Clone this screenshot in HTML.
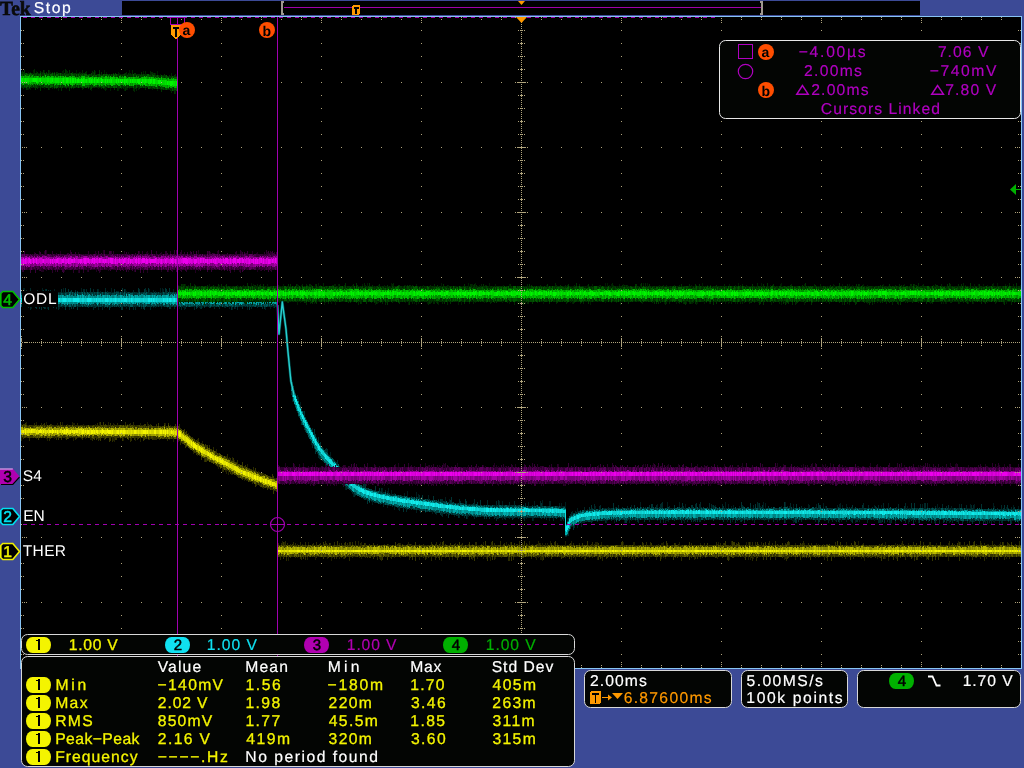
<!DOCTYPE html><html><head><meta charset="utf-8"><style>
html,body{margin:0;padding:0;background:#3c4a96;width:1024px;height:768px;overflow:hidden}
svg{position:absolute;left:0;top:0;display:block;will-change:transform}
text{font-family:"Liberation Sans",sans-serif;text-rendering:geometricPrecision}
.s{font-family:"Liberation Serif",serif;font-weight:bold}
</style></head><body>
<svg width="1024" height="768" viewBox="0 0 1024 768" shape-rendering="crispEdges">
<text class="s" x="0" y="15" font-size="20" fill="#0a0a0a" stroke="#0a0a0a" stroke-width="0.6" textLength="30.5" lengthAdjust="spacingAndGlyphs">Tek</text>
<text x="33.66" y="13" font-size="15.7" fill="#ffffff" letter-spacing="1.590" stroke="#ffffff" stroke-width="0.2">Stop</text>
<rect x="122" y="1" width="798" height="14" fill="#000000"/>
<path d="M281 1h3v2h-1v10h1v2h-3z" fill="#a09890"/>
<path d="M760 1h3v14h-3v-2h1v-10h-1z" fill="#a09890"/>
<rect x="284" y="7" width="477" height="1" fill="#a000a8"/>
<path d="M518 1h7l-3.5 4z" fill="#ff9900" shape-rendering="geometricPrecision"/>
<rect x="352" y="5" width="8" height="10" rx="2" fill="#ff9900"/>
<path d="M353.5 6.5h5v2h-1.5v5.5h-2v-5.5h-1.5z" fill="#000"/>
<rect x="20.5" y="16.5" width="1001" height="652" fill="#000" stroke="#88c4f4" stroke-width="1"/>
<g stroke-width="1">
<path stroke="#003434" d="M25 292v15M35 292v16M36 292v17M39 292v17M41 292v18M43 290v18M44 292v17M46 289v18M48 290v20M50 290v17M52 292v15M53 292v16M55 292v15M57 292v15M61 289v18M65 288v22M66 292v15M68 289v18M71 290v19M73 292v17M77 291v19M80 292v15M89 292v15M90 288v19M91 292v15M92 292v15M95 292v16M96 292v15M99 292v15M101 292v15M108 292v15M109 292v18M114 289v18M115 292v15M121 292v18M122 288v22M124 289v18M128 292v15M129 292v18M132 292v15M134 292v15M138 288v19M143 292v17M144 289v21M148 288v19M151 292v15M154 292v15M156 292v15M164 292v15M165 288v19M166 289v18M169 288v21M170 292v17M172 292v15M175 292v15M182 292v15M189 292v15M191 292v15M192 290v17M196 288v21M197 292v16M198 292v15M201 292v17M204 292v16M205 292v15M208 289v18M209 290v18M210 292v16M211 292v15M213 292v15M215 292v15M217 292v15M226 289v18M228 292v15M231 288v22M233 292v15M236 292v15M242 292v17M245 292v15M249 290v20M252 289v18M258 290v17M259 292v15M262 292v17M264 291v18M267 291v16M269 291v16M271 292v15M274 292v16M275 288v19"/><path stroke="#002828" d="M26 290v17M27 292v15M28 292v16M29 292v15M30 288v22M37 290v17M45 289v20M49 292v15M51 292v15M56 292v17M58 292v18M60 292v15M70 291v16M72 292v15M75 290v17M78 292v15M82 292v15M83 289v18M84 289v18M85 292v15M86 289v18M87 292v15M88 292v16M93 289v21M94 292v16M97 289v18M102 292v18M104 292v16M105 288v19M106 292v15M107 291v17M110 292v16M116 291v16M133 290v20M135 292v18M136 292v15M139 289v18M141 292v17M142 292v15M145 288v19M147 292v15M150 292v18M158 292v15M171 292v15M174 292v17M180 292v15M181 292v18M185 292v17M187 290v17M193 289v18M194 292v18M200 290v19M206 290v17M212 291v16M214 292v17M219 292v17M222 288v19M223 292v15M225 291v17M230 291v16M234 292v17M237 288v22M239 291v16M240 292v15M241 292v15M248 292v15M251 292v17M253 292v15M255 292v15M257 291v17M261 292v15M268 292v15"/><path stroke="#001d1d" d="M21 290v17M22 292v15M23 288v19M24 288v19M31 292v17M32 292v15M33 292v15M34 292v15M38 292v15M40 292v15M42 288v19M47 292v17M54 289v18M59 292v17M62 292v16M63 288v19M64 292v15M67 292v15M69 292v18M74 292v15M76 292v15M79 292v15M81 288v19M98 289v21M100 291v16M103 292v15M111 288v19M112 292v15M113 292v15M117 291v16M118 291v16M119 292v16M120 292v15M123 292v15M125 289v18M126 291v18M127 292v15M130 292v15M131 292v15M137 292v15M140 292v15M146 290v17M149 289v18M152 292v15M153 290v18M155 291v17M157 292v15M159 292v15M160 288v19M161 292v17M162 288v19M163 289v18M167 291v17M168 292v15M173 289v18M176 292v15M177 292v15M178 292v15M179 292v17M183 292v16M184 292v18M186 292v15M188 292v15M190 292v15M195 291v16M199 291v17M202 290v18M203 291v16M207 292v15M216 292v15M218 290v17M220 292v15M221 292v15M224 292v16M227 292v15M229 292v17M232 290v20M235 292v17M238 289v18M243 288v19M244 292v15M246 289v18M247 289v21M250 292v15M254 292v15M256 290v17M260 292v15M263 292v15M265 292v18M266 288v19M270 292v17M272 292v15M273 288v20M276 290v17"/><path stroke="#005858" d="M21 293v14M22 292v14M24 293v13M25 292v15M28 293v14M29 293v13M30 292v14M34 292v15M35 292v14M39 293v13M41 293v13M43 292v15M45 293v13M47 292v15M48 292v14M51 292v15M53 293v13M54 293v13M61 293v13M65 293v14M69 292v15M70 292v15M72 292v14M74 293v14M75 292v15M77 292v14M82 292v15M84 292v14M87 292v15M88 293v13M97 292v14M102 292v14M105 292v15M107 293v14M120 292v15M124 292v14M126 293v13M130 293v14M131 293v14M132 293v14M139 292v15M143 293v14M145 293v14M146 292v14M152 293v13M155 293v13M163 292v14M167 293v14M168 292v15M172 293v13M179 292v14M180 292v15M182 292v14M184 292v14M186 292v15M189 293v14M191 293v13M192 292v14M194 293v13M196 293v14M197 292v14M199 293v13M210 292v15M211 293v13M214 292v14M217 293v13M218 293v14M220 292v14M222 293v14M225 293v13M226 292v14M227 293v14M229 293v13M230 292v14M231 293v13M232 293v14M235 292v15M253 292v14M255 293v14M261 293v14M264 293v14M266 292v15M267 292v14M269 292v14M273 293v13"/><path stroke="#004444" d="M23 292v15M26 293v13M27 292v15M31 292v14M36 292v14M42 293v14M44 292v14M50 292v14M55 292v14M56 293v14M58 293v14M62 293v13M66 293v13M81 292v14M85 293v14M91 293v14M92 293v13M94 292v14M98 292v15M100 293v14M106 292v15M108 293v13M112 293v14M113 293v13M114 292v15M116 292v15M117 292v14M118 292v15M123 293v13M128 292v14M137 293v13M138 293v13M141 293v14M144 292v15M151 293v14M153 293v14M154 292v14M156 293v13M158 292v15M160 293v13M164 293v14M166 293v14M170 292v14M173 292v14M174 293v14M175 292v15M176 293v13M181 293v13M185 293v13M187 292v14M188 293v14M190 293v14M193 293v13M200 292v14M202 293v13M203 293v13M204 293v14M206 292v14M209 292v14M213 293v13M216 292v15M233 292v14M236 293v13M237 293v14M239 292v14M242 292v14M243 293v13M244 292v14M246 293v13M247 292v15M249 292v14M250 292v15M252 292v14M254 293v14M256 293v13M258 293v14M260 293v14M263 293v13M265 293v14"/><path stroke="#003131" d="M32 293v14M33 292v14M37 292v14M38 292v14M40 293v14M46 292v15M49 292v14M52 293v13M57 293v14M59 293v14M60 293v14M63 293v13M64 293v14M67 292v14M68 292v14M71 293v13M73 292v14M76 293v13M78 292v14M79 292v15M80 292v14M83 293v13M86 293v14M89 293v13M90 293v14M93 293v13M95 293v13M96 293v13M99 292v15M101 292v15M103 292v14M104 293v14M109 292v14M110 292v15M111 293v14M115 293v14M119 293v13M121 292v14M122 292v15M125 292v15M127 292v14M129 293v13M133 293v13M134 293v14M135 293v13M136 293v13M140 293v13M142 293v14M147 292v15M148 292v15M149 293v14M150 293v14M157 293v13M159 293v13M161 293v14M162 292v14M165 293v13M169 293v13M171 292v15M177 293v14M178 293v13M183 293v13M195 292v14M198 293v14M201 293v13M205 292v15M207 293v13M208 292v14M212 292v15M215 292v15M219 292v14M221 292v14M223 292v14M224 293v14M228 293v13M234 292v15M238 292v15M240 292v14M241 293v14M245 293v14M248 292v14M251 292v14M257 293v13M259 293v13M262 293v13M268 293v13M270 292v15M271 293v14M272 292v14M274 293v14M275 292v15M276 292v14"/><path stroke="#00acac" d="M23 295v9M24 295v10M26 295v9M28 295v9M29 295v9M31 295v9M32 295v10M40 294v10M43 295v10M44 294v10M46 295v9M49 295v8M50 295v9M55 294v10M56 294v11M62 295v9M67 295v10M77 294v10M78 295v8M80 295v9M82 294v10M83 295v9M85 296v8M88 295v10M97 295v10M103 295v9M107 295v9M109 295v10M115 295v9M120 295v8M121 295v8M123 296v8M126 294v9M129 294v10M131 295v8M132 295v9M133 296v8M135 295v9M137 295v10M144 295v8M146 295v9M148 295v9M149 295v9M152 295v9M154 295v9M156 296v7M157 295v9M162 295v8M166 295v9M167 295v9M172 295v9M173 296v9M174 294v10M177 296v8M178 296v8M181 294v9M182 295v9M183 295v10M189 296v8M193 295v9M199 294v10M201 295v8M205 295v9M211 295v9M212 294v10M213 295v9M216 294v10M217 295v9M222 295v9M225 296v8M227 295v8M232 295v9M233 294v10M235 295v10M237 295v8M238 295v8M240 295v9M241 294v11M244 295v8M247 295v9M249 295v9M251 294v10M256 295v10M260 294v9M263 295v9M269 294v9M270 294v9M273 295v8M275 295v9"/><path stroke="#009797" d="M21 295v8M25 295v9M27 295v9M33 295v9M34 295v9M35 295v10M36 295v9M38 295v10M39 294v10M45 295v9M51 295v9M52 295v10M57 295v9M58 295v9M60 295v8M63 295v9M64 296v9M65 296v8M69 294v10M73 296v8M89 294v10M91 296v8M93 296v8M98 295v9M100 294v10M102 295v9M104 295v9M105 295v10M110 296v8M111 295v8M114 295v10M116 294v10M127 296v8M136 295v8M138 296v7M139 295v9M140 295v8M143 295v9M145 296v8M147 295v9M159 295v8M160 295v9M163 295v10M164 295v10M165 295v8M168 294v9M170 295v10M176 294v11M179 295v9M180 295v8M184 295v10M186 295v9M187 294v10M191 294v10M194 295v10M196 295v9M197 295v9M202 294v11M203 295v9M204 295v8M209 295v8M210 295v9M214 295v8M215 296v8M219 295v10M221 295v8M226 295v9M230 295v9M231 295v10M239 295v10M242 295v9M245 294v10M246 295v9M250 294v9M252 295v9M253 295v9M254 295v9M257 295v8M258 295v10M261 295v10M262 295v9M264 295v9M267 294v9M268 295v8M271 295v10M272 295v9M274 296v8"/><path stroke="#008282" d="M22 295v9M30 296v8M37 296v7M41 295v10M42 295v10M47 296v9M48 295v10M53 295v8M54 295v10M59 295v9M61 295v9M66 295v9M68 295v9M70 296v8M71 295v9M72 295v10M74 296v8M75 294v10M76 296v8M79 295v8M81 295v9M84 295v9M86 295v10M87 296v8M90 295v10M92 294v10M94 296v7M95 295v8M96 296v8M99 295v8M101 296v8M106 295v10M108 295v10M112 295v10M113 295v9M117 296v9M118 295v9M119 295v9M122 295v8M124 295v9M125 296v8M128 294v10M130 295v9M134 295v9M141 294v9M142 294v10M150 295v8M151 295v10M153 295v9M155 295v10M158 295v9M161 296v8M169 296v8M171 294v10M175 295v9M185 295v9M188 294v10M190 296v8M192 295v9M195 295v9M198 295v10M200 295v8M206 295v8M207 294v9M208 295v9M218 295v9M220 295v9M223 295v9M224 296v8M228 294v10M229 296v8M234 294v10M236 296v8M243 295v9M248 295v9M255 295v9M259 295v8M265 295v9M266 295v9M276 294v11"/><path stroke="#10ecec" d="M23 298v4M24 298v4M27 298v4M29 298v4M30 298v4M37 298v4M43 298v4M53 298v4M55 298v4M56 298v4M57 298v4M59 298v4M63 298v4M64 298v4M65 298v4M73 298v4M74 298v4M75 298v4M76 298v4M77 298v4M78 298v4M87 298v4M88 298v4M89 298v4M90 298v4M96 298v4M105 298v4M106 298v4M107 298v4M115 298v4M124 298v4M125 298v4M126 298v4M131 298v4M148 298v4M149 298v4M151 298v4M153 298v4M163 298v4M167 298v4M169 298v4M170 298v4M174 298v4M177 298v4M178 298v4M180 298v4M186 298v4M187 298v4M190 298v4M194 298v4M199 298v4M201 298v4M202 298v4M205 298v4M211 298v4M215 298v4M217 298v4M219 298v4M224 298v4M233 298v4M235 298v4M242 298v4M244 298v4M248 298v4M249 298v4M251 298v4M254 298v4M255 298v4M256 298v4M257 298v4M259 298v4M262 298v4M264 298v4M265 298v4M266 298v4M271 298v4M272 298v4M273 298v4"/><path stroke="#0fdddd" d="M21 298v4M22 298v4M34 298v4M38 298v4M41 298v4M42 298v4M46 298v4M47 298v4M49 298v4M50 298v4M54 298v4M58 298v4M62 298v4M66 298v4M68 298v4M69 298v4M70 298v4M79 298v4M82 298v4M83 298v4M91 298v4M94 298v4M98 298v4M99 298v4M100 298v4M102 298v4M108 298v4M110 298v4M111 298v4M113 298v4M114 298v4M116 298v4M118 298v4M119 298v4M121 298v4M122 298v4M123 298v4M129 298v4M132 298v4M135 298v4M136 298v4M137 298v4M138 298v4M139 298v4M143 298v4M150 298v4M154 298v4M156 298v4M164 298v4M165 298v4M166 298v4M171 298v4M173 298v4M182 298v4M184 298v4M185 298v4M189 298v4M192 298v4M195 298v4M196 298v4M197 298v4M198 298v4M200 298v4M203 298v4M207 298v4M209 298v4M210 298v4M212 298v4M213 298v4M216 298v4M222 298v4M225 298v4M230 298v4M232 298v4M236 298v4M237 298v4M239 298v4M240 298v4M243 298v4M245 298v4M246 298v4M250 298v4M252 298v4M260 298v4M267 298v4M269 298v4M275 298v4M276 298v4"/><path stroke="#0ecfcf" d="M25 298v4M26 298v4M28 298v4M31 298v4M32 298v4M33 298v4M35 298v4M36 298v4M39 298v4M40 298v4M44 298v4M45 298v4M48 298v4M51 298v4M52 298v4M60 298v4M61 298v4M67 298v4M71 298v4M72 298v4M80 298v4M81 298v4M84 298v4M85 298v4M86 298v4M92 298v4M93 298v4M95 298v4M97 298v4M101 298v4M103 298v4M104 298v4M109 298v4M112 298v4M117 298v4M120 298v4M127 298v4M128 298v4M130 298v4M133 298v4M134 298v4M140 298v4M141 298v4M142 298v4M144 298v4M145 298v4M146 298v4M147 298v4M152 298v4M155 298v4M157 298v4M158 298v4M159 298v4M160 298v4M161 298v4M162 298v4M168 298v4M172 298v4M175 298v4M176 298v4M179 298v4M181 298v4M183 298v4M188 298v4M191 298v4M193 298v4M204 298v4M206 298v4M208 298v4M214 298v4M218 298v4M220 298v4M221 298v4M223 298v4M226 298v4M227 298v4M228 298v4M229 298v4M231 298v4M234 298v4M238 298v4M241 298v4M247 298v4M253 298v4M258 298v4M261 298v4M263 298v4M268 298v4M270 298v4M274 298v4"/>
<path stroke="#003434" d="M293 386v16M296 396v15M299 404v14M301 407v18M304 411v19M305 417v15M314 429v20M315 434v20M320 442v18M322 447v14M325 449v15M332 458v13M338 465v13M340 467v13M341 468v14M342 469v16M347 475v13M351 479v13M357 483v13M361 485v13M362 486v12M363 482v17M365 484v16M367 488v16M369 489v14M375 486v17M376 491v12M377 491v12M378 491v13M379 488v16M392 494v12M395 494v13M396 495v12M397 495v13M402 496v12M403 496v16M408 497v12M410 497v12M412 497v12M414 497v13M415 498v12M417 497v13M420 498v15M421 497v14M422 495v16M424 499v12M426 499v13M427 499v13M429 499v13M433 496v16M435 500v14M440 499v16M443 501v13M448 502v16M450 500v14M451 497v18M458 503v15M462 503v13M465 499v17M466 501v18M469 504v12M472 504v12M473 503v14M477 502v15M480 500v17M484 505v14M486 505v14M489 505v14M494 505v14M497 505v14M500 505v13M501 505v13M504 505v14M508 505v13M511 505v13M512 505v15M518 505v14M521 504v14M538 506v12M541 503v16M543 506v12M544 506v13M548 506v12M552 506v12M556 506v12M569 516v15M573 513v17M579 511v13M580 510v13M586 510v12M589 507v15M590 509v13M591 505v18M601 509v12M612 508v12M613 503v17M616 507v15M617 508v12M622 507v13M623 508v12M625 508v15M626 508v15M632 508v12M634 505v15M641 508v12M644 508v14M647 508v12M648 507v13M651 504v16M652 504v16M653 508v12M673 508v12M674 505v16M677 508v12M678 508v12M680 508v12M682 503v17M691 505v17M692 505v15M694 508v13M696 503v17M697 508v14M707 508v12M713 505v16M720 508v12M721 508v12M723 506v16M724 508v12M726 508v12M730 508v15M735 507v16M737 508v13M741 502v20M744 508v15M745 508v12M746 508v12M748 508v12M750 503v17M755 504v16M759 503v17M762 505v15M766 508v12M768 506v16M773 508v14M784 502v21M786 508v12M791 508v12M795 508v15M796 504v19M798 508v14M799 508v12M803 508v12M814 508v12M817 508v12M818 503v21M819 505v17M820 505v15M821 508v12M826 506v14M838 507v15M843 508v12M844 508v12M845 508v12M847 507v13M852 505v18M860 508v12M861 508v12M862 505v15M864 508v12M865 508v12M873 508v12M875 506v14M876 507v13M882 508v14M884 508v15M892 508v12M894 508v12M896 507v13M901 508v14M904 506v14M911 503v18M912 508v12M913 508v16M914 503v17M916 508v12M919 508v15M929 508v12M943 508v15M944 508v14M945 508v12M947 508v12M948 505v16M950 508v14M957 508v14M960 508v13M972 508v16M975 509v12M976 509v12M979 509v15M981 504v17M983 509v16M986 509v12M990 509v12M992 509v12M995 509v12M1003 508v13M1004 505v16M1007 505v16M1009 509v12M1010 509v15M1014 507v14M1016 509v12"/><path stroke="#002828" d="M291 377v17M294 390v15M295 393v15M297 395v18M307 421v14M309 425v14M310 427v14M312 428v20M316 437v15M317 440v14M318 437v21M319 443v16M326 448v18M327 449v17M329 455v13M331 457v16M334 460v14M336 462v14M337 460v17M343 470v17M344 472v13M346 474v16M348 476v13M354 476v21M358 479v17M359 484v13M364 483v16M368 488v13M373 490v12M374 490v13M381 488v16M383 492v15M384 492v13M385 490v15M393 494v12M399 495v16M400 495v13M406 496v16M411 496v13M413 497v13M419 495v16M430 500v12M438 499v14M441 499v17M442 499v18M444 501v13M447 502v12M452 502v13M455 503v12M457 503v13M459 499v19M460 501v14M463 503v13M464 504v14M474 499v20M475 504v13M479 505v12M483 505v12M485 505v12M487 500v17M488 505v12M490 505v12M492 505v12M493 505v12M496 501v20M498 500v19M503 505v13M505 505v15M506 505v13M507 505v13M509 502v17M510 505v13M513 505v14M514 501v17M519 505v13M520 505v16M522 506v12M523 506v13M524 506v15M525 503v15M526 506v13M529 506v12M530 506v12M531 506v12M532 506v15M535 506v12M536 506v12M537 506v12M540 501v17M546 506v14M547 506v12M551 506v12M553 506v15M554 506v12M557 506v12M563 506v15M564 506v13M568 519v17M570 514v15M571 512v15M574 513v15M575 511v14M576 512v13M578 511v13M582 511v12M583 510v13M584 507v16M585 510v12M588 510v12M592 508v14M593 509v12M594 504v17M596 509v12M597 509v13M599 506v15M600 505v16M602 508v13M603 508v13M605 508v15M608 507v13M618 505v16M627 506v15M628 508v12M633 508v12M637 508v14M638 508v15M639 508v12M642 508v12M645 507v13M649 505v17M650 508v12M654 508v12M656 505v15M658 508v12M659 508v12M660 504v19M661 503v17M662 502v18M663 508v15M669 506v14M670 508v12M681 507v16M683 506v15M687 508v14M689 508v12M693 508v14M695 504v18M698 508v12M699 504v18M700 502v20M701 507v13M702 508v12M703 508v12M704 508v13M705 508v12M706 508v12M708 508v12M709 503v17M711 504v16M714 506v14M716 508v12M717 508v12M718 508v12M722 504v16M729 508v12M734 508v12M736 508v12M738 508v12M740 508v14M742 505v16M743 506v14M747 508v13M749 508v12M753 505v15M754 508v15M756 508v12M757 502v18M767 508v12M769 508v12M771 508v12M774 508v12M780 508v12M782 508v12M783 508v12M787 506v14M790 503v17M794 508v14M800 508v12M801 506v16M810 508v12M812 508v12M813 508v12M815 508v14M822 508v12M824 508v13M828 508v15M831 508v12M832 508v14M836 508v14M848 508v12M851 508v14M854 508v12M856 508v14M857 508v14M863 503v17M866 508v12M867 508v15M868 505v15M870 508v12M871 508v12M872 508v12M878 505v18M879 508v15M880 508v15M883 503v17M887 508v14M891 508v15M898 504v16M902 508v12M905 503v20M906 508v12M909 508v14M920 504v16M921 508v13M924 503v17M925 503v17M927 503v17M931 508v15M933 508v12M935 506v18M936 508v12M938 508v12M939 507v17M940 508v12M942 504v16M946 506v17M952 508v15M953 508v13M954 508v13M955 508v13M958 508v16M961 504v17M962 508v16M965 508v13M966 505v16M971 505v17M973 505v17M977 509v12M978 509v12M982 509v12M984 509v13M987 509v15M989 509v14M991 508v16M996 509v12M999 509v15M1000 509v12M1001 505v18M1002 509v16M1008 508v14M1011 507v17M1012 509v12M1017 509v12M1019 509v12M1020 509v12"/><path stroke="#001d1d" d="M292 382v20M298 397v20M300 402v19M302 411v14M303 411v16M306 419v14M308 423v15M311 429v16M313 432v14M321 446v14M323 448v14M324 450v13M328 454v13M330 452v20M333 459v13M335 461v17M339 466v13M345 473v17M349 477v13M350 478v13M352 478v16M353 481v16M355 482v14M356 482v13M360 485v12M366 488v12M370 489v12M371 489v13M372 490v15M380 491v14M382 488v16M386 493v12M387 491v17M388 488v18M389 493v13M390 494v12M391 490v16M394 493v17M398 495v15M401 495v13M404 493v15M405 496v12M407 491v19M409 497v13M416 492v21M418 494v16M423 499v12M425 499v14M428 495v17M431 500v12M432 500v14M434 500v13M436 500v15M437 501v12M439 501v12M445 497v17M446 502v14M449 499v15M453 503v12M454 503v14M456 503v12M461 503v13M467 504v15M468 504v13M470 504v12M471 504v13M476 504v14M478 505v12M481 505v12M482 505v12M491 505v12M495 505v12M499 501v17M502 501v19M515 505v13M516 505v13M517 505v13M527 506v12M528 502v16M533 506v15M534 501v17M539 506v12M542 500v18M545 506v12M549 501v20M550 501v17M555 506v12M558 506v12M559 503v15M560 506v15M561 503v18M562 506v14M565 502v35M566 524v13M567 518v18M572 511v16M577 508v20M581 511v16M587 509v13M595 506v15M598 509v12M604 508v13M606 508v15M607 508v13M609 508v12M610 508v12M611 508v12M614 508v15M615 507v13M619 508v12M620 508v12M621 508v12M624 508v15M629 508v15M630 508v12M631 505v16M635 508v13M636 508v12M640 502v18M643 508v12M646 508v12M655 508v12M657 504v17M664 508v12M665 508v15M666 508v13M667 502v19M668 508v14M671 508v12M672 508v12M675 508v12M676 508v12M679 502v18M684 508v15M685 504v16M686 508v12M688 508v12M690 508v12M710 508v12M712 505v15M715 505v15M719 508v12M725 502v18M727 508v14M728 504v16M731 506v14M732 508v14M733 505v15M739 506v14M751 508v12M752 508v13M758 503v17M760 506v14M761 507v13M763 502v18M764 508v13M765 503v17M770 508v12M772 508v12M775 508v12M776 508v12M777 508v14M778 508v12M779 508v13M781 506v14M785 502v21M788 508v12M789 506v14M792 508v13M793 504v19M797 508v12M802 508v12M804 507v13M805 508v12M806 508v12M807 508v12M808 504v16M809 505v15M811 508v12M816 504v16M823 503v17M825 506v15M827 508v12M829 508v13M830 508v12M833 508v12M834 508v12M835 508v13M837 505v15M839 504v19M840 503v17M841 508v14M842 505v15M846 504v18M849 508v12M850 508v13M853 508v12M855 508v15M858 508v12M859 508v14M869 508v12M874 505v16M877 508v12M881 505v18M885 508v12M886 508v12M888 503v17M889 508v15M890 508v16M893 508v12M895 508v16M897 508v12M899 508v12M900 508v12M903 508v13M907 506v14M908 508v16M910 508v12M915 508v14M917 508v12M918 508v15M922 504v16M923 508v12M926 508v12M928 508v14M930 508v12M932 507v13M934 508v15M937 504v16M941 508v12M949 508v15M951 506v15M956 508v14M959 504v17M963 508v14M964 508v13M967 508v15M968 508v13M969 508v15M970 504v18M974 504v18M980 509v12M985 509v15M988 509v12M993 503v19M994 506v17M997 509v12M998 509v12M1005 509v12M1006 507v14M1013 505v16M1015 509v12M1018 506v19"/><path stroke="#005858" d="M293 386v15M295 394v13M298 401v15M302 411v14M305 418v12M306 420v13M308 424v13M309 425v14M314 435v13M316 438v14M324 450v13M325 452v12M326 452v13M327 453v12M332 458v13M336 464v12M338 464v14M340 467v14M345 473v13M348 477v12M353 481v11M356 483v12M357 485v11M358 484v12M360 485v12M361 485v13M363 488v10M369 489v13M374 491v10M376 492v10M377 492v11M378 491v13M385 492v13M387 493v12M388 494v11M395 494v12M396 496v11M397 496v11M398 495v12M404 496v12M406 496v12M407 497v12M408 498v11M409 497v11M414 497v12M425 499v13M428 500v11M429 501v11M433 501v10M434 500v12M439 502v11M446 501v12M452 503v10M457 504v10M460 503v12M462 505v11M465 504v12M469 505v10M471 505v10M472 505v11M473 505v11M476 504v13M477 505v11M482 506v10M483 506v10M484 505v12M486 505v12M488 505v12M490 506v11M491 506v11M492 505v11M499 505v13M500 505v11M501 506v11M504 506v11M505 505v12M506 505v12M508 506v10M510 507v10M515 505v12M522 506v11M527 506v11M535 506v11M537 505v12M540 507v11M544 506v12M545 506v11M550 507v11M552 507v11M555 506v12M562 508v11M564 507v11M569 516v13M573 514v12M580 511v12M581 512v10M582 510v11M583 510v11M595 510v11M596 509v11M597 509v12M599 510v10M602 508v11M605 509v10M606 509v11M607 510v10M613 508v11M616 508v13M619 509v12M620 509v11M621 509v10M623 508v11M624 508v12M626 509v11M630 507v13M635 508v12M637 507v13M640 507v13M644 509v10M647 507v13M650 508v11M657 508v12M660 508v11M662 508v11M663 509v11M665 508v11M672 509v11M676 508v12M677 507v12M680 508v12M685 509v11M686 508v11M687 508v11M689 507v12M690 508v12M691 509v10M694 508v11M697 507v13M701 508v12M702 509v11M704 508v10M705 508v11M706 508v12M708 509v11M711 508v11M714 509v10M715 507v12M717 508v11M719 507v13M722 508v12M728 508v12M735 507v11M736 509v11M740 508v11M744 507v13M745 509v10M746 508v11M749 509v11M753 509v9M756 508v10M757 508v11M760 508v11M768 509v10M769 508v11M773 507v12M779 507v13M784 507v12M785 507v12M786 507v13M788 508v11M789 508v11M795 508v12M796 508v11M797 508v11M799 507v13M805 508v12M809 509v10M811 508v11M812 507v11M813 507v13M820 507v13M826 509v11M827 508v12M838 508v11M839 508v12M842 508v12M843 508v12M844 509v11M847 509v10M848 509v11M854 509v10M870 509v10M873 509v10M877 508v12M881 509v10M884 508v11M885 509v10M887 508v11M888 509v11M889 508v12M890 507v12M895 508v13M901 508v11M908 509v10M910 509v10M913 509v10M914 508v12M918 509v11M919 508v12M920 508v12M921 508v12M922 508v13M924 509v11M925 509v11M926 509v12M927 508v12M929 508v13M932 508v12M934 509v12M935 508v12M939 510v9M941 508v11M942 508v11M943 510v9M945 508v12M951 510v10M954 508v13M956 509v11M960 508v12M961 508v13M962 509v12M963 510v11M964 508v11M967 509v12M975 510v11M976 509v11M977 508v12M978 509v12M979 508v11M980 509v12M981 509v11M982 509v12M988 508v12M993 508v12M994 510v10M995 509v11M1008 509v12M1015 509v13M1016 510v10M1017 509v13M1019 510v11"/><path stroke="#004444" d="M292 382v15M294 391v13M296 397v14M300 406v14M313 434v11M315 436v13M318 441v14M319 443v13M320 445v13M322 448v13M330 457v12M331 459v11M333 459v13M334 461v13M341 468v13M342 470v13M344 472v13M346 474v13M349 478v12M354 483v11M355 483v12M359 485v12M365 487v12M366 488v11M368 488v13M370 489v11M371 489v12M372 490v11M373 491v11M375 491v11M381 492v12M382 493v10M386 494v11M390 495v11M394 495v11M399 496v10M400 495v13M401 496v12M402 496v12M412 497v12M413 498v11M416 497v13M419 498v11M421 499v12M422 499v11M427 499v12M432 500v11M436 500v13M437 501v12M438 500v13M441 502v11M444 502v12M445 502v11M450 503v11M451 503v11M453 502v13M454 503v12M455 503v12M458 503v12M461 503v12M463 504v11M464 504v10M468 505v10M474 505v11M475 505v11M478 505v12M480 505v12M481 505v11M496 506v10M502 505v12M507 506v10M512 506v11M514 506v12M516 506v11M517 506v11M518 506v10M519 505v12M520 506v10M523 505v12M524 507v11M534 506v12M542 506v12M546 507v11M548 507v10M549 506v12M553 507v10M556 506v13M558 507v10M559 506v11M563 507v10M565 508v28M566 524v12M567 521v14M568 518v14M570 516v13M571 515v11M574 513v12M575 514v11M578 512v12M584 511v10M587 510v11M588 511v11M589 511v11M592 509v12M593 509v12M594 510v11M598 510v10M601 509v12M604 509v11M608 509v11M614 509v10M617 508v12M625 509v11M628 508v11M632 509v11M638 508v11M639 508v11M643 507v11M645 508v12M651 507v13M652 509v9M653 507v12M655 507v12M656 508v10M666 508v11M668 507v13M669 509v11M674 508v11M675 508v11M679 507v12M681 508v11M682 509v10M688 507v13M693 507v12M695 508v12M703 507v11M709 509v10M712 509v10M713 508v12M720 509v11M721 509v10M724 509v10M726 509v11M727 509v10M733 508v12M738 508v12M739 508v12M742 507v12M743 507v12M747 507v13M748 507v13M751 509v10M752 509v11M755 507v13M763 508v12M765 509v11M767 508v11M770 508v11M774 507v11M775 508v12M776 508v12M780 507v13M782 509v11M787 507v12M791 507v12M801 509v11M802 508v11M807 508v11M814 508v12M817 508v12M819 509v11M824 509v11M831 509v11M833 509v10M834 508v12M835 508v11M840 508v12M853 509v10M855 507v12M856 508v11M857 508v11M858 509v11M859 508v11M864 508v11M865 508v11M868 508v12M869 508v11M871 508v12M874 509v10M875 509v10M876 508v11M879 509v11M882 509v10M883 508v11M886 508v11M893 508v12M896 509v10M900 508v13M902 509v11M903 509v10M904 508v13M905 509v10M907 509v10M912 508v11M916 509v10M931 508v12M933 508v12M946 509v11M947 508v13M955 508v12M969 509v11M970 509v12M974 510v10M984 509v12M985 509v11M987 509v11M989 509v10M990 509v12M991 509v11M992 510v10M1002 510v11M1010 510v11M1012 510v10M1018 509v12M1020 509v11"/><path stroke="#003131" d="M291 377v18M297 399v14M299 405v13M301 410v12M303 414v12M304 414v14M307 422v13M310 428v13M311 429v13M312 431v12M317 440v13M321 447v12M323 449v13M328 455v12M329 456v13M335 462v11M337 464v13M339 466v12M343 470v13M347 475v14M350 479v11M351 479v12M352 481v12M362 487v10M364 487v13M367 488v13M379 492v10M380 492v12M383 494v10M384 494v10M389 493v12M391 495v10M392 494v13M393 495v11M403 497v11M405 496v13M410 497v12M411 498v12M415 499v11M417 498v11M418 499v11M420 499v12M423 500v11M424 499v12M426 500v11M430 500v12M431 500v12M435 501v10M440 502v11M442 502v11M443 502v12M447 503v11M448 502v12M449 503v12M456 504v12M459 504v10M466 504v12M467 505v11M470 505v10M479 506v10M485 506v10M487 505v11M489 506v11M493 505v12M494 506v12M495 506v12M497 506v11M498 506v10M503 506v11M509 505v12M511 506v10M513 505v12M521 506v12M525 505v12M526 506v11M528 507v11M529 507v11M530 506v11M531 506v11M532 505v13M533 506v12M536 505v13M538 507v11M539 506v11M541 505v13M543 506v11M547 507v11M551 507v10M554 507v11M557 506v12M560 507v11M561 508v10M572 515v11M576 512v13M577 513v10M579 512v12M585 512v10M586 510v12M590 510v12M591 510v11M600 509v12M603 509v11M609 508v12M610 509v10M611 508v13M612 508v11M615 509v11M618 509v10M622 508v11M627 508v12M629 509v10M631 509v10M633 508v12M634 508v11M636 508v12M641 507v12M642 509v10M646 508v12M648 509v10M649 507v12M654 509v11M658 508v11M659 507v12M661 508v12M664 509v9M667 507v12M670 508v10M671 508v11M673 508v12M678 507v12M683 507v12M684 508v10M692 509v10M696 509v10M698 508v11M699 509v11M700 508v10M707 507v13M710 508v12M716 507v11M718 508v11M723 509v10M725 509v11M729 509v10M730 508v11M731 508v10M732 508v12M734 508v11M737 508v11M741 509v9M750 509v11M754 508v10M758 508v12M759 507v12M761 507v13M762 509v10M764 509v11M766 509v11M771 507v12M772 508v11M777 508v12M778 508v10M781 508v11M783 507v12M790 509v9M792 509v9M793 507v12M794 508v12M798 508v11M800 509v11M803 508v11M804 508v10M806 508v12M808 508v11M810 508v12M815 507v13M816 507v13M818 508v11M821 509v10M822 508v11M823 507v13M825 509v10M828 508v10M829 508v12M830 508v11M832 509v11M836 509v9M837 509v11M841 509v10M845 508v11M846 508v10M849 507v12M850 508v11M851 507v13M852 507v12M860 509v11M861 509v10M862 509v10M863 508v11M866 508v12M867 509v10M872 507v12M878 508v12M880 509v11M891 508v13M892 508v12M894 509v10M897 509v11M898 508v12M899 509v11M906 508v12M909 509v11M911 509v11M915 508v12M917 508v11M923 508v13M928 508v12M930 509v10M936 508v13M937 509v11M938 508v12M940 510v10M944 508v12M948 510v9M949 509v11M950 508v13M952 509v11M953 509v11M957 509v11M958 509v12M959 508v12M965 509v12M966 509v12M968 509v11M971 508v12M972 508v12M973 510v10M983 509v10M986 510v10M996 509v11M997 508v13M998 509v12M999 509v12M1000 509v12M1001 510v11M1003 508v13M1004 509v11M1005 509v12M1006 510v10M1007 509v11M1009 509v12M1011 509v11M1013 508v12M1014 510v11"/><path stroke="#00acac" d="M291 379v12M297 401v10M303 415v10M305 420v8M312 432v11M317 442v9M329 457v10M331 459v9M332 461v9M334 462v10M335 463v9M339 468v10M341 470v9M342 471v9M344 474v8M349 479v9M352 482v9M353 483v9M358 485v9M363 488v8M366 490v8M367 490v8M370 491v7M371 491v8M374 492v9M375 492v9M378 494v7M379 494v8M383 494v9M391 496v8M393 496v9M395 496v8M396 496v8M400 497v8M403 498v9M404 498v8M407 498v9M409 498v10M410 500v6M412 499v7M416 499v8M418 499v9M419 501v7M425 501v8M429 502v8M443 504v8M444 504v7M449 504v9M453 505v8M454 505v8M455 504v8M457 505v8M462 505v8M463 505v8M469 507v6M476 506v8M477 507v8M480 507v8M484 507v7M486 507v7M487 507v8M492 508v8M495 508v8M499 508v8M503 508v7M504 508v8M505 508v7M507 507v9M510 507v9M511 507v9M512 508v7M513 508v8M517 508v8M519 508v8M520 508v7M521 507v9M524 507v9M525 507v9M528 508v7M531 508v8M532 507v9M536 508v7M539 507v9M542 508v8M543 508v7M545 508v8M548 508v8M549 508v8M552 507v8M554 508v8M555 508v8M556 508v8M560 509v8M565 509v26M566 525v10M569 518v11M576 514v9M577 514v8M578 513v9M586 511v9M587 511v9M588 512v8M589 511v9M592 511v9M594 510v9M596 511v8M598 511v8M599 510v9M616 509v8M618 509v8M630 510v8M632 510v8M634 510v7M635 509v8M641 510v8M642 509v9M644 510v8M646 509v9M655 510v8M656 510v8M658 510v8M664 510v8M667 509v8M668 510v8M669 510v7M670 510v8M674 509v8M675 510v8M683 510v8M684 510v7M688 509v8M693 509v9M694 509v9M701 510v7M705 509v9M706 509v8M707 510v7M709 510v7M710 510v7M713 510v8M716 510v7M717 510v7M721 510v7M724 510v8M727 509v9M728 510v7M729 509v8M730 509v9M733 510v8M734 510v7M735 510v7M740 510v7M742 509v9M744 510v8M746 509v8M749 509v9M750 509v9M752 510v8M757 510v8M762 509v9M763 510v7M770 509v9M771 509v9M776 510v8M780 510v8M781 509v9M782 509v8M784 509v9M785 509v9M788 509v9M799 509v8M802 510v7M803 510v8M804 509v9M807 510v8M809 509v8M810 509v8M812 510v7M817 510v8M822 509v9M824 509v9M828 510v8M829 511v6M830 510v8M833 509v9M837 510v8M840 510v8M842 510v8M843 509v9M844 510v7M845 510v8M846 509v8M849 510v9M854 510v8M858 510v8M864 510v8M865 510v8M868 509v9M873 509v8M874 509v9M877 509v9M882 509v9M883 509v9M886 511v8M890 511v7M898 509v10M900 510v8M902 509v10M904 510v8M906 510v9M913 510v7M916 510v8M918 510v8M921 510v7M922 510v8M925 510v8M930 511v7M938 510v8M940 511v8M943 510v8M944 511v7M949 510v8M953 511v7M956 511v7M965 510v9M969 511v8M970 511v8M973 510v8M976 510v9M977 510v8M980 510v9M986 511v8M987 511v8M995 511v7M997 511v7M999 510v9M1000 511v8M1002 511v8M1004 511v7M1005 511v8M1010 512v6M1014 512v8M1015 510v10M1019 511v9M1020 510v9"/><path stroke="#009797" d="M294 392v12M295 395v10M300 408v11M301 411v10M307 422v11M310 428v11M313 435v9M320 446v10M324 452v9M328 456v9M336 465v9M337 466v9M340 469v9M346 477v8M350 480v9M357 486v8M359 486v9M361 487v9M362 488v9M365 489v8M369 491v9M372 491v9M373 492v8M376 492v8M377 493v7M380 494v9M384 494v8M387 495v8M389 495v9M390 496v8M394 496v8M398 497v8M399 498v8M401 497v9M402 498v7M405 497v10M408 498v9M415 500v7M420 500v9M422 501v8M423 500v9M424 500v9M426 501v8M427 502v7M430 501v8M431 502v8M432 501v9M436 502v8M438 503v7M441 503v8M442 503v8M446 505v7M447 503v9M450 504v9M456 505v9M459 506v8M461 505v9M464 506v8M465 505v9M466 505v8M467 506v7M468 506v8M471 507v7M472 506v9M475 507v8M479 506v9M489 508v8M491 507v8M494 507v8M496 507v9M497 507v8M498 508v7M506 507v9M508 508v7M518 507v9M523 507v9M533 508v8M534 508v7M537 508v8M544 508v8M547 508v8M550 508v8M559 509v7M563 508v9M567 522v12M573 515v10M579 513v8M582 512v9M585 512v8M590 511v8M593 512v7M595 511v9M601 511v8M602 511v8M604 510v8M608 511v7M613 511v7M614 510v7M619 510v8M620 510v7M621 509v9M622 510v8M625 510v8M627 510v8M629 510v7M631 509v8M633 509v8M637 509v9M639 509v9M640 510v7M643 509v9M647 510v7M648 510v7M649 510v7M651 509v8M652 509v9M659 509v8M661 509v8M663 509v8M666 510v7M673 510v8M677 510v7M678 509v8M679 509v8M680 510v8M681 510v7M687 509v9M690 509v9M695 510v8M700 510v7M702 510v7M703 510v8M704 510v7M708 509v8M711 509v9M712 509v9M714 509v9M732 509v9M736 510v8M738 509v8M743 510v7M745 510v7M747 510v7M748 509v9M751 510v7M755 510v8M761 510v8M765 510v7M766 509v9M767 509v9M769 509v9M772 509v9M777 510v8M779 510v8M789 510v7M791 510v8M792 510v8M793 509v9M794 510v7M795 510v7M796 509v8M797 509v9M798 510v7M801 510v7M806 510v8M808 510v8M814 510v8M815 510v8M819 510v7M831 510v8M835 511v7M836 510v8M841 509v9M850 509v8M851 510v8M857 509v8M862 510v8M869 511v7M871 509v8M875 510v8M876 510v8M879 509v10M880 509v9M884 510v8M887 509v9M892 509v9M893 509v10M894 510v7M895 510v8M896 510v7M897 510v8M901 510v8M905 510v9M912 510v8M914 510v8M915 511v7M917 511v7M920 510v8M928 510v8M931 511v8M933 510v8M936 510v8M937 511v7M942 510v8M946 511v7M948 510v8M950 511v8M952 510v8M954 511v7M955 510v8M957 511v7M959 511v7M961 511v8M963 511v8M964 510v9M966 510v9M968 511v8M971 511v7M972 510v9M974 511v7M979 510v8M981 511v8M982 510v8M985 511v8M990 511v7M991 511v8M993 511v8M994 511v8M996 511v8M1003 510v9M1011 510v8M1013 511v7M1017 511v8M1018 511v8"/><path stroke="#008282" d="M292 384v13M293 388v13M296 399v10M298 404v9M299 405v11M302 412v11M304 417v10M306 420v11M308 425v9M309 427v9M311 430v10M314 436v10M315 438v11M316 439v11M318 443v10M319 445v10M321 448v10M322 449v10M323 450v10M325 453v9M326 454v9M327 455v9M330 458v9M333 462v8M338 466v11M343 473v8M345 475v9M347 477v9M348 478v9M351 481v9M354 483v9M355 484v8M356 485v8M360 487v8M364 488v10M368 490v9M381 494v8M382 494v8M385 494v8M386 495v8M388 496v8M392 496v9M397 497v8M406 498v8M411 498v8M413 499v9M414 499v9M417 500v8M421 501v8M428 501v9M433 502v8M434 503v7M435 502v9M437 503v7M439 504v8M440 502v9M445 504v7M448 505v7M451 504v8M452 505v8M458 505v8M460 505v8M470 506v8M473 506v8M474 506v8M478 506v9M481 506v8M482 507v8M483 507v8M485 507v9M488 508v8M490 507v8M493 508v8M500 507v9M501 508v7M502 507v9M509 508v8M514 507v9M515 507v8M516 507v8M522 507v8M526 508v7M527 508v7M529 508v8M530 508v8M535 508v7M538 507v9M540 508v8M541 508v8M546 508v7M551 507v9M553 508v8M557 508v8M558 508v9M561 508v9M562 508v8M564 509v8M568 521v10M570 517v9M571 516v9M572 516v8M574 514v10M575 515v9M580 513v8M581 513v8M583 512v9M584 513v8M591 511v9M597 511v8M600 511v7M603 511v7M605 510v9M606 511v7M607 510v9M609 510v9M610 511v6M611 510v9M612 510v7M615 511v7M617 510v7M623 510v7M624 509v8M626 509v9M628 510v7M636 510v8M638 510v8M645 510v8M650 509v9M653 509v8M654 510v7M657 510v8M660 510v7M662 510v8M665 509v8M671 510v7M672 510v7M676 510v8M682 509v8M685 510v7M686 510v8M689 510v8M691 510v8M692 510v7M696 510v8M697 510v8M698 510v7M699 509v8M715 510v7M718 510v7M719 510v8M720 509v9M722 510v7M723 510v7M725 510v7M726 510v7M731 510v8M737 510v8M739 509v9M741 510v8M753 509v8M754 510v7M756 510v7M758 510v7M759 510v8M760 509v9M764 509v9M768 510v7M773 509v8M774 510v8M775 510v8M778 510v8M783 510v7M786 510v8M787 509v8M790 510v8M800 510v8M805 510v8M811 509v9M813 510v8M816 510v8M818 510v7M820 510v8M821 509v9M823 510v8M825 510v8M826 510v8M827 510v8M832 510v8M834 509v9M838 509v9M839 510v8M847 510v8M848 510v8M852 510v8M853 510v8M855 509v9M856 510v7M859 510v8M860 510v9M861 510v8M863 511v7M866 510v7M867 509v9M870 510v8M872 510v7M878 510v8M881 510v8M885 509v8M888 510v7M889 510v8M891 510v9M899 511v7M903 510v8M907 510v8M908 510v7M909 510v8M910 510v7M911 511v7M919 510v9M923 511v8M924 510v9M926 511v8M927 511v7M929 510v8M932 510v7M934 510v9M935 510v9M939 510v9M941 510v8M945 510v8M947 511v8M951 510v8M958 511v8M960 511v8M962 510v8M967 510v9M975 510v9M978 511v7M983 511v8M984 511v8M988 511v8M989 511v8M992 510v8M998 511v7M1001 511v7M1006 511v8M1007 512v7M1008 511v8M1009 511v8M1012 511v7M1016 511v8"/><path stroke="#10ecec" d="M293 390v7M295 396v6M296 399v6M300 409v6M302 414v5M305 420v6M309 428v5M311 432v5M313 435v6M315 439v6M318 444v6M319 446v5M325 454v5M329 459v4M334 464v4M335 464v5M336 466v4M340 470v5M342 473v4M344 475v5M346 477v5M348 479v5M349 480v4M351 482v4M361 488v4M362 489v4M363 489v5M367 491v4M368 491v4M370 492v4M371 493v3M372 493v3M374 493v4M375 493v4M379 494v4M383 495v4M387 496v4M388 496v4M393 497v4M398 498v4M400 499v3M401 499v3M402 499v4M404 499v4M406 500v3M411 500v4M413 500v4M414 501v3M416 501v4M417 501v4M424 502v3M425 502v4M427 502v4M428 502v4M431 503v3M433 503v4M438 504v4M440 504v4M446 505v3M447 505v4M450 505v4M460 507v3M462 507v3M467 507v3M469 507v4M470 507v4M472 507v4M474 507v4M486 508v4M487 508v4M488 508v4M490 508v4M491 508v4M493 508v4M495 509v3M501 508v4M504 509v3M507 508v4M513 509v3M514 509v3M518 509v3M519 509v3M520 509v3M523 509v3M524 508v4M526 508v4M528 509v3M529 509v3M535 509v3M539 509v3M541 509v3M550 509v3M552 509v4M566 526v6M567 524v6M568 522v6M569 519v6M574 516v4M577 515v4M578 515v4M581 514v3M590 513v3M593 512v4M594 512v4M597 512v4M598 512v4M607 512v3M609 511v4M611 511v4M620 511v4M621 511v4M622 511v3M624 511v3M626 511v3M629 511v3M630 511v3M631 510v4M633 511v3M635 511v3M645 511v3M647 510v4M649 511v3M652 511v3M659 510v4M661 511v3M664 511v3M668 511v3M669 510v4M671 510v4M673 510v4M674 511v3M682 510v4M685 511v3M686 510v4M688 510v4M693 511v3M696 510v4M698 510v4M699 510v4M706 510v4M707 510v4M708 511v3M710 511v3M713 511v3M714 510v4M716 511v3M718 511v3M719 510v4M721 510v4M725 511v3M728 510v4M729 510v4M730 511v3M733 511v3M735 511v3M736 511v3M737 511v3M742 511v3M748 511v3M750 511v3M754 511v3M755 511v3M761 511v3M766 511v3M768 511v3M772 511v3M775 511v3M777 511v3M784 511v3M785 511v3M786 511v3M790 511v3M792 511v3M793 510v4M797 511v3M798 510v4M803 511v3M812 511v3M813 511v3M818 510v4M829 511v3M832 511v3M833 511v3M834 511v3M848 511v4M854 511v4M856 511v3M859 511v3M863 511v3M864 511v3M867 511v3M869 511v3M874 511v4M880 511v3M881 511v3M882 511v4M884 511v4M885 511v3M888 511v3M890 511v3M891 511v4M894 511v3M895 511v3M896 511v4M898 511v3M909 511v4M911 511v3M913 511v4M918 511v4M923 511v4M927 511v4M929 511v4M934 511v4M936 512v3M944 511v4M945 511v4M950 511v4M952 511v4M954 511v4M956 512v3M958 512v3M963 511v4M967 512v3M972 512v3M973 512v3M978 512v3M980 512v3M984 511v4M991 512v3M994 512v3M995 512v3M996 512v3M998 512v3M1001 512v3M1003 512v4M1008 512v4M1010 512v4M1013 512v3M1014 512v4M1016 512v3M1020 512v4"/><path stroke="#0fdddd" d="M291 380v9M297 402v6M298 404v7M303 416v6M306 422v6M307 424v5M310 430v5M312 433v6M316 441v5M321 449v5M324 453v4M326 455v5M327 456v5M328 457v5M330 459v5M331 460v5M332 462v4M337 466v5M338 468v4M341 471v5M343 474v4M347 478v5M358 487v4M359 487v5M360 488v4M364 490v4M366 490v5M377 494v4M380 495v3M382 495v4M385 496v3M386 496v4M389 497v3M390 497v4M394 498v3M395 497v4M399 498v4M403 499v4M407 499v4M409 500v3M410 500v3M412 500v4M415 501v3M418 501v3M419 501v4M421 501v4M426 502v4M430 503v3M432 503v4M434 503v4M436 503v4M437 503v4M442 504v4M445 505v3M448 505v3M449 505v4M452 505v4M453 506v3M455 506v4M456 506v4M457 506v3M459 506v4M463 506v4M468 507v4M471 507v4M473 507v4M477 507v4M478 508v3M484 508v4M494 508v4M496 508v4M497 508v4M499 509v3M502 509v3M505 509v3M506 508v4M508 508v4M509 509v3M510 508v4M511 509v3M512 509v3M515 508v4M522 509v3M525 508v4M527 508v4M531 509v3M540 509v3M543 509v4M546 509v4M549 509v4M553 509v4M556 509v4M558 509v4M560 509v4M561 509v4M563 510v3M564 510v3M565 510v21M571 517v5M573 517v4M579 514v4M582 514v3M583 514v3M585 513v4M586 513v3M587 513v4M588 513v3M589 512v4M591 513v3M599 512v3M602 511v4M603 511v4M604 511v4M606 511v4M608 511v4M610 511v4M617 511v4M618 511v3M627 511v3M638 511v3M639 511v3M642 511v3M653 511v3M655 510v4M656 511v3M665 511v3M672 510v4M675 510v4M676 510v4M677 511v3M679 511v3M680 510v4M683 510v4M687 510v4M690 510v4M694 511v3M695 511v3M697 511v3M701 511v3M703 511v3M705 511v3M712 510v4M715 511v3M722 511v3M726 511v3M727 511v3M732 511v3M740 511v3M741 511v3M743 511v3M744 511v3M746 510v4M747 510v4M749 511v3M753 510v4M758 511v3M759 511v3M760 511v3M764 511v3M767 511v3M769 510v4M770 511v3M771 511v3M776 511v3M778 511v3M779 510v4M780 511v3M781 511v3M782 511v3M783 511v3M788 511v3M791 511v3M795 511v3M796 511v3M800 511v3M802 511v3M805 510v4M807 511v3M809 510v4M810 511v3M811 511v3M816 511v3M817 511v3M819 510v5M822 511v3M824 511v4M825 511v3M828 511v3M831 511v3M836 511v3M837 511v3M840 511v3M842 511v3M845 511v3M847 511v3M849 511v3M852 511v3M855 511v4M857 511v3M860 511v4M866 511v3M868 511v3M870 511v3M873 511v3M877 511v3M879 511v3M883 511v4M886 511v3M887 511v3M889 511v3M892 511v3M897 511v3M900 511v4M901 511v3M902 511v4M907 511v4M910 511v4M912 511v4M914 511v4M916 511v4M917 511v4M919 511v4M920 511v4M931 511v4M932 511v4M939 511v4M941 511v4M942 511v4M943 511v4M946 511v4M947 512v3M955 511v4M959 511v4M960 512v3M961 511v4M964 512v3M969 511v4M971 512v3M974 512v3M975 512v3M976 512v3M979 512v3M981 512v3M987 512v3M989 512v3M992 512v3M993 512v3M997 512v3M999 512v4M1002 512v3M1004 512v4M1006 512v3M1007 512v4M1009 512v3M1012 512v3M1015 512v4M1017 512v3M1019 512v3"/><path stroke="#0ecfcf" d="M292 385v8M294 393v7M299 407v5M301 412v5M304 418v5M308 426v5M314 437v6M317 443v5M320 448v4M322 450v5M323 451v5M333 463v4M339 469v4M345 476v4M350 481v5M352 483v4M353 483v5M354 484v4M355 485v4M356 486v4M357 486v4M365 490v4M369 491v5M373 493v4M376 494v3M378 494v4M381 495v4M384 495v4M391 497v4M392 497v4M396 497v5M397 498v4M405 499v4M408 499v4M420 501v4M422 502v3M423 502v4M429 502v4M435 503v4M439 504v4M441 504v4M443 505v3M444 505v3M451 505v4M454 505v4M458 506v4M461 507v3M464 507v3M465 507v3M466 507v3M475 507v4M476 508v3M479 508v3M480 508v3M481 508v4M482 508v4M483 508v4M485 508v4M489 508v4M492 508v4M498 508v4M500 508v4M503 508v4M516 509v3M517 509v3M521 509v3M530 509v3M532 509v3M533 509v3M534 509v3M536 509v3M537 509v3M538 509v3M542 509v4M544 509v3M545 509v3M547 509v4M548 509v4M551 509v4M554 509v4M555 509v3M557 509v4M559 509v4M562 509v4M570 518v5M572 517v4M575 516v4M576 515v4M580 514v4M584 513v4M592 512v4M595 512v4M596 512v3M600 512v3M601 512v3M605 511v4M612 511v3M613 511v4M614 511v4M615 511v4M616 511v3M619 511v4M623 511v3M625 511v4M628 511v4M632 510v4M634 510v4M636 511v3M637 511v3M640 511v3M641 511v3M643 511v3M644 511v3M646 511v3M648 511v3M650 511v3M651 510v4M654 510v4M657 511v3M658 511v3M660 510v4M662 510v4M663 511v3M666 510v4M667 511v3M670 511v3M678 511v3M681 510v4M684 511v3M689 511v3M691 510v4M692 511v3M700 511v3M702 511v3M704 511v3M709 511v3M711 511v3M717 511v3M720 510v4M723 511v3M724 510v4M731 510v4M734 511v3M738 511v3M739 511v3M745 511v3M751 511v3M752 511v3M756 510v4M757 511v3M762 511v3M763 511v3M765 511v3M773 511v3M774 510v4M787 511v3M789 511v3M794 511v3M799 511v3M801 510v4M804 510v4M806 511v3M808 510v4M814 511v3M815 511v3M820 511v3M821 511v3M823 511v3M826 511v3M827 511v3M830 511v3M835 511v4M838 511v3M839 511v3M841 511v3M843 511v4M844 511v4M846 511v4M850 511v3M851 511v3M853 511v4M858 511v3M861 511v3M862 511v4M865 511v4M871 511v3M872 511v3M875 511v3M876 511v3M878 511v4M893 511v3M899 511v3M903 511v3M904 511v4M905 511v3M906 511v4M908 511v4M915 511v4M921 511v3M922 511v4M924 511v3M925 511v4M926 512v3M928 511v4M930 511v4M933 511v4M935 511v4M937 511v4M938 511v4M940 512v3M948 511v4M949 511v4M951 511v4M953 512v3M957 512v3M962 511v4M965 511v4M966 511v4M968 511v4M970 511v4M977 512v3M982 511v4M983 511v4M985 512v3M986 512v3M988 512v3M990 512v3M1000 512v3M1005 512v4M1011 512v3M1018 512v4"/>
<path stroke="#003400" d="M22 71v17M23 72v17M24 70v18M25 73v15M26 73v17M29 73v16M31 73v15M35 73v17M37 72v17M40 71v20M43 70v18M46 72v16M48 70v20M51 73v15M54 72v17M56 72v17M59 73v15M60 73v15M61 73v18M65 69v19M69 70v21M70 73v15M72 72v16M74 73v15M81 73v15M83 73v16M84 73v15M85 72v16M88 74v15M90 74v16M94 70v18M99 70v18M101 72v17M103 74v15M107 74v14M111 74v14M113 73v15M114 74v16M116 74v14M123 74v15M125 73v18M135 73v15M139 74v15M141 72v16M146 74v14M154 73v16M156 75v14M161 75v17M164 74v16M165 75v15M167 76v14M169 76v14M172 76v15M173 76v15M174 75v19"/><path stroke="#002800" d="M21 72v16M27 73v17M32 73v15M34 69v19M38 73v15M45 73v15M47 73v15M52 72v17M53 73v15M57 72v16M64 73v15M66 70v19M67 71v17M68 73v15M71 73v16M73 73v16M75 73v15M78 73v15M79 72v16M82 70v20M86 71v17M92 71v17M93 72v16M97 74v14M105 74v17M108 74v14M112 74v14M117 74v17M120 74v14M122 74v14M126 72v18M128 73v15M130 73v15M131 74v14M132 70v18M133 74v17M134 74v18M136 74v17M137 74v14M142 74v14M144 74v14M145 71v19M150 71v18M151 72v17M152 72v18M153 73v16M162 75v15M163 75v15M168 76v14M170 76v14M171 73v20M175 74v20M176 76v15"/><path stroke="#001d00" d="M28 72v18M30 72v18M33 70v18M36 71v17M39 73v15M41 72v16M42 72v16M44 70v19M49 70v20M50 72v16M55 73v15M58 73v18M62 71v17M63 70v18M76 70v18M77 73v15M80 72v16M87 74v14M89 74v14M91 74v17M95 71v17M96 74v14M98 74v15M100 74v14M102 74v14M104 70v20M106 72v18M109 74v14M110 74v17M115 73v15M118 72v19M119 73v16M121 74v14M124 73v18M127 74v16M129 70v19M138 74v16M140 74v14M143 71v17M147 74v14M148 74v14M149 74v15M155 73v16M157 71v20M158 75v14M159 75v14M160 74v16M166 75v15"/><path stroke="#005c00" d="M22 74v12M24 74v13M26 73v15M27 74v13M29 74v14M30 73v14M31 74v12M33 74v13M40 73v13M44 73v14M48 74v12M50 74v14M51 74v13M52 73v14M54 73v15M56 74v14M57 74v14M60 73v14M65 75v12M71 73v15M72 74v13M76 74v13M78 74v14M81 75v12M82 74v14M84 74v13M85 74v14M86 74v14M87 75v12M88 75v13M93 75v12M95 75v12M96 75v12M99 74v13M103 74v14M106 74v13M108 75v13M113 74v14M114 75v13M116 74v14M120 75v13M133 74v14M136 75v13M147 74v13M148 74v15M153 75v13M157 75v14M161 75v14M166 75v15M168 77v12M172 76v15M174 77v13M175 77v13M176 77v14"/><path stroke="#004700" d="M21 74v13M25 73v14M28 74v13M35 74v13M36 73v15M38 74v12M39 74v12M45 74v13M46 73v15M47 74v14M55 75v13M58 73v14M62 74v14M64 73v14M66 74v14M67 74v13M68 74v13M73 74v14M74 74v14M80 74v13M83 75v12M89 74v13M91 73v16M94 73v14M98 74v13M100 75v12M101 75v12M102 75v13M104 74v14M105 74v13M107 74v13M109 74v14M111 74v14M115 73v15M124 74v13M127 75v13M140 75v13M141 74v14M142 75v12M143 74v14M145 75v13M149 75v14M150 75v13M151 76v11M152 74v14M154 75v14M156 76v13M162 76v13M163 76v14M165 76v14M167 76v13M171 77v12"/><path stroke="#003300" d="M23 73v13M32 74v12M34 73v15M37 73v15M41 74v13M42 73v15M43 74v14M49 73v15M53 74v13M59 75v13M61 74v14M63 74v13M69 74v13M70 75v13M75 73v15M77 74v14M79 73v15M90 74v14M92 75v13M97 74v13M110 75v13M112 75v13M117 74v13M118 74v14M119 75v13M121 75v14M122 75v12M123 75v13M125 74v14M126 75v13M128 73v14M129 74v14M130 74v14M131 75v13M132 74v13M134 73v14M135 75v14M137 74v14M138 74v13M139 74v15M144 74v14M146 74v13M155 75v14M158 75v14M159 76v13M160 76v13M164 75v15M169 75v15M170 76v15M173 77v14"/><path stroke="#00c000" d="M21 76v8M23 76v9M28 76v9M37 76v9M42 76v9M45 75v10M46 77v8M47 76v8M48 76v9M50 77v7M51 76v8M52 76v8M55 76v9M58 76v9M60 76v9M63 76v9M64 77v8M65 76v10M66 77v7M67 77v8M68 77v9M70 76v9M71 77v8M72 76v10M82 76v10M83 76v10M84 76v10M90 77v8M91 77v7M94 77v9M95 77v8M96 77v8M105 76v10M106 76v8M110 76v9M111 77v9M112 77v9M113 76v9M114 77v8M116 77v7M117 77v8M124 76v9M125 76v10M127 78v7M129 77v9M133 77v9M140 78v8M142 77v9M144 76v9M145 77v9M149 77v9M151 77v9M156 78v9M159 78v8M161 77v9M168 78v10M172 79v8M173 78v9M175 79v9"/><path stroke="#00a800" d="M25 75v9M26 76v8M27 76v8M29 75v9M30 77v8M31 76v8M32 75v10M34 76v8M36 76v8M38 76v8M40 76v8M41 77v8M43 76v8M49 76v9M53 76v8M56 77v7M57 77v8M62 76v8M69 76v8M73 76v9M74 76v9M75 77v7M77 77v8M81 76v8M86 77v8M87 77v8M88 76v9M92 76v9M98 77v8M99 77v9M101 76v10M104 77v8M107 77v8M108 76v9M118 78v8M119 76v10M128 77v8M131 77v9M134 77v8M139 78v7M141 77v8M143 77v8M146 76v10M152 77v9M153 77v9M154 78v8M157 78v7M163 78v9M164 78v9M165 78v10M166 79v9M169 79v8M170 79v9M171 78v10M174 79v9M176 79v9"/><path stroke="#009100" d="M22 76v9M24 76v8M33 77v7M35 76v9M39 77v8M44 77v7M54 77v9M59 76v9M61 76v9M76 77v8M78 77v8M79 76v9M80 77v8M85 77v8M89 77v8M93 77v9M97 77v8M100 77v8M102 76v10M103 77v8M109 77v8M115 77v8M120 76v9M121 77v8M122 76v9M123 77v9M126 77v8M130 77v9M132 77v9M135 77v8M136 76v9M137 77v8M138 76v9M147 77v9M148 77v9M150 77v9M155 77v10M158 77v9M160 78v9M162 78v9M167 78v10"/><path stroke="#00f400" d="M21 78v4M22 78v4M25 78v5M33 78v4M34 78v4M35 78v4M36 78v5M40 78v4M52 78v4M63 78v5M66 78v5M67 78v5M70 78v5M72 78v5M73 78v5M75 78v5M77 79v4M78 78v5M81 78v5M82 79v4M83 78v5M86 79v4M89 78v5M91 79v4M94 78v5M97 79v4M101 78v5M102 79v4M105 79v4M107 79v4M111 79v4M116 79v4M118 79v4M120 79v4M122 79v4M124 79v5M126 79v4M130 79v4M132 79v4M137 79v4M138 79v5M139 79v5M142 79v4M145 79v4M150 79v5M151 79v4M153 79v5M154 79v5M158 80v4M159 80v4M160 80v4M167 81v4M170 81v5M171 81v5M172 81v4M176 81v5"/><path stroke="#00e500" d="M24 78v5M26 78v5M27 78v5M28 78v5M32 78v4M37 78v5M39 78v4M47 78v5M48 78v4M50 78v5M51 78v5M55 78v5M56 78v5M57 78v5M58 78v5M62 78v5M68 78v5M79 79v4M80 79v4M84 78v5M85 79v4M90 78v5M92 78v5M96 79v4M98 78v5M109 79v4M110 78v5M121 79v4M125 79v4M127 79v5M133 79v4M134 79v4M135 79v4M143 79v4M144 79v5M146 79v4M148 79v5M149 79v5M165 80v5M168 81v4M169 81v4M173 81v5M174 81v5"/><path stroke="#00d600" d="M23 78v5M29 78v4M30 78v5M31 78v4M38 78v5M41 78v5M42 78v4M43 78v4M44 78v5M45 78v4M46 78v4M49 78v5M53 78v5M54 78v5M59 78v5M60 78v5M61 78v5M64 78v5M65 78v5M69 78v5M71 79v4M74 78v5M76 79v4M87 79v4M88 78v5M93 79v4M95 79v4M99 79v4M100 78v5M103 79v4M104 79v4M106 79v4M108 79v4M112 78v5M113 79v4M114 79v4M115 79v4M117 79v4M119 79v4M123 79v4M128 79v4M129 79v5M131 79v4M136 79v5M140 79v4M141 79v4M147 79v4M152 79v5M155 79v5M156 80v4M157 80v4M161 80v5M162 80v5M163 80v5M164 80v5M166 80v5M175 81v5"/>
<path stroke="#003400" d="M177 286v16M180 286v17M181 284v18M184 284v18M186 286v16M187 286v16M190 283v19M192 286v16M199 286v16M204 286v19M207 285v17M211 286v16M212 286v17M213 285v17M218 284v19M221 284v18M226 284v18M228 286v16M229 286v16M233 286v16M235 286v16M245 286v18M247 283v19M255 285v18M259 285v17M261 286v16M262 286v17M263 284v18M270 286v16M273 286v16M275 286v16M276 286v16M278 285v17M282 286v16M288 284v19M290 284v18M295 286v16M296 284v18M304 286v17M308 286v16M309 284v18M311 285v18M312 286v18M316 284v20M319 286v16M327 286v16M336 286v16M340 286v16M341 286v16M345 283v19M347 286v16M348 286v17M349 286v16M351 286v16M353 284v18M356 283v20M357 285v17M360 286v18M366 286v18M369 283v19M370 286v16M372 285v17M374 286v17M376 286v18M379 284v18M387 285v20M389 286v16M397 286v16M398 285v18M399 285v19M400 286v16M401 286v16M407 285v17M409 285v20M411 286v16M415 286v16M417 286v16M420 286v16M422 286v16M426 286v16M429 286v18M437 285v19M439 286v16M440 286v16M443 284v18M444 286v18M446 286v16M449 286v16M450 286v18M451 286v16M454 286v16M460 286v16M463 286v16M464 284v20M465 286v16M467 286v16M474 284v18M476 285v17M480 286v16M482 286v16M483 284v18M487 286v16M494 286v17M496 286v17M497 286v16M498 286v16M499 286v16M500 286v16M501 286v16M506 286v16M511 286v16M515 286v16M518 286v16M520 286v16M521 286v17M522 286v17M523 286v19M529 284v18M531 285v17M532 286v18M534 286v16M539 286v16M541 286v16M544 286v16M547 284v18M549 286v18M550 286v16M553 286v16M554 286v16M557 286v17M558 286v16M559 286v16M560 285v17M561 286v16M562 286v16M568 284v18M575 286v16M576 283v19M578 286v16M582 286v16M588 284v20M591 286v16M603 286v16M614 286v16M615 286v16M622 285v17M624 285v17M626 285v17M628 286v18M631 286v16M635 284v18M636 284v18M641 283v20M646 286v16M649 284v18M650 286v16M653 286v16M654 286v18M656 286v18M658 286v18M660 286v17M662 286v16M670 286v16M672 286v16M675 286v16M681 284v19M684 286v18M685 286v19M688 286v16M690 286v18M695 284v20M698 286v16M699 284v18M700 286v16M713 286v19M715 286v16M716 285v19M718 286v16M720 286v16M723 286v16M726 286v16M736 286v16M739 286v16M751 286v17M752 284v18M759 286v19M760 286v18M762 286v16M763 284v21M767 283v19M773 284v19M774 286v16M776 286v16M783 286v18M785 286v19M787 286v17M788 286v18M789 286v16M790 285v17M792 286v19M794 286v16M797 286v17M798 286v16M802 285v17M805 283v20M806 286v16M809 286v16M811 286v19M815 285v17M816 286v16M823 286v16M824 286v16M830 285v17M836 286v16M837 286v16M838 286v16M839 283v20M840 286v16M841 286v16M843 286v16M844 286v19M845 286v16M846 286v16M848 286v16M851 286v16M853 286v16M855 286v19M856 284v20M857 286v16M858 284v18M862 285v17M864 286v17M868 286v17M869 286v19M870 286v17M871 286v16M875 286v16M880 285v18M882 285v18M885 286v16M888 286v16M889 284v19M893 286v16M896 286v16M897 286v18M900 286v19M901 285v17M903 285v17M907 286v17M909 286v16M912 286v17M913 284v18M916 285v17M917 286v16M920 286v17M921 286v17M924 286v16M926 286v18M936 285v17M937 285v17M938 286v16M940 286v16M942 286v16M944 286v16M947 284v18M948 286v16M949 283v19M952 286v16M960 286v16M961 284v18M967 286v18M970 283v19M975 286v16M979 284v18M980 286v16M981 286v18M985 286v18M989 286v16M990 286v16M994 286v16M998 286v16M999 286v16M1000 286v16M1002 286v16M1004 286v19M1016 283v19M1018 286v17M1019 286v16"/><path stroke="#002800" d="M179 286v16M182 284v18M183 284v19M191 286v16M193 286v17M194 284v20M195 285v17M197 286v16M198 286v16M201 286v16M202 286v16M203 286v16M206 286v16M208 286v17M214 286v16M215 286v19M217 286v16M222 286v18M223 286v17M224 286v16M227 286v18M230 286v17M232 286v16M234 286v18M236 286v16M238 286v16M240 286v16M242 286v16M243 285v17M244 286v17M246 286v18M248 286v17M249 286v16M250 286v16M252 286v19M254 285v17M256 286v16M257 284v18M258 286v16M260 284v18M268 286v17M271 286v18M272 286v16M274 286v16M277 284v19M279 286v17M280 286v16M284 286v16M286 286v16M287 286v17M289 286v16M292 286v16M293 286v16M298 285v17M302 284v18M305 286v17M306 284v21M310 284v20M315 284v19M322 286v16M323 283v19M326 286v16M328 286v18M330 286v16M332 285v17M337 286v16M339 284v18M342 286v16M344 285v17M350 286v17M354 286v16M358 286v19M361 286v18M364 283v19M365 285v17M371 286v17M380 286v17M382 286v18M383 286v16M385 286v19M392 284v19M393 283v19M394 286v16M395 286v16M396 286v16M403 286v16M410 285v17M412 285v19M413 286v16M425 286v16M428 286v19M430 285v19M431 286v17M433 286v18M434 284v20M435 286v16M436 286v17M442 286v18M445 286v16M447 285v20M453 286v16M455 286v16M456 286v16M459 286v16M466 286v16M469 286v18M470 284v18M471 284v18M473 285v19M477 286v16M481 284v18M485 285v17M488 286v16M490 286v18M491 286v17M492 286v16M507 286v17M510 284v18M513 286v16M514 286v19M519 286v18M525 286v18M526 286v16M527 284v20M528 286v18M530 286v16M535 286v16M536 286v16M537 286v17M538 286v16M540 285v17M542 286v16M551 286v16M555 283v19M556 285v19M564 286v16M565 285v17M566 286v18M567 285v18M569 286v16M573 286v18M574 285v18M577 286v16M579 284v18M580 286v18M581 286v17M583 286v18M585 286v16M589 286v16M593 286v16M596 286v16M597 286v16M600 285v17M601 286v16M602 286v16M610 286v16M612 283v19M617 286v16M620 286v19M621 286v16M627 285v17M630 286v16M638 286v16M644 286v16M645 283v19M648 286v16M652 286v17M657 286v16M661 286v16M663 285v17M665 286v19M666 285v19M667 286v16M669 286v18M671 286v16M673 286v16M674 285v17M677 286v16M678 286v17M679 285v19M682 286v16M683 286v18M686 286v18M689 284v20M693 286v17M705 286v16M708 286v16M710 285v19M714 286v16M717 286v16M719 286v16M722 286v17M724 284v18M731 286v18M732 286v16M733 286v16M737 286v18M740 285v19M741 286v16M742 284v20M744 286v17M746 285v17M748 286v16M749 286v18M750 286v17M753 286v16M754 286v17M756 286v16M757 283v19M766 286v16M768 286v16M772 285v17M777 286v16M779 286v18M791 284v18M795 286v19M796 286v18M800 286v16M801 286v16M803 286v16M807 286v16M808 286v16M813 286v16M814 284v18M818 286v16M820 284v18M821 286v16M825 286v16M827 286v16M829 286v18M832 286v16M835 286v16M847 284v20M850 286v16M859 284v18M861 286v16M866 286v17M872 286v19M876 286v16M877 286v17M878 286v16M879 286v16M881 286v16M884 286v16M886 286v18M890 286v16M892 286v19M894 286v16M895 285v17M898 286v19M899 284v18M905 286v17M906 286v16M910 284v18M911 284v18M914 284v18M918 283v20M922 285v17M923 284v18M927 286v16M931 286v17M932 286v18M933 285v17M934 286v16M935 284v18M939 286v16M941 284v20M950 284v19M951 286v17M954 286v16M955 286v16M956 286v16M957 286v16M958 284v20M962 286v16M963 283v20M966 286v17M972 286v18M976 286v16M986 286v16M988 286v16M991 286v16M992 284v18M995 286v18M1008 286v16M1009 283v19M1011 286v19M1012 286v16M1013 284v18M1014 286v17"/><path stroke="#001d00" d="M178 285v20M185 284v18M188 285v18M189 286v16M196 286v16M200 286v17M205 286v16M209 284v18M210 286v16M216 286v17M219 285v17M220 286v16M225 285v17M231 286v18M237 285v17M239 286v16M241 286v16M251 283v19M253 284v18M264 286v18M265 286v16M266 286v18M267 284v18M269 286v16M281 286v16M283 284v18M285 286v16M291 286v16M294 286v16M297 284v21M299 286v16M300 286v17M301 285v17M303 286v16M307 285v17M313 286v16M314 286v18M317 286v16M318 283v19M320 285v19M321 286v18M324 286v19M325 286v17M329 286v16M331 286v18M333 285v17M334 284v18M335 284v21M338 284v18M343 286v16M346 286v16M352 285v17M355 286v16M359 286v16M362 284v18M363 286v16M367 283v19M368 286v16M373 286v16M375 286v19M377 286v18M378 285v18M381 286v16M384 285v17M386 286v17M388 286v16M390 286v16M391 283v19M402 286v16M404 285v17M405 285v18M406 286v16M408 286v19M414 286v18M416 284v21M418 286v18M419 286v16M421 286v16M423 285v17M424 286v16M427 286v18M432 286v16M438 286v19M441 283v19M448 285v17M452 286v16M457 286v16M458 286v19M461 286v19M462 286v16M468 283v19M472 284v18M475 283v20M478 286v16M479 285v17M484 286v17M486 285v18M489 283v19M493 286v16M495 284v18M502 286v17M503 285v17M504 286v16M505 286v16M508 286v16M509 284v20M512 286v16M516 286v16M517 286v18M524 286v17M533 286v16M543 286v18M545 286v16M546 285v17M548 286v16M552 286v16M563 286v16M570 286v17M571 286v16M572 286v18M584 286v16M586 286v16M587 285v17M590 286v19M592 284v18M594 286v16M595 286v16M598 286v16M599 285v17M604 286v16M605 283v20M606 286v16M607 283v19M608 286v16M609 285v17M611 284v19M613 285v17M616 286v17M618 286v16M619 284v18M623 284v18M625 285v17M629 286v16M632 286v16M633 286v16M634 286v16M637 286v16M639 286v16M640 284v18M642 286v18M643 283v19M647 283v19M651 286v16M655 286v16M659 285v17M664 286v18M668 286v16M676 286v18M680 286v16M687 286v16M691 285v19M692 286v18M694 286v16M696 285v20M697 286v18M701 286v16M702 283v19M703 286v16M704 286v18M706 286v17M707 285v17M709 286v18M711 286v16M712 286v16M721 286v16M725 286v18M727 286v16M728 286v18M729 284v19M730 286v16M734 286v16M735 285v19M738 283v19M743 286v16M745 286v16M747 286v16M755 286v16M758 286v17M761 283v19M764 286v16M765 286v16M769 286v16M770 285v17M771 286v19M775 286v16M778 286v16M780 284v18M781 283v22M782 286v16M784 286v17M786 286v18M793 286v16M799 286v16M804 284v21M810 286v16M812 286v17M817 286v16M819 286v16M822 286v18M826 286v17M828 286v16M831 286v16M833 284v18M834 285v17M842 284v21M849 284v21M852 285v17M854 286v17M860 286v16M863 284v18M865 286v16M867 285v19M873 286v16M874 286v18M883 284v18M887 286v16M891 286v16M902 286v16M904 284v18M908 286v16M915 285v17M919 286v16M925 286v16M928 286v16M929 286v17M930 286v18M943 286v18M945 286v18M946 286v18M953 286v16M959 286v18M964 286v16M965 285v17M968 286v18M969 286v16M971 286v16M973 286v18M974 284v18M977 286v16M978 284v18M982 286v16M983 284v18M984 286v17M987 285v18M993 283v19M996 286v17M997 283v19M1001 286v16M1003 286v18M1005 284v18M1006 286v18M1007 285v17M1010 286v16M1015 286v16M1017 286v16M1020 285v17"/><path stroke="#005c00" d="M181 287v14M187 287v14M194 287v14M195 286v16M197 287v15M203 287v15M204 287v15M207 287v15M210 287v15M211 287v15M213 287v15M214 287v15M217 287v15M218 288v13M224 287v15M229 287v14M230 288v14M234 287v15M236 286v16M241 287v14M248 286v14M250 287v14M252 286v15M258 287v13M263 287v13M268 287v13M269 287v14M272 288v13M273 286v16M274 288v12M275 288v14M277 288v12M284 286v15M285 286v15M286 287v14M289 287v14M292 286v15M294 287v14M295 286v15M299 286v15M302 286v15M303 287v14M304 287v14M306 286v16M309 287v13M310 287v14M312 286v16M313 288v14M315 288v14M321 286v16M324 287v15M328 288v14M329 286v15M333 286v15M335 287v14M339 287v15M342 286v15M346 288v14M349 288v13M350 287v15M354 286v16M356 286v16M358 287v14M363 288v14M364 288v14M365 287v15M369 287v14M370 287v15M371 287v15M378 287v14M380 287v15M381 288v14M385 288v14M391 288v14M395 287v14M396 287v15M397 286v14M398 286v16M413 286v15M414 287v14M415 286v16M416 286v16M419 287v15M423 288v13M427 286v15M428 287v13M436 287v14M437 288v13M438 287v14M439 288v12M442 287v14M446 288v14M450 287v14M453 286v15M455 288v13M457 287v14M459 286v16M460 287v14M464 287v15M469 287v15M470 287v14M472 288v12M477 288v13M482 287v14M487 288v14M492 288v12M493 287v15M495 287v14M497 287v14M498 287v14M501 287v14M503 287v14M504 286v14M505 287v15M506 287v15M508 286v14M509 288v13M510 288v14M513 286v16M514 286v16M515 286v15M516 288v13M520 287v14M533 287v15M535 287v14M536 286v16M539 287v15M541 287v14M543 287v14M549 286v16M551 288v14M552 286v15M558 287v14M566 288v13M567 287v15M568 286v16M579 286v15M580 287v15M581 287v15M582 287v14M584 288v13M587 288v13M589 287v14M594 286v14M595 286v15M596 286v15M599 287v14M601 287v14M602 286v16M603 287v15M608 286v16M611 288v14M618 288v14M620 288v13M624 287v15M631 287v14M635 286v15M639 287v14M640 288v14M642 287v14M643 286v16M644 287v14M645 287v14M651 288v14M652 287v14M656 287v15M657 287v15M659 287v14M665 287v15M666 287v14M672 287v15M673 286v15M674 287v15M675 286v15M678 287v14M679 287v15M680 287v15M681 287v15M683 287v14M696 286v16M704 287v14M706 287v15M707 286v15M708 288v13M710 286v16M711 288v12M713 288v13M717 287v14M724 287v14M728 286v15M730 286v15M733 288v14M734 286v16M738 286v16M742 286v15M745 287v15M749 287v14M750 287v13M752 287v14M761 287v15M762 288v13M766 287v14M770 287v15M771 286v15M772 286v15M774 288v13M786 287v15M787 288v14M790 287v14M792 286v16M794 287v15M796 288v14M799 286v15M807 288v14M809 287v14M811 287v15M816 287v14M825 287v14M828 288v14M830 288v13M831 287v15M834 288v13M836 287v15M841 287v15M845 286v16M849 288v14M850 287v15M854 288v14M857 287v15M858 287v15M861 286v14M863 287v15M874 287v15M882 287v14M885 288v13M894 287v14M899 287v14M900 286v15M901 288v14M903 287v14M904 287v14M905 287v13M913 286v15M915 288v14M916 287v15M920 288v13M921 288v13M922 288v14M924 288v12M927 286v16M928 286v16M932 286v16M933 288v14M940 286v15M941 287v14M942 288v13M943 287v13M944 287v14M949 288v13M956 288v12M961 288v12M962 286v15M966 287v14M967 287v13M969 288v13M974 288v13M976 287v14M977 288v14M978 288v13M981 288v13M986 286v16M991 286v16M992 287v14M994 288v14M995 288v13M998 287v13M1005 286v14M1008 287v14M1009 286v15M1012 288v14M1013 288v12"/><path stroke="#004700" d="M178 286v16M182 287v14M183 286v16M185 288v13M186 286v15M189 288v14M192 286v16M198 287v15M201 286v15M202 286v16M205 286v16M216 287v14M219 287v14M220 288v14M223 286v16M226 286v16M227 287v15M228 286v16M232 287v14M233 288v13M235 287v14M237 287v15M239 287v14M240 286v14M245 287v14M254 287v13M259 287v14M260 286v14M264 287v15M267 287v13M270 287v15M278 287v14M279 287v13M280 287v14M282 288v13M290 287v14M291 287v14M297 287v14M300 287v14M305 287v14M307 286v15M308 287v15M314 288v13M316 286v15M319 286v15M320 286v16M322 287v14M323 287v14M326 286v16M330 286v16M331 286v15M332 286v15M334 287v15M336 287v15M338 288v12M340 286v16M341 286v15M345 286v16M351 288v13M355 288v14M357 288v14M361 287v13M362 286v14M368 286v16M372 287v15M374 288v14M377 286v15M383 287v13M384 288v13M387 288v13M388 287v15M392 286v15M393 287v14M394 288v13M402 288v14M404 286v16M407 286v15M408 286v15M411 287v14M417 287v15M421 288v13M422 288v13M434 287v14M445 287v15M448 288v13M452 288v14M454 288v13M456 287v14M461 287v14M465 287v14M466 288v12M473 287v14M478 287v15M479 287v14M480 288v14M481 287v14M483 288v14M486 286v16M489 288v14M499 288v13M500 287v14M511 288v13M512 288v13M517 286v15M518 287v15M519 286v15M521 286v15M524 287v14M526 287v15M527 288v13M528 288v14M530 288v14M531 286v16M532 286v16M537 287v15M544 286v16M545 287v15M546 287v15M548 287v14M550 287v13M554 287v13M556 287v15M557 287v15M559 287v15M560 287v15M561 286v14M562 287v15M563 287v14M564 288v14M565 287v15M570 287v14M572 288v13M574 287v15M575 287v15M576 286v15M583 287v15M585 288v13M588 287v15M592 287v15M607 287v13M612 287v14M615 287v14M616 288v14M623 287v14M627 287v14M630 286v16M632 287v15M636 288v12M638 288v13M646 288v13M647 287v14M648 286v16M650 287v14M654 288v12M655 288v13M661 287v13M662 286v16M664 287v15M668 287v13M670 288v13M671 288v13M676 288v13M684 287v14M686 286v15M687 286v15M689 288v14M692 288v14M693 287v14M694 288v12M695 287v14M699 287v15M700 286v16M709 287v15M712 287v13M715 288v12M719 288v14M720 288v13M722 288v13M726 288v13M727 288v13M731 286v15M735 287v15M737 287v15M739 286v15M743 286v15M754 287v15M756 287v13M757 288v13M758 286v15M759 287v14M764 286v16M765 288v12M767 288v14M775 287v15M778 288v14M779 286v15M780 286v15M781 287v15M782 287v14M784 286v15M785 287v14M788 286v16M789 288v13M791 286v16M795 287v14M797 288v14M798 286v16M800 287v14M802 287v13M803 286v16M804 287v14M806 286v16M808 286v14M810 286v15M812 286v16M818 287v15M822 288v14M823 286v15M826 288v12M827 287v14M829 287v14M832 286v14M835 287v15M838 286v15M839 286v16M840 287v15M844 288v14M847 287v14M851 287v14M853 287v15M859 287v15M860 287v14M862 288v13M864 287v14M866 287v15M867 287v15M868 287v14M869 288v13M871 288v13M872 288v14M877 288v13M878 286v15M884 287v15M887 287v14M888 288v14M890 286v16M891 287v15M892 286v15M893 287v15M896 286v16M902 287v15M906 286v15M907 286v15M909 287v13M914 287v15M917 286v15M918 287v14M919 287v14M929 287v15M930 288v13M935 287v13M945 288v14M948 286v15M952 287v14M953 287v13M954 287v14M955 288v13M957 287v14M960 287v15M964 288v12M965 286v16M970 287v15M972 288v14M973 287v14M975 287v14M979 287v14M983 287v15M984 287v15M987 287v14M988 287v14M989 287v14M996 287v15M999 288v14M1001 288v14M1003 286v16M1006 286v14M1007 288v13M1010 286v15M1014 287v15M1015 288v14M1016 287v13M1018 288v14M1019 288v13"/><path stroke="#003300" d="M177 286v15M179 287v14M180 287v14M184 288v13M188 286v14M190 288v13M191 287v14M193 288v14M196 287v14M199 287v14M200 287v15M206 287v15M208 288v14M209 288v13M212 288v13M215 286v14M221 287v15M222 288v13M225 288v14M231 287v14M238 288v13M242 288v14M243 288v13M244 287v14M246 287v15M247 286v15M249 287v13M251 286v15M253 287v14M255 286v16M256 286v16M257 288v14M261 288v13M262 288v14M265 286v14M266 288v14M271 286v16M276 287v15M281 287v14M283 287v15M287 286v16M288 287v14M293 287v15M296 287v13M298 287v14M301 288v14M311 288v13M317 287v13M318 287v14M325 286v15M327 287v15M337 287v14M343 287v14M344 287v14M347 286v15M348 288v14M352 287v13M353 286v16M359 287v15M360 288v14M366 287v15M367 287v13M373 287v14M375 287v15M376 286v14M379 286v16M382 286v16M386 288v14M389 286v16M390 287v14M399 286v15M400 287v14M401 287v13M403 287v14M405 288v14M406 286v15M409 288v13M410 287v14M412 286v15M418 288v13M420 287v14M424 286v16M425 287v14M426 287v13M429 288v13M430 288v13M431 288v14M432 286v15M433 287v13M435 287v14M440 287v15M441 287v15M443 286v16M444 287v15M447 287v15M449 286v15M451 287v14M458 288v14M462 287v15M463 288v14M467 287v14M468 288v14M471 286v14M474 288v14M475 287v15M476 288v13M484 286v15M485 286v15M488 288v13M490 287v14M491 286v15M494 287v15M496 286v15M502 286v15M507 286v15M522 288v13M523 287v14M525 287v14M529 286v15M534 288v13M538 286v15M540 286v15M542 287v14M547 286v15M553 287v14M555 286v14M569 287v14M571 287v15M573 287v15M577 287v14M578 288v13M586 288v14M590 287v15M591 286v15M593 287v14M597 286v16M598 286v15M600 288v13M604 287v14M605 287v14M606 287v14M609 287v14M610 287v13M613 286v15M614 287v14M617 287v15M619 286v15M621 286v15M622 287v14M625 287v15M626 287v13M628 288v14M629 287v15M633 287v14M634 287v14M637 286v15M641 287v15M649 286v15M653 286v15M658 286v16M660 287v14M663 287v14M667 287v14M669 288v14M677 288v13M682 287v14M685 287v14M688 287v14M690 287v14M691 288v14M697 286v16M698 287v13M701 286v16M702 287v15M703 286v16M705 286v15M714 287v14M716 288v14M718 286v16M721 286v15M723 288v14M725 286v16M729 286v15M732 288v14M736 287v15M740 287v13M741 287v14M744 286v15M746 287v14M747 286v15M748 287v15M751 287v15M753 286v16M755 287v15M760 286v16M763 288v13M768 287v13M769 288v14M773 287v14M776 287v14M777 287v15M783 288v13M793 288v13M801 288v14M805 287v14M813 287v14M814 288v14M815 288v13M817 287v14M819 287v14M820 287v14M821 287v14M824 287v14M833 287v15M837 286v14M842 287v15M843 287v15M846 286v14M848 288v13M852 287v14M855 286v16M856 288v14M865 288v14M870 286v14M873 288v14M875 287v14M876 286v15M879 286v15M880 288v12M881 287v14M883 287v14M886 287v15M889 287v14M895 287v15M897 286v14M898 287v13M908 287v15M910 287v15M911 287v14M912 287v15M923 286v15M925 286v15M926 288v12M931 287v15M934 287v13M936 288v13M937 286v16M938 288v13M939 288v13M946 287v15M947 286v16M950 286v15M951 287v14M958 288v14M959 286v15M963 287v15M968 287v14M971 288v13M980 288v13M982 287v14M985 287v14M990 287v15M993 286v15M997 286v15M1000 288v14M1002 288v14M1004 286v15M1011 288v12M1017 288v14M1020 287v15"/><path stroke="#00c000" d="M178 290v8M182 290v9M183 290v8M185 289v9M187 289v9M189 289v9M193 290v8M194 289v9M196 289v10M197 290v8M198 290v9M199 289v9M204 290v8M208 290v8M209 289v9M210 290v8M211 290v9M213 289v9M226 290v9M228 290v9M231 289v9M232 289v9M237 290v8M239 290v8M240 290v9M244 289v9M252 290v8M253 290v9M258 290v8M262 289v10M268 289v10M270 290v9M278 289v9M279 290v8M285 289v10M288 289v10M292 289v10M296 289v9M300 290v9M301 290v8M302 290v9M303 289v10M306 290v8M307 290v9M314 289v10M315 290v8M316 289v10M318 289v10M319 289v9M321 289v9M322 290v8M324 290v8M327 289v9M328 290v9M330 290v9M331 289v9M332 290v9M340 289v9M351 289v9M352 289v10M353 290v8M355 289v9M356 289v10M357 289v10M358 289v9M365 289v10M366 290v9M367 290v8M371 289v9M372 290v9M374 290v9M375 290v9M377 290v8M378 290v8M379 289v9M380 290v9M382 290v8M383 290v9M387 290v8M388 289v10M390 290v9M392 290v9M393 289v9M396 289v9M397 289v9M401 290v9M404 289v10M406 290v8M407 290v9M411 290v9M412 289v9M417 289v10M421 289v9M422 289v10M423 290v9M429 290v8M430 290v9M441 290v8M445 290v8M451 289v9M452 290v8M455 289v9M458 290v8M460 289v9M461 289v9M463 290v8M466 290v8M467 290v9M469 290v9M470 289v9M473 289v9M474 289v9M476 290v9M486 290v8M491 290v9M492 289v9M503 290v8M512 290v8M514 290v8M518 290v8M519 289v9M522 290v8M524 289v10M527 289v9M532 289v9M534 290v8M535 289v9M541 290v9M543 290v8M544 290v9M551 290v8M553 290v8M554 290v9M557 289v9M561 289v10M566 290v8M570 289v9M573 290v8M577 289v10M579 290v9M581 290v9M582 289v9M585 290v8M589 289v9M590 289v10M591 290v9M598 289v9M605 290v9M608 290v9M612 290v8M618 290v8M624 290v9M628 289v9M630 290v9M631 290v8M633 289v9M634 289v9M637 290v8M640 289v9M641 289v10M643 289v9M645 289v10M646 290v9M654 290v8M657 290v8M662 290v9M667 289v10M668 289v9M670 290v8M674 289v9M675 290v9M676 290v9M677 290v9M679 290v8M680 290v8M684 290v9M686 289v9M688 289v9M693 290v8M698 290v8M699 290v8M701 290v8M702 290v9M712 289v10M719 290v8M721 289v9M723 290v8M727 289v9M728 290v8M729 290v8M730 289v9M732 290v8M734 290v9M737 290v8M740 290v8M742 290v8M744 289v10M745 290v8M747 289v9M748 289v9M750 289v9M751 290v8M754 290v8M755 289v9M758 290v8M760 290v8M761 289v10M764 290v8M768 289v9M771 289v10M772 289v9M775 290v8M776 290v8M777 290v9M785 290v8M788 289v9M789 290v9M791 289v9M792 289v9M796 290v9M804 290v8M807 289v9M808 290v8M814 289v10M816 289v10M821 290v8M823 290v8M828 289v10M832 290v9M834 290v8M838 290v9M841 289v10M846 290v8M850 290v9M851 290v8M853 290v8M857 290v9M861 290v9M863 290v9M870 290v9M878 290v8M879 289v9M881 289v9M885 290v9M886 289v10M895 289v10M898 290v9M901 290v9M905 289v9M906 290v8M915 290v8M935 290v9M938 289v9M948 290v8M952 290v8M956 290v9M959 290v9M961 290v8M965 289v10M967 289v9M971 289v10M972 289v9M974 290v9M975 290v8M976 289v10M981 290v8M982 290v9M983 290v8M984 290v9M985 289v10M986 289v9M988 290v9M989 289v9M993 289v9M997 289v10M999 290v8M1001 289v10M1002 290v8M1004 290v8M1008 289v9M1010 290v8M1012 290v8M1013 289v9M1018 290v9"/><path stroke="#00a800" d="M177 289v10M179 289v9M180 290v8M184 290v9M190 289v9M191 289v10M200 290v9M202 290v8M203 289v9M205 290v9M207 289v9M214 290v8M215 289v10M216 289v9M217 290v8M218 289v9M221 289v9M224 290v8M225 290v9M227 289v9M229 290v9M233 290v8M235 290v8M238 290v8M241 290v8M246 289v10M248 289v9M249 290v8M251 290v8M254 290v8M255 289v10M260 290v9M261 289v9M263 290v9M264 290v9M265 290v9M267 289v10M273 290v8M274 289v10M275 290v9M280 289v10M281 290v8M283 290v9M290 290v8M291 290v9M293 289v9M298 290v8M299 289v9M311 290v8M312 289v9M313 290v8M317 289v9M320 289v9M323 290v9M329 290v9M333 290v9M336 290v8M337 289v10M342 290v8M345 290v9M346 290v8M349 289v10M350 289v10M354 289v10M359 290v9M360 289v9M361 290v9M362 290v8M364 290v8M368 289v9M376 289v10M385 290v8M389 290v9M398 290v8M399 289v9M400 290v9M403 289v9M405 290v8M408 290v9M413 290v9M418 290v9M419 290v8M425 289v10M426 290v8M427 290v9M432 290v9M434 290v9M443 289v10M447 290v9M448 290v8M450 289v9M454 290v8M457 289v10M459 289v10M462 290v8M464 289v9M471 290v8M478 290v8M480 290v9M481 290v8M482 290v9M483 290v8M488 290v9M493 290v8M498 289v9M502 290v8M504 290v9M505 290v8M506 290v9M510 289v9M513 289v9M516 290v8M521 290v9M529 289v9M530 289v10M531 289v9M533 290v9M537 290v8M538 289v10M539 289v9M540 289v10M542 290v8M548 289v10M549 290v8M555 289v9M556 290v9M558 290v9M559 290v9M562 290v9M563 290v8M565 290v8M567 290v9M568 290v9M569 290v8M575 289v9M576 290v8M580 289v10M583 290v9M587 290v9M593 290v8M594 290v9M595 290v8M596 290v8M599 289v9M602 290v9M603 290v9M606 290v8M609 290v9M610 290v8M614 290v9M615 290v8M616 290v9M619 289v9M622 290v8M623 289v10M626 289v9M629 290v8M635 290v9M636 289v9M638 289v10M639 290v8M648 289v9M649 290v8M652 290v9M656 290v8M658 289v9M659 289v9M663 289v9M664 290v8M666 290v9M673 290v8M682 289v10M685 290v9M687 290v9M689 289v10M691 289v10M694 290v9M697 290v8M700 290v8M708 290v9M709 290v8M711 290v9M713 289v9M716 290v8M717 290v8M722 290v8M724 290v9M726 290v8M731 289v10M733 290v8M739 290v8M741 290v9M756 290v8M759 289v10M766 289v9M767 290v8M770 290v9M773 290v8M780 290v8M781 290v9M783 289v9M784 289v9M787 289v9M790 289v9M793 290v8M798 289v10M800 289v9M805 289v10M806 290v8M810 289v9M811 290v8M815 290v8M824 289v10M825 290v8M827 289v9M829 290v8M831 290v8M842 289v9M848 289v9M852 290v9M854 289v9M859 289v10M867 290v8M868 289v10M871 289v9M873 289v9M883 289v10M888 289v9M889 289v10M890 289v9M892 290v8M893 290v8M894 290v9M900 289v10M902 290v8M904 290v8M907 290v8M908 290v9M910 289v9M912 290v8M914 290v8M917 289v10M918 290v8M921 290v8M922 290v9M923 290v9M924 290v8M926 290v8M927 290v8M928 290v9M929 290v8M932 290v8M934 290v8M936 289v10M940 290v9M941 289v10M942 289v10M944 290v8M945 290v8M946 290v9M947 290v8M950 289v9M951 290v8M957 290v8M964 290v8M968 289v9M969 290v8M973 289v10M977 290v9M979 290v9M980 290v8M987 290v9M991 290v8M992 289v10M994 289v9M996 290v8M1006 290v8M1007 289v9M1014 290v9M1015 289v9M1019 290v8M1020 289v9"/><path stroke="#009100" d="M181 290v8M186 289v10M188 290v9M192 290v8M195 289v9M201 289v9M206 289v9M212 289v9M219 290v8M220 290v9M222 289v9M223 289v9M230 289v9M234 289v9M236 290v9M242 290v8M243 289v9M245 290v8M247 289v9M250 290v8M256 290v8M257 290v8M259 290v9M266 290v8M269 289v9M271 290v8M272 290v8M276 290v8M277 289v9M282 290v9M284 290v9M286 289v9M287 290v8M289 289v9M294 289v9M295 290v8M297 290v8M304 290v8M305 290v8M308 289v9M309 290v9M310 289v9M325 289v9M326 290v8M334 289v9M335 289v9M338 290v8M339 289v10M341 289v9M343 290v9M344 289v9M347 289v10M348 289v10M363 289v9M369 289v9M370 290v8M373 290v8M381 290v8M384 290v8M386 290v8M391 290v8M394 289v9M395 290v8M402 290v9M409 289v9M410 290v8M414 289v9M415 290v9M416 290v9M420 290v8M424 290v9M428 290v9M431 289v9M433 289v10M435 289v10M436 289v9M437 290v8M438 289v10M439 289v10M440 290v8M442 290v8M444 290v9M446 290v9M449 290v9M453 290v8M456 290v8M465 290v8M468 290v8M472 290v9M475 289v9M477 290v9M479 290v9M484 289v9M485 290v8M487 289v9M489 290v8M490 289v9M494 290v9M495 290v8M496 290v8M497 289v9M499 290v8M500 289v10M501 289v9M507 290v8M508 289v9M509 289v9M511 289v9M515 290v8M517 289v9M520 290v8M523 290v9M525 290v8M526 290v9M528 290v8M536 290v9M545 290v8M546 290v8M547 289v9M550 290v9M552 289v10M560 289v9M564 290v8M571 289v10M572 290v8M574 290v9M578 289v9M584 290v8M586 289v9M588 290v9M592 290v8M597 289v9M600 289v9M601 290v9M604 289v10M607 289v9M611 289v9M613 290v8M617 289v9M620 290v9M621 289v9M625 289v9M627 290v9M632 289v10M642 289v9M644 289v9M647 289v9M650 290v9M651 290v8M653 289v9M655 290v8M660 289v9M661 289v9M665 290v8M669 290v9M671 290v8M672 289v9M678 290v8M681 290v8M683 289v9M690 289v10M692 290v9M695 290v9M696 290v9M703 289v10M704 290v8M705 289v9M706 290v8M707 290v8M710 290v9M714 290v8M715 289v9M718 290v9M720 290v8M725 290v8M735 290v9M736 290v8M738 290v8M743 289v9M746 289v9M749 290v8M752 289v9M753 290v8M757 290v8M762 290v9M763 289v10M765 289v10M769 290v8M774 290v8M778 289v10M779 289v10M782 289v9M786 290v8M794 289v9M795 289v10M797 290v8M799 290v9M801 290v9M802 289v10M803 290v9M809 290v9M812 289v9M813 289v10M817 290v8M818 289v10M819 290v9M820 290v8M822 290v9M826 290v9M830 290v9M833 289v10M835 290v9M836 290v9M837 289v10M839 290v8M840 290v8M843 289v10M844 290v8M845 290v8M847 289v10M849 289v9M855 290v8M856 289v10M858 289v10M860 290v8M862 290v9M864 290v8M865 290v9M866 290v9M869 290v8M872 290v9M874 290v9M875 289v10M876 289v9M877 289v9M880 289v9M882 289v9M884 290v8M887 290v9M891 289v9M896 290v9M897 290v8M899 290v8M903 290v8M909 290v9M911 290v9M913 290v8M916 290v8M919 290v8M920 290v8M925 289v9M930 289v9M931 290v8M933 289v9M937 290v8M939 289v9M943 290v9M949 289v9M953 290v8M954 289v9M955 290v8M958 290v8M960 290v8M962 290v8M963 290v8M966 289v9M970 290v9M978 290v9M990 290v8M995 290v9M998 290v9M1000 290v8M1003 290v8M1005 290v9M1009 290v8M1011 290v9M1016 289v9M1017 290v9"/><path stroke="#00f400" d="M183 292v4M185 291v4M187 292v4M189 292v3M193 292v4M195 291v5M201 291v5M210 291v5M215 291v4M222 292v4M223 291v4M225 292v3M228 292v4M232 292v3M233 292v3M235 292v4M237 291v5M238 291v4M242 291v5M244 291v4M245 291v5M247 292v3M249 291v5M251 292v4M252 291v4M254 292v4M257 291v4M261 292v3M262 292v4M265 292v3M269 292v3M270 291v4M271 292v4M272 292v4M274 291v4M276 291v5M278 291v5M283 291v5M285 292v4M289 291v4M291 291v4M297 291v5M300 291v4M302 291v5M303 292v3M304 291v4M314 292v3M315 292v4M319 291v5M323 292v4M333 292v4M334 292v4M337 292v4M338 292v3M341 291v4M343 292v4M346 291v4M351 291v5M353 292v4M358 291v4M360 292v4M366 292v3M369 292v3M370 292v3M372 292v4M375 292v3M383 292v4M384 292v3M387 291v4M388 291v4M393 291v4M397 292v4M399 292v3M403 292v3M414 291v5M417 292v3M420 291v5M421 292v4M423 292v4M424 292v3M425 292v4M426 291v5M428 291v4M438 292v3M440 292v3M444 292v4M446 291v4M447 291v4M457 291v5M458 291v4M460 292v4M462 292v3M463 292v3M464 292v4M465 291v5M468 292v3M470 292v4M472 292v3M473 291v4M474 292v4M475 291v4M479 291v5M483 291v4M484 292v3M488 292v4M496 292v4M497 291v5M506 291v4M507 291v4M511 291v5M516 292v3M517 291v4M519 292v3M520 291v5M526 291v5M531 292v4M535 291v4M538 292v3M539 291v4M541 292v3M546 291v5M548 291v4M550 291v4M553 292v4M554 292v4M555 292v4M567 292v4M570 291v5M571 292v3M576 292v3M578 292v3M580 291v4M584 291v4M589 292v3M590 291v4M592 291v5M593 292v4M594 292v3M600 292v3M601 292v3M602 292v4M606 291v4M608 292v3M609 291v5M610 292v4M617 292v4M618 291v5M621 291v5M624 291v4M626 291v5M628 291v4M629 291v4M633 291v4M634 292v4M640 291v4M644 291v5M645 292v3M648 291v4M650 292v3M652 292v4M655 291v4M656 291v4M657 292v4M658 292v3M660 291v5M662 291v5M664 292v3M670 291v4M672 292v4M677 291v4M679 291v4M680 291v5M682 292v4M683 291v4M687 292v3M688 292v3M692 292v3M702 292v4M703 291v5M704 292v3M707 291v4M709 291v5M712 292v3M717 291v5M718 291v4M719 292v3M723 291v4M724 291v5M725 292v3M727 292v4M731 292v4M732 291v5M734 291v5M735 292v4M737 292v4M743 292v4M745 292v4M746 291v5M747 292v3M748 292v4M749 291v4M750 292v3M752 292v4M757 292v4M759 292v3M760 292v4M761 292v4M762 291v4M763 292v4M765 292v4M767 292v3M771 291v5M772 291v4M776 292v4M779 291v4M780 291v5M782 291v5M783 292v3M785 292v4M786 291v4M790 292v4M796 292v4M801 292v3M803 292v4M807 292v3M812 292v4M817 291v5M818 292v4M825 291v4M833 292v4M835 291v4M851 291v5M852 291v5M861 292v4M864 291v5M865 292v3M866 292v4M874 291v4M878 291v4M880 291v5M882 291v4M883 291v4M884 291v4M885 291v5M897 292v4M901 292v3M902 292v3M903 291v4M905 292v4M910 291v4M912 291v4M913 291v4M915 291v4M918 291v4M927 292v4M931 292v3M932 292v3M935 291v4M938 291v5M940 291v5M941 292v4M942 291v5M946 291v4M949 291v4M952 292v4M953 291v4M956 292v3M958 291v5M973 292v3M974 291v4M979 292v3M981 292v3M984 291v5M987 292v3M988 291v5M992 292v4M994 292v4M998 292v3M1005 292v3M1009 291v4M1013 292v3M1014 292v3"/><path stroke="#00e500" d="M178 291v4M179 292v3M180 291v5M181 292v3M182 291v4M184 291v5M186 292v3M188 292v3M194 292v4M198 292v3M200 291v5M204 292v4M205 291v5M207 291v5M212 291v4M213 292v4M214 291v5M216 291v4M218 292v4M219 291v5M220 292v4M226 291v5M229 292v3M230 292v4M234 291v4M236 292v4M239 291v5M240 292v4M243 292v4M250 291v4M253 292v4M255 292v3M258 291v4M259 291v5M263 292v3M266 291v5M277 291v4M279 292v4M288 292v4M292 292v4M293 291v4M294 292v3M295 291v4M296 291v5M301 292v4M305 292v4M306 292v4M308 292v3M310 292v4M311 292v4M316 291v4M318 291v5M320 291v5M321 292v3M322 291v5M324 291v5M340 291v5M344 292v3M348 292v3M349 292v3M350 291v4M352 292v3M356 292v3M357 291v4M359 292v3M361 291v4M362 291v5M364 292v4M365 291v5M367 292v3M371 291v5M373 291v4M374 291v4M376 291v5M377 292v3M380 292v3M381 292v4M382 292v4M385 291v4M386 292v3M389 292v3M390 291v5M392 291v5M395 291v4M398 292v3M400 291v4M406 292v3M409 292v3M410 291v4M413 291v5M416 291v5M418 291v4M419 291v5M422 292v4M427 291v5M429 291v4M430 292v4M431 292v3M432 292v4M434 291v5M436 292v3M439 292v3M441 291v5M442 291v5M445 292v4M453 292v3M454 292v4M455 292v3M456 292v3M459 292v3M467 292v4M469 292v3M471 292v4M476 291v5M480 291v5M481 291v5M482 292v3M486 292v3M487 291v4M489 292v3M491 291v4M494 292v4M495 292v4M498 291v4M499 291v5M501 291v5M502 292v4M504 292v3M508 292v4M509 292v3M510 292v3M512 292v4M513 291v5M514 291v5M515 291v5M518 292v3M523 292v4M524 291v4M525 292v3M528 291v5M530 291v5M532 292v3M536 291v5M540 291v4M542 292v3M544 291v4M551 291v4M556 292v3M558 291v5M561 292v4M564 292v3M568 291v5M575 292v3M577 292v4M583 292v4M585 291v5M586 292v4M588 292v3M591 291v5M595 292v4M597 292v4M604 291v4M607 291v4M614 292v3M615 291v4M616 292v4M619 291v5M622 291v4M627 292v4M630 292v3M632 291v4M635 291v4M636 292v3M637 292v4M638 292v4M639 291v5M642 291v4M643 291v4M646 291v5M654 292v3M661 291v5M663 291v4M666 292v4M668 291v4M673 291v4M674 291v5M675 292v4M678 292v4M681 291v5M689 291v5M690 291v4M691 291v4M693 291v4M697 292v4M698 292v4M699 292v4M700 291v5M701 291v5M711 291v5M713 292v3M714 292v3M716 291v4M720 292v4M721 291v5M726 291v5M733 292v3M736 291v5M742 292v3M755 291v5M756 292v4M758 291v5M766 292v4M770 292v4M775 291v4M788 292v3M791 291v5M793 291v5M794 291v4M795 292v4M798 291v4M799 292v4M800 292v4M802 292v3M804 292v4M805 292v3M808 291v5M809 291v4M811 292v4M813 292v4M815 291v4M816 291v5M823 292v4M824 292v3M826 291v5M827 292v4M831 291v4M834 292v4M839 292v3M840 292v4M841 292v4M844 291v4M845 292v4M849 291v5M853 291v4M857 292v4M858 291v4M859 291v4M860 292v4M863 292v3M867 291v4M871 292v3M875 291v4M876 292v3M879 291v5M886 291v5M887 292v3M890 292v3M891 292v3M894 292v3M895 291v5M900 292v3M904 291v4M908 291v4M911 291v4M914 291v4M919 291v5M921 292v3M924 291v4M926 292v4M928 292v3M934 291v5M936 292v3M937 291v4M939 292v4M943 291v4M945 292v4M947 291v5M954 291v5M957 291v5M961 291v5M962 291v5M963 291v5M965 292v3M967 291v5M969 291v4M971 292v3M972 292v4M978 291v5M980 291v4M982 291v4M985 291v4M986 292v4M989 291v4M990 291v4M991 291v5M996 291v4M997 292v4M999 291v4M1001 291v5M1003 291v5M1004 292v3M1007 292v4M1012 291v5M1015 292v3M1016 292v3M1018 292v3M1020 291v5"/><path stroke="#00d600" d="M177 292v4M190 292v4M191 292v3M192 291v5M196 292v3M197 291v4M199 291v4M202 292v4M203 292v3M206 292v3M208 291v5M209 292v4M211 291v4M217 292v3M221 292v4M224 292v3M227 292v4M231 292v4M241 292v4M246 291v5M248 292v4M256 291v5M260 291v4M264 291v4M267 291v5M268 292v4M273 292v3M275 292v4M280 291v5M281 291v4M282 291v5M284 292v4M286 292v4M287 292v3M290 292v3M298 292v4M299 292v3M307 291v5M309 291v4M312 292v3M313 292v3M317 292v3M325 292v3M326 292v4M327 292v4M328 292v3M329 291v4M330 291v5M331 292v4M332 292v3M335 292v3M336 291v5M339 291v5M342 291v4M345 292v3M347 292v4M354 291v5M355 292v4M363 292v3M368 291v5M378 292v4M379 291v5M391 292v4M394 291v4M396 291v4M401 292v3M402 292v4M404 292v3M405 292v4M407 291v5M408 292v4M411 291v4M412 292v4M415 292v4M433 291v4M435 292v3M437 291v5M443 292v4M448 291v5M449 292v4M450 292v3M451 292v4M452 292v3M461 291v4M466 292v4M477 292v3M478 292v4M485 292v3M490 291v4M492 291v4M493 291v5M500 292v4M503 291v4M505 291v5M521 292v4M522 292v3M527 291v5M529 292v3M533 292v3M534 291v4M537 292v4M543 291v5M545 291v5M547 292v4M549 292v4M552 292v4M557 292v4M559 292v3M560 291v5M562 291v4M563 292v3M565 292v3M566 291v5M569 291v4M572 291v5M573 292v3M574 292v4M579 292v4M581 292v3M582 291v4M587 292v4M596 291v5M598 292v4M599 291v4M603 292v3M605 291v5M611 292v4M612 292v3M613 291v4M620 291v4M623 291v5M625 291v5M631 291v4M641 291v4M647 292v3M649 292v4M651 292v4M653 291v4M659 291v4M665 292v4M667 291v5M669 292v4M671 292v3M676 291v5M684 291v5M685 292v3M686 292v4M694 292v4M695 291v4M696 292v4M705 292v4M706 291v4M708 292v4M710 291v5M715 291v4M722 291v5M728 292v4M729 292v4M730 292v3M738 292v4M739 292v3M740 292v4M741 292v3M744 292v4M751 292v3M753 292v4M754 291v5M764 291v5M768 292v4M769 292v3M773 291v4M774 291v5M777 291v4M778 292v3M781 292v4M784 291v4M787 291v4M789 291v4M792 291v5M797 292v4M806 292v3M810 292v3M814 291v5M819 292v4M820 291v5M821 292v4M822 291v4M828 292v3M829 292v4M830 292v3M832 291v5M836 291v5M837 292v4M838 292v3M842 292v3M843 291v5M846 291v5M847 291v5M848 292v3M850 291v5M854 292v4M855 291v4M856 291v5M862 291v4M868 291v5M869 292v3M870 291v4M872 292v3M873 292v4M877 292v3M881 292v3M888 292v4M889 291v4M892 291v4M893 292v3M896 291v5M898 291v4M899 292v3M906 292v4M907 291v5M909 291v5M916 291v4M917 292v4M920 291v4M922 292v4M923 291v5M925 292v3M929 292v3M930 292v3M933 292v3M944 292v3M948 291v5M950 292v3M951 292v4M955 291v5M959 292v3M960 292v4M964 292v4M966 291v5M968 292v3M970 292v3M975 291v5M976 292v3M977 291v5M983 291v4M993 291v4M995 292v3M1000 291v5M1002 292v4M1006 292v3M1008 291v4M1010 292v3M1011 292v3M1017 292v3M1019 291v5"/>
<g shape-rendering="geometricPrecision" stroke-linejoin="round"><polyline fill="none" stroke="#005050" stroke-width="2.6" points="277.5,305.0 279.0,334.0 282.3,302.0 286.0,329.0 287.8,350.0 290.9,381.0 294.0,395.0"/><polyline fill="none" stroke="#28d0d0" stroke-width="1.4" points="277.5,305.0 279.0,334.0 282.3,302.0 286.0,329.0 287.8,350.0 290.9,381.0 294.0,395.0"/></g>
<path stroke="#380038" d="M21 254v16M24 251v19M25 254v16M26 254v16M30 254v19M35 253v20M37 254v16M40 252v19M45 250v20M49 254v16M54 254v16M57 254v18M59 254v16M61 254v16M62 254v18M63 254v19M69 254v16M71 252v18M74 254v16M75 252v18M76 254v16M90 254v16M98 251v20M101 253v17M109 251v19M110 251v20M115 254v16M120 254v17M125 254v16M126 252v20M127 254v16M129 254v16M131 254v16M132 254v17M135 253v19M138 251v19M140 254v19M144 254v16M145 254v16M150 254v16M151 250v20M152 254v16M154 254v16M157 254v16M159 254v16M167 253v19M171 254v17M173 254v16M174 250v20M176 250v22M179 254v16M182 254v16M187 252v18M191 252v18M196 251v19M197 254v16M199 254v16M200 254v17M207 251v21M209 251v19M211 254v18M212 253v17M215 254v16M219 254v16M222 254v16M227 253v18M229 254v17M230 254v19M233 254v16M237 254v16M238 254v16M242 252v20M244 252v18M247 251v19M255 254v16M262 254v16M265 254v16M268 251v21M272 251v19M273 253v17M275 254v16M276 252v18"/><path stroke="#2b002b" d="M22 254v18M23 254v18M27 254v16M39 251v20M52 251v22M56 253v17M58 254v16M66 254v16M67 253v17M68 253v17M70 250v20M73 254v19M77 254v16M79 254v19M81 254v16M83 254v19M85 254v16M86 254v16M88 251v21M91 254v16M99 254v19M104 250v20M105 254v16M106 254v16M111 251v19M113 251v19M114 254v16M116 254v18M118 254v16M121 254v16M122 254v16M123 254v17M137 254v16M142 251v19M143 254v19M153 254v16M156 251v19M160 253v17M162 254v16M163 254v16M164 254v16M165 251v19M166 251v19M170 251v19M172 254v18M178 254v16M180 252v19M181 250v22M183 254v16M184 252v18M185 254v17M186 254v18M190 251v19M193 251v19M194 254v16M204 254v16M213 253v17M216 254v16M218 250v20M223 254v16M224 254v17M225 254v16M226 254v16M231 254v16M232 254v16M235 252v18M236 251v19M240 250v23M243 254v17M246 253v17M248 254v16M249 254v16M250 254v16M251 254v16M254 254v16M258 254v16M259 254v16M261 254v17M264 252v19M266 250v20M269 253v17M270 251v20M271 252v20M274 252v18"/><path stroke="#1f001f" d="M28 254v16M29 254v16M31 254v16M32 254v16M33 254v16M34 252v18M36 254v16M38 254v16M41 254v18M42 254v18M43 254v18M44 251v19M46 250v21M47 254v16M48 254v16M50 254v16M51 254v16M53 254v16M55 254v18M60 251v19M64 254v18M65 254v16M72 254v16M78 252v21M80 254v16M82 254v16M84 254v16M87 254v18M89 254v16M92 254v16M93 254v16M94 254v16M95 251v19M96 253v19M97 254v16M100 254v18M102 254v16M103 250v20M107 254v16M108 254v17M112 254v16M117 254v16M119 254v16M124 251v19M128 252v20M130 254v16M133 254v16M134 254v18M136 254v16M139 251v19M141 254v16M146 252v18M147 251v22M148 253v17M149 254v16M155 254v16M158 254v16M161 252v20M168 254v18M169 254v16M175 254v16M177 253v19M188 254v16M189 254v16M192 254v16M195 254v19M198 250v21M201 254v16M202 254v16M203 254v16M205 254v16M206 254v16M208 251v19M210 252v18M214 253v17M217 251v19M220 254v16M221 254v17M228 254v16M234 254v18M239 254v18M241 251v19M245 253v17M252 251v19M253 254v16M256 253v17M257 252v20M260 254v17M263 254v16M267 252v18"/><path stroke="#5c005c" d="M22 254v16M24 254v16M31 255v15M43 255v14M44 255v14M48 254v16M49 255v13M56 255v14M58 254v15M64 255v14M65 255v15M66 255v14M68 255v13M69 254v14M75 255v14M79 254v15M81 255v14M82 255v14M89 255v13M91 255v14M94 254v15M97 255v14M104 254v15M111 255v14M112 254v15M117 254v16M121 255v13M127 255v14M128 255v14M129 255v15M132 254v15M134 255v14M137 254v15M138 255v13M139 255v13M140 254v16M142 255v13M145 254v15M147 254v16M149 255v13M152 254v15M158 255v15M161 255v15M163 254v15M168 255v15M170 254v16M172 255v14M175 255v13M181 255v14M187 254v15M194 254v15M196 254v15M199 255v14M202 254v14M204 255v13M207 254v16M212 255v13M213 254v14M214 254v15M217 254v15M219 254v16M223 255v14M224 255v15M229 255v14M234 255v15M235 255v13M237 255v13M244 254v16M249 254v16M250 254v16M251 254v15M253 255v14M270 255v14M275 255v15"/><path stroke="#470047" d="M21 255v14M23 254v15M26 254v15M27 254v14M30 254v16M34 254v15M36 254v14M37 254v16M38 255v14M42 254v14M47 254v15M50 254v15M51 255v15M53 254v14M55 255v15M60 254v14M67 254v15M70 255v15M71 254v15M72 254v15M73 254v14M74 254v16M83 255v15M88 255v13M90 254v16M93 254v15M95 254v14M98 255v14M100 254v16M107 255v13M110 255v14M113 255v14M114 255v14M119 254v16M122 254v16M125 254v15M126 255v14M130 255v13M136 255v14M144 255v15M146 254v16M148 255v13M151 254v16M154 254v15M165 254v15M166 254v16M169 255v13M171 254v15M173 254v15M174 255v14M176 255v14M178 255v15M180 254v15M182 255v14M183 254v15M185 255v15M188 255v14M190 255v14M192 255v13M193 255v14M195 254v14M198 255v14M200 254v16M208 255v15M209 254v15M210 254v14M211 254v15M215 254v15M216 254v14M218 255v14M226 255v14M230 254v15M232 255v14M240 254v15M242 254v15M243 255v14M245 254v15M246 255v13M252 254v15M254 254v16M255 254v16M259 255v14M264 255v13M266 255v15M268 255v14M269 254v16M272 254v15M273 255v13M274 254v15M276 255v13"/><path stroke="#330033" d="M25 254v15M28 254v14M29 255v15M32 254v16M33 255v14M35 254v15M39 255v14M40 255v15M41 254v15M45 254v15M46 255v14M52 255v14M54 254v15M57 254v15M59 254v16M61 254v15M62 255v14M63 255v14M76 255v14M77 255v15M78 254v15M80 254v15M84 255v14M85 254v15M86 255v13M87 254v14M92 255v14M96 255v14M99 254v14M101 254v15M102 254v16M103 254v14M105 255v14M106 255v14M108 254v14M109 254v16M115 255v14M116 254v14M118 255v13M120 255v14M123 254v14M124 254v14M131 255v15M133 254v15M135 254v15M141 254v15M143 254v15M150 255v14M153 254v16M155 255v14M156 254v15M157 254v14M159 254v15M160 255v13M162 255v14M164 254v15M167 255v14M177 255v14M179 255v14M184 254v15M186 254v14M189 254v14M191 254v14M197 254v15M201 255v14M203 255v14M205 255v13M206 255v14M220 255v15M221 255v15M222 254v16M225 255v15M227 254v14M228 255v13M231 254v14M233 255v13M236 254v15M238 255v14M239 254v15M241 254v15M247 254v15M248 254v15M256 254v14M257 254v14M258 254v14M260 254v15M261 254v15M262 254v15M263 255v14M265 254v16M267 254v16M271 254v14"/><path stroke="#a000a0" d="M21 257v9M22 257v9M23 257v9M26 256v11M27 257v9M28 257v10M29 256v11M37 256v10M40 257v10M41 257v9M42 256v10M45 256v10M47 257v9M49 257v9M55 257v10M56 256v10M58 257v9M61 257v10M64 256v10M65 257v10M70 256v11M71 256v10M73 257v10M76 256v11M77 256v11M81 257v9M84 256v10M85 256v10M86 256v11M95 257v10M97 256v11M101 256v10M102 257v10M106 256v11M108 257v9M110 257v10M115 256v10M116 257v9M117 257v10M126 257v9M129 256v10M134 256v10M135 257v10M136 256v10M138 256v10M140 256v10M150 257v9M154 256v11M156 257v9M158 257v10M161 256v11M165 256v11M168 256v10M172 256v11M175 257v10M176 256v10M177 256v11M179 256v11M181 256v10M182 256v10M186 256v10M187 257v9M188 257v9M190 256v10M194 256v10M196 256v11M197 257v10M198 257v9M199 257v10M200 257v9M202 257v10M207 257v9M209 257v9M215 256v10M216 257v10M222 256v11M229 256v10M233 256v11M235 257v9M236 256v11M239 257v9M242 257v9M246 256v11M248 257v10M249 256v10M255 257v10M259 257v10M260 256v10M262 256v11M267 256v11M268 257v9M274 256v11M275 257v9"/><path stroke="#8c008c" d="M25 256v10M33 257v10M34 256v10M38 257v9M39 256v10M44 256v10M46 256v11M48 257v9M50 257v9M51 257v9M53 257v10M59 256v11M63 257v9M66 257v10M69 257v10M75 256v11M82 257v10M83 256v10M88 257v9M90 257v9M92 256v11M94 256v11M96 256v11M98 257v9M103 257v10M104 257v10M107 256v11M109 257v10M111 257v10M120 257v9M121 256v11M122 257v9M123 256v11M125 257v10M127 257v10M133 257v9M137 257v9M142 256v10M143 256v11M145 256v11M146 256v11M147 257v9M148 256v10M153 256v10M155 256v11M160 257v10M162 256v10M166 257v10M171 257v9M180 257v9M184 257v10M191 257v10M192 257v9M195 256v11M201 256v11M203 257v9M204 257v9M211 256v10M213 257v9M217 256v11M219 257v9M223 257v9M225 257v9M226 257v10M230 257v9M231 256v10M234 257v9M241 257v9M244 257v9M245 256v11M253 257v10M254 257v10M256 257v9M257 257v10M261 257v9M264 257v10M269 257v9M270 257v9M271 257v9M272 257v10M273 256v11M276 256v10"/><path stroke="#790079" d="M24 257v10M30 257v9M31 256v11M32 256v11M35 257v9M36 257v9M43 256v10M52 257v9M54 256v11M57 256v10M60 257v9M62 256v10M67 257v10M68 256v10M72 257v9M74 257v9M78 257v9M79 256v11M80 257v10M87 256v10M89 256v10M91 257v9M93 257v10M99 257v10M100 256v11M105 256v10M112 257v9M113 256v10M114 257v10M118 257v10M119 256v10M124 257v10M128 256v11M130 257v9M131 256v10M132 257v10M139 256v10M141 257v10M144 256v11M149 257v10M151 257v10M152 257v9M157 257v10M159 257v9M163 256v10M164 256v11M167 256v10M169 257v9M170 256v10M173 256v11M174 256v10M178 256v10M183 257v10M185 256v11M189 256v10M193 257v9M205 256v10M206 257v9M208 257v10M210 256v10M212 257v9M214 256v11M218 257v10M220 256v10M221 256v10M224 256v11M227 256v11M228 257v9M232 257v10M237 256v10M238 256v11M240 256v10M243 257v10M247 256v11M250 256v11M251 256v11M252 256v11M258 257v9M263 256v11M265 256v10M266 257v9"/><path stroke="#ec00ec" d="M23 258v6M25 258v6M29 258v5M30 259v5M33 258v6M36 258v6M43 259v4M50 259v5M52 259v5M56 259v4M57 258v5M62 259v4M63 258v5M68 258v6M71 259v4M72 259v4M74 258v5M80 259v5M81 259v4M84 258v6M85 258v6M88 258v5M92 258v5M94 258v6M99 258v5M103 259v4M105 259v4M110 258v5M111 258v6M112 258v6M115 258v6M119 258v5M123 259v5M124 258v5M128 258v6M130 259v5M135 259v4M136 258v6M138 258v6M142 258v5M143 258v5M144 258v5M146 258v6M147 259v5M150 259v5M151 259v4M152 259v4M153 259v4M154 259v4M155 258v5M161 259v5M165 259v4M171 259v4M172 258v6M175 259v5M177 258v5M183 258v6M184 258v5M185 258v6M186 258v6M187 259v5M194 259v5M195 259v5M196 259v4M200 258v5M203 258v5M205 259v4M207 259v5M211 259v4M213 259v4M215 259v5M223 258v5M225 258v6M226 258v5M227 258v6M230 258v6M233 258v6M234 258v5M235 258v6M237 259v4M238 259v4M239 258v6M242 258v5M243 259v4M249 259v5M253 258v6M255 259v5M257 259v5M261 258v5M263 258v6M268 259v5M269 259v5M272 259v4M275 258v5"/><path stroke="#dd00dd" d="M24 259v5M26 258v6M28 258v6M34 259v4M42 259v4M54 259v4M55 259v5M58 258v6M61 259v5M65 258v6M66 259v5M67 259v4M69 258v6M70 258v6M73 259v4M78 259v5M79 259v4M83 258v5M86 258v6M87 258v5M89 259v5M91 259v5M93 258v6M95 259v4M96 258v5M97 258v6M100 258v5M102 259v4M104 259v5M106 259v4M108 258v6M117 259v5M120 259v5M121 259v4M122 258v6M125 258v5M131 259v4M132 259v5M139 258v6M141 259v5M145 259v5M149 258v5M156 258v6M158 259v5M160 259v5M166 258v6M170 258v6M173 258v6M178 258v6M181 259v4M182 258v5M188 258v5M189 258v6M190 258v5M191 259v5M198 258v6M201 258v5M206 259v4M209 259v5M210 259v4M214 258v6M216 258v6M218 258v5M219 259v4M220 258v6M221 259v5M224 259v5M228 259v5M232 259v4M240 258v5M245 259v4M246 258v6M248 258v6M251 259v4M252 259v4M256 258v6M259 258v6M260 258v5M266 258v6M270 259v5M273 258v5"/><path stroke="#cf00cf" d="M21 259v5M22 259v5M27 259v4M31 259v5M32 258v5M35 258v5M37 259v5M38 259v5M39 258v5M40 258v6M41 258v6M44 259v5M45 259v5M46 258v5M47 259v4M48 258v6M49 259v4M51 259v4M53 258v6M59 258v6M60 258v6M64 259v4M75 259v4M76 258v5M77 259v4M82 259v5M90 259v4M98 259v4M101 258v5M107 259v4M109 258v5M113 258v6M114 259v5M116 259v5M118 259v4M126 258v6M127 259v5M129 258v5M133 258v6M134 258v5M137 259v4M140 258v5M148 259v4M157 259v5M159 258v5M162 259v5M163 259v4M164 258v6M167 258v5M168 259v4M169 259v5M174 259v4M176 259v5M179 259v5M180 258v6M192 259v5M193 258v5M197 258v5M199 259v5M202 258v5M204 258v6M208 259v5M212 258v5M217 258v6M222 259v4M229 259v5M231 259v5M236 259v5M241 258v5M244 258v6M247 258v6M250 258v6M254 259v5M258 259v5M262 259v5M264 259v5M265 259v5M267 258v6M271 258v5M274 259v5M276 258v6"/><path stroke="#380038" d="M279 466v18M283 467v17M284 467v18M289 467v18M293 463v21M302 467v17M304 467v17M305 467v17M311 467v17M313 467v19M323 467v17M326 466v18M327 467v19M329 466v18M331 467v17M332 467v17M333 466v19M340 467v17M348 466v19M351 464v20M354 463v21M355 467v17M360 467v17M364 464v20M370 467v17M372 467v18M376 467v17M382 467v18M383 467v17M389 467v17M392 467v17M393 467v17M394 465v19M400 467v17M401 467v17M402 467v18M403 467v18M404 464v20M406 467v17M407 467v17M416 467v17M418 467v17M419 467v17M420 464v21M423 467v17M426 466v18M435 467v17M436 467v19M442 465v20M447 465v21M449 467v17M453 467v17M455 465v19M460 467v17M461 467v17M464 467v17M467 467v17M471 465v19M473 467v17M475 466v18M476 464v20M479 467v17M481 467v17M482 465v19M492 467v19M499 467v17M501 465v20M507 467v17M508 466v18M509 467v17M513 467v18M516 467v17M522 467v18M525 465v19M529 465v19M534 464v22M535 466v20M536 467v17M539 467v17M542 466v18M546 467v17M552 467v17M559 467v17M561 467v17M566 467v17M568 463v22M571 466v18M572 467v17M580 467v17M581 466v18M584 467v17M585 467v19M588 467v17M589 467v17M593 467v17M597 466v18M600 464v20M601 467v17M602 467v17M603 465v19M604 467v17M605 467v17M608 467v17M613 465v19M615 465v19M616 466v18M618 467v17M622 465v19M625 467v17M627 465v19M632 467v17M633 467v17M635 465v19M636 467v18M637 466v18M638 465v19M646 467v17M647 464v20M649 467v17M650 465v19M654 464v20M658 463v23M662 463v21M664 465v19M670 465v21M675 467v18M676 467v17M679 465v19M682 465v21M683 464v22M688 467v17M692 467v19M694 467v18M695 466v18M696 466v20M701 466v20M702 467v17M706 466v18M708 467v19M709 467v17M711 466v18M714 464v20M718 467v18M726 467v17M727 467v17M728 467v17M730 465v20M731 467v17M732 465v19M734 467v18M735 467v17M743 467v17M745 467v17M746 463v21M747 467v17M756 466v18M760 463v21M763 467v19M765 467v17M766 467v18M768 467v17M769 467v19M772 467v17M774 467v17M775 463v23M780 466v18M782 467v17M784 465v19M785 465v19M789 467v18M791 464v20M793 467v17M794 466v18M795 467v17M796 467v17M798 467v17M799 467v17M808 467v19M814 467v18M816 464v20M819 467v17M820 467v17M821 467v17M832 467v18M835 467v19M836 467v19M838 465v19M839 464v20M840 467v17M841 467v18M844 467v17M846 467v18M847 467v18M849 467v17M850 467v17M852 467v17M855 464v22M856 467v17M860 467v17M871 467v17M872 467v17M878 467v18M879 467v19M884 467v17M885 467v17M886 467v17M888 465v19M890 467v17M892 467v17M894 467v17M899 464v20M900 467v17M906 467v17M911 466v18M914 467v17M930 467v17M931 467v19M934 467v19M935 466v18M943 467v18M948 467v17M951 466v18M954 467v17M960 467v17M961 467v17M970 467v17M971 467v17M972 467v17M975 467v17M976 467v17M979 467v17M982 467v17M984 467v17M988 467v17M990 467v17M1003 467v17M1017 467v17M1019 467v19"/><path stroke="#2b002b" d="M278 465v19M281 467v17M282 467v18M290 467v17M291 467v17M292 467v17M297 467v17M298 467v17M299 464v20M300 467v17M301 467v17M308 466v18M310 467v19M316 467v17M321 466v18M322 466v18M325 463v21M328 464v20M334 467v19M335 465v19M338 467v17M341 467v17M343 465v21M344 465v21M346 467v17M349 466v18M350 467v17M352 467v17M356 464v20M357 467v17M361 467v17M362 467v17M366 467v19M367 463v21M371 467v17M374 464v20M377 467v19M378 467v19M379 466v18M380 467v17M381 467v17M384 466v20M385 467v17M396 467v17M397 467v17M405 467v17M408 463v21M409 467v19M411 465v19M414 466v18M415 467v18M417 467v19M421 467v18M427 466v18M429 465v19M430 467v17M431 465v21M432 467v18M433 464v22M434 467v17M437 465v19M438 467v17M445 463v22M446 467v17M448 466v18M450 467v17M459 467v17M470 467v17M472 467v17M474 467v17M478 466v18M484 467v19M486 467v17M487 467v17M488 467v17M489 467v17M490 467v17M491 467v17M493 465v19M500 467v17M503 464v20M504 467v18M506 466v18M510 467v18M511 464v20M512 465v19M514 467v17M517 467v17M518 467v18M521 467v17M524 464v21M530 466v18M531 467v18M532 463v21M533 467v17M537 464v20M540 466v18M541 466v20M543 466v20M545 467v17M547 467v17M548 467v17M549 465v19M550 467v17M551 464v20M555 467v17M557 464v20M560 467v17M562 467v17M563 467v19M565 467v19M567 467v17M569 467v17M570 467v17M575 467v17M576 466v18M579 467v17M582 467v18M583 467v18M590 464v20M592 467v17M595 467v17M596 467v17M607 464v20M610 467v17M612 463v22M619 467v18M620 465v19M630 467v18M631 467v17M634 467v17M640 467v17M642 465v19M651 467v17M655 465v21M656 467v17M657 466v18M659 467v17M660 466v18M661 466v18M672 467v17M673 467v18M680 467v17M686 466v19M687 467v19M690 467v17M691 463v21M698 467v17M699 467v17M700 467v17M704 465v20M705 466v18M715 467v17M719 467v18M720 467v19M721 467v17M725 466v19M733 467v17M738 465v19M744 467v17M749 467v17M751 467v17M752 465v20M753 467v17M757 467v17M759 467v17M761 467v17M762 464v20M770 467v18M771 467v17M778 467v17M781 467v17M786 467v17M787 467v18M788 467v19M792 467v18M797 466v18M804 467v17M807 465v20M810 466v18M811 464v20M813 467v18M815 463v21M818 467v17M826 467v17M827 466v18M829 467v17M831 467v17M833 464v21M837 467v18M842 465v19M843 467v17M848 467v17M853 467v19M858 466v18M859 467v17M865 467v17M866 467v19M867 467v17M869 466v18M874 467v19M875 467v19M876 465v21M877 464v20M880 466v19M882 467v17M889 463v21M897 463v23M898 467v17M901 463v23M903 467v17M907 467v17M909 466v18M910 467v18M912 467v17M913 464v20M917 467v17M919 467v17M924 466v18M925 463v22M926 467v18M927 463v21M933 464v20M936 467v19M937 467v17M938 464v20M941 467v17M942 466v18M945 467v17M946 464v20M947 467v17M952 467v17M957 464v22M959 467v17M962 467v18M965 467v17M966 467v17M967 467v18M977 467v17M978 465v19M980 464v21M981 466v18M986 466v18M989 467v17M991 467v17M992 463v21M994 467v17M995 464v22M996 467v17M998 463v21M1000 467v17M1001 467v19M1005 467v17M1007 466v18M1008 467v17M1009 464v20M1010 464v22M1011 467v17M1012 467v17M1015 467v17M1016 467v19M1018 464v22"/><path stroke="#1f001f" d="M277 467v17M280 467v17M285 463v21M286 467v17M287 466v18M288 467v17M294 464v20M295 466v18M296 467v18M303 463v21M306 467v18M307 467v17M309 467v17M312 465v20M314 467v19M315 463v22M317 467v17M318 467v17M319 467v17M320 467v17M324 467v17M330 467v19M336 467v19M337 467v17M339 467v17M342 466v18M345 465v19M347 467v17M353 464v20M358 467v17M359 467v17M363 467v17M365 466v18M368 467v18M369 467v17M373 467v18M375 465v19M386 467v17M387 467v18M388 467v17M390 467v18M391 467v17M395 464v20M398 463v21M399 467v19M410 466v18M412 467v19M413 467v17M422 467v17M424 467v18M425 463v21M428 465v21M439 465v19M440 466v20M441 467v17M443 463v21M444 464v20M451 466v18M452 467v18M454 467v19M456 467v17M457 463v21M458 467v17M462 467v18M463 467v17M465 467v17M466 467v17M468 465v19M469 467v17M477 467v17M480 467v17M483 465v19M485 466v18M494 463v21M495 467v17M496 465v19M497 467v18M498 466v20M502 467v17M505 466v18M515 464v20M519 467v17M520 467v17M523 467v18M526 467v17M527 467v17M528 467v17M538 467v17M544 467v17M553 467v17M554 467v17M556 467v17M558 464v20M564 467v19M573 467v17M574 464v20M577 467v17M578 467v17M586 467v17M587 467v17M591 467v17M594 467v17M598 465v21M599 467v17M606 467v17M609 467v17M611 467v17M614 467v19M617 467v17M621 466v18M623 467v17M624 466v18M626 467v18M628 467v17M629 467v17M639 467v17M641 467v17M643 464v20M644 467v17M645 464v20M648 467v17M652 465v19M653 463v21M663 467v17M665 467v17M666 466v20M667 465v19M668 464v21M669 467v17M671 467v17M674 467v17M677 467v19M678 464v20M681 467v17M684 467v17M685 466v20M689 467v18M693 467v18M697 464v20M703 467v17M707 465v19M710 467v19M712 467v17M713 467v17M716 467v17M717 465v20M722 467v18M723 467v17M724 464v20M729 466v18M736 467v17M737 465v20M739 467v17M740 467v17M741 466v18M742 463v21M748 467v17M750 467v17M754 467v17M755 467v17M758 467v18M764 467v18M767 467v17M773 467v17M776 466v18M777 463v23M779 467v17M783 464v20M790 466v18M800 467v17M801 465v19M802 467v17M803 464v20M805 465v19M806 467v17M809 467v19M812 463v21M817 467v17M822 464v20M823 465v20M824 467v18M825 464v20M828 467v17M830 463v22M834 467v17M845 466v18M851 467v18M854 467v17M857 466v18M861 467v18M862 466v18M863 466v18M864 467v18M868 467v18M870 463v21M873 467v18M881 467v17M883 467v17M887 467v17M891 467v19M893 467v17M895 467v17M896 467v17M902 467v17M904 465v19M905 467v17M908 467v18M915 467v18M916 467v17M918 465v19M920 465v21M921 466v18M922 466v18M923 465v19M928 467v17M929 464v21M932 467v17M939 467v17M940 467v17M944 467v18M949 467v17M950 463v21M953 467v17M955 464v20M956 463v21M958 467v17M963 467v17M964 467v17M968 465v19M969 467v17M973 467v18M974 467v17M983 467v17M985 464v22M987 466v18M993 467v17M997 466v18M999 465v19M1002 467v19M1004 464v20M1006 467v17M1013 467v17M1014 467v17M1020 467v17"/><path stroke="#5c005c" d="M278 467v16M279 467v17M284 468v14M285 468v15M286 467v17M290 468v16M295 468v15M296 467v15M298 467v16M299 468v16M300 468v14M303 467v16M305 468v16M306 468v15M307 468v14M311 467v15M314 467v17M318 468v16M328 467v16M329 468v15M333 467v15M334 467v15M342 468v14M344 468v15M346 468v15M355 467v16M357 467v16M358 468v15M366 467v16M371 467v16M373 468v15M374 468v15M375 467v16M378 468v16M380 468v15M382 467v16M385 467v16M386 468v14M391 467v16M400 468v15M402 467v15M408 467v15M418 467v16M422 467v16M424 468v16M425 467v16M427 467v17M429 468v16M431 468v14M432 467v16M435 467v15M439 468v16M440 468v14M446 468v16M450 468v16M454 467v16M455 467v15M456 467v15M457 468v16M458 467v17M459 467v15M461 468v14M462 468v16M469 467v16M471 468v16M477 468v15M479 468v15M480 467v17M481 467v17M482 467v16M486 467v16M487 467v17M490 467v16M493 468v16M499 468v14M500 468v16M505 468v15M509 468v15M510 467v17M514 468v15M517 468v14M518 467v16M521 467v15M524 467v15M526 467v15M532 468v15M545 467v17M547 468v14M552 468v16M558 467v16M565 468v15M566 468v15M567 467v15M569 468v14M571 468v15M572 468v14M575 467v17M578 467v16M584 468v15M585 468v15M588 468v14M589 467v16M592 467v17M595 467v16M600 468v15M601 468v16M603 468v16M604 467v16M605 467v16M614 467v17M617 467v16M618 468v15M620 467v16M623 467v17M625 467v16M633 467v15M634 467v16M636 468v14M639 468v14M641 467v16M644 468v16M646 467v15M649 468v14M652 467v16M653 468v15M656 468v15M661 468v15M663 468v14M669 468v16M671 467v16M672 468v15M681 467v16M682 468v14M683 468v14M685 468v15M686 467v15M687 467v15M689 468v15M691 468v14M692 468v14M694 467v16M699 468v15M708 467v16M715 467v16M717 467v16M718 468v15M720 467v16M721 468v16M725 467v17M726 467v16M728 468v14M731 468v16M738 468v15M739 467v16M741 468v15M745 468v14M747 467v17M749 468v16M750 468v16M754 467v17M756 467v15M758 467v16M759 468v15M763 468v16M769 467v17M771 468v15M774 467v17M776 468v15M782 468v15M783 467v16M789 468v16M791 467v17M793 467v16M797 468v15M799 468v16M800 468v15M801 468v15M802 468v15M805 467v17M807 468v15M808 468v16M813 467v15M814 467v16M818 467v16M825 468v14M829 467v16M834 467v15M837 467v15M842 468v15M843 468v15M846 468v16M849 467v16M850 467v16M851 467v15M852 467v16M855 468v15M856 468v15M858 468v16M861 468v16M863 467v16M870 467v16M879 468v15M883 467v15M884 468v14M885 468v14M886 467v15M889 468v14M893 468v15M902 468v14M906 467v16M909 467v15M912 468v16M914 468v16M923 467v16M926 467v15M933 468v14M934 468v15M935 468v16M937 468v15M939 468v15M949 468v14M950 468v15M951 468v16M952 467v16M953 467v16M958 467v15M961 467v15M966 468v15M972 468v15M975 468v15M981 468v15M983 467v17M985 467v15M989 468v14M992 468v16M993 467v16M995 468v16M999 467v16M1003 467v15M1010 467v16M1015 468v15M1016 468v16M1017 468v15M1018 468v14M1020 468v15"/><path stroke="#470047" d="M277 468v14M287 468v15M294 467v15M301 468v16M302 467v17M304 467v16M308 468v16M312 467v16M316 467v15M322 467v17M324 468v14M325 467v15M326 468v15M332 468v15M336 467v17M337 468v14M338 468v16M343 467v16M345 467v16M347 468v15M349 468v15M350 467v16M352 468v16M353 467v16M354 467v17M360 467v16M361 468v16M362 468v14M363 468v15M367 467v16M372 468v14M381 468v15M383 468v15M389 468v15M393 468v16M394 467v16M395 467v15M407 468v15M409 468v15M410 467v15M411 467v17M412 467v15M416 467v16M420 468v14M421 467v17M423 468v14M426 468v15M430 467v17M433 467v16M434 467v16M436 467v16M437 468v15M438 467v15M441 467v16M442 467v15M444 468v15M449 468v16M451 467v17M452 467v17M470 467v15M473 467v15M474 468v15M483 467v15M484 468v14M485 468v14M488 467v15M489 468v16M498 468v14M503 468v15M508 468v15M513 467v17M515 467v16M516 467v17M519 468v14M525 467v17M528 467v17M530 467v17M533 467v16M534 467v17M535 468v15M536 467v16M538 467v15M540 468v15M542 467v17M544 467v15M546 467v15M549 468v14M551 467v16M553 468v16M557 468v14M560 468v15M561 467v15M562 468v15M570 468v16M579 468v15M580 467v17M582 468v15M587 467v16M591 468v14M593 468v15M597 468v15M599 468v14M602 468v15M608 468v15M610 468v16M612 467v17M616 467v17M619 468v14M621 467v16M624 468v14M626 467v17M629 467v16M630 467v16M632 468v15M640 467v17M642 467v16M645 468v15M648 467v15M654 467v15M657 468v15M660 467v15M664 468v16M665 467v16M667 467v15M673 467v16M674 468v15M676 468v16M677 467v15M679 468v14M688 467v15M690 468v15M693 468v16M695 467v17M697 467v17M698 468v16M700 468v14M703 468v16M704 468v16M706 467v15M712 467v16M713 467v15M714 467v15M724 468v15M729 467v16M730 468v16M733 468v16M737 468v16M743 467v15M746 467v16M748 467v15M755 467v17M761 468v15M762 468v15M765 468v15M768 467v15M773 467v15M779 467v16M781 468v15M784 467v17M785 467v16M794 468v14M795 468v16M796 467v16M798 467v17M809 468v15M811 468v15M817 467v17M819 467v16M820 467v16M824 467v16M826 467v16M827 468v15M828 468v15M830 467v16M832 468v15M833 467v16M835 468v16M838 468v15M839 468v15M847 468v15M853 467v15M862 467v15M864 467v16M865 468v14M867 468v16M868 468v15M872 467v16M873 468v15M874 467v16M876 467v16M877 467v16M888 468v14M890 468v14M891 467v16M892 468v14M894 468v14M895 467v16M896 467v17M898 468v15M901 468v15M903 468v15M905 467v16M907 468v15M911 468v14M913 467v16M916 467v17M917 468v14M922 468v14M924 467v16M927 467v16M928 467v17M930 467v17M931 467v16M932 468v15M938 468v15M940 467v16M942 468v16M944 468v15M947 468v15M948 468v14M954 468v15M955 467v15M960 467v15M963 467v16M967 468v15M969 468v14M970 467v16M971 468v14M973 468v14M974 467v16M976 467v16M977 468v15M979 467v15M980 467v17M984 468v14M988 468v14M990 468v15M991 468v16M994 467v16M998 468v14M1001 468v16M1002 467v15M1005 467v17M1006 468v16M1007 467v16M1009 468v16M1013 468v14M1019 467v16"/><path stroke="#330033" d="M280 468v16M281 467v15M282 468v16M283 467v16M288 467v16M289 467v16M291 467v16M292 468v15M293 467v16M297 468v16M309 468v15M310 467v15M313 467v16M315 468v15M317 467v17M319 468v16M320 468v14M321 467v17M323 468v16M327 467v17M330 467v17M331 467v15M335 467v17M339 468v14M340 468v15M341 468v15M348 468v14M351 467v15M356 467v15M359 468v15M364 467v16M365 467v16M368 468v15M369 467v15M370 468v15M376 468v14M377 468v16M379 467v15M384 467v16M387 468v15M388 468v16M390 467v16M392 467v16M396 467v17M397 468v16M398 467v15M399 467v16M401 468v16M403 467v16M404 467v16M405 468v15M406 467v16M413 467v16M414 468v15M415 468v14M417 468v15M419 468v15M428 467v15M443 468v15M445 467v16M447 468v16M448 467v16M453 468v16M460 468v16M463 467v15M464 467v15M465 467v15M466 468v14M467 468v15M468 468v15M472 467v16M475 467v16M476 467v16M478 468v15M491 467v17M492 467v15M494 468v16M495 467v17M496 467v16M497 467v17M501 468v16M502 467v16M504 467v17M506 467v16M507 467v16M511 467v16M512 467v15M520 468v14M522 468v15M523 467v15M527 468v14M529 467v16M531 467v17M537 468v16M539 468v15M541 468v16M543 467v16M548 467v16M550 468v14M554 467v15M555 468v14M556 468v15M559 467v15M563 468v15M564 467v16M568 467v15M573 467v16M574 468v14M576 467v16M577 467v16M581 468v14M583 468v15M586 468v14M590 468v16M594 467v16M596 468v16M598 467v16M606 468v15M607 468v15M609 467v17M611 467v17M613 467v15M615 467v15M622 467v17M627 468v14M628 467v16M631 468v16M635 468v16M637 467v15M638 468v16M643 468v16M647 467v15M650 467v17M651 468v15M655 467v17M658 467v16M659 468v14M662 468v15M666 468v15M668 467v16M670 467v16M675 468v16M678 468v14M680 468v16M684 468v14M696 467v16M701 468v16M702 467v15M705 467v15M707 468v14M709 468v14M710 468v15M711 467v17M716 468v14M719 467v15M722 468v15M723 467v16M727 468v15M732 468v16M734 467v17M735 467v15M736 467v17M740 467v16M742 467v17M744 467v16M751 468v15M752 467v16M753 467v16M757 467v16M760 467v16M764 467v15M766 467v15M767 468v14M770 468v14M772 468v15M775 467v15M777 468v15M778 468v15M780 468v15M786 468v15M787 467v16M788 467v16M790 467v15M792 468v15M803 467v17M804 468v16M806 467v16M810 468v16M812 467v16M815 468v15M816 467v17M821 467v17M822 468v15M823 467v15M831 468v15M836 468v15M840 467v17M841 468v15M844 467v17M845 468v15M848 468v15M854 467v17M857 468v15M859 468v15M860 467v15M866 468v14M869 468v15M871 468v16M875 467v17M878 467v16M880 468v15M881 467v16M882 468v16M887 467v17M897 467v16M899 467v15M900 467v17M904 467v17M908 467v15M910 467v16M915 467v17M918 467v16M919 468v16M920 468v14M921 468v16M925 468v15M929 467v15M936 467v15M941 468v15M943 467v17M945 468v14M946 468v15M956 467v16M957 467v17M959 468v16M962 468v15M964 467v15M965 468v16M968 467v16M978 467v16M982 467v16M986 468v16M987 467v17M996 467v16M997 468v16M1000 467v16M1004 468v14M1008 467v16M1011 467v17M1012 467v16M1014 468v16"/><path stroke="#a000a0" d="M283 471v10M285 471v10M287 470v10M294 470v11M295 472v8M297 471v9M299 471v9M310 471v9M314 471v10M320 471v9M321 471v9M323 471v9M326 472v9M330 470v10M331 471v9M335 471v9M336 470v10M337 471v10M338 472v9M340 471v10M341 471v10M345 471v9M348 470v11M359 472v9M364 470v11M367 471v10M369 471v10M372 471v10M373 472v8M374 472v8M377 471v10M378 470v10M379 472v8M381 472v9M382 471v9M384 470v10M391 470v11M393 472v8M394 471v9M395 471v10M396 471v9M400 471v9M403 471v10M404 472v9M410 471v10M413 471v9M415 471v9M417 471v9M419 472v8M421 471v10M422 472v8M423 471v9M424 471v10M425 471v9M429 471v10M430 471v10M431 471v10M432 471v9M444 472v8M445 471v9M447 471v10M451 471v9M453 470v10M454 472v9M455 471v10M456 471v10M459 471v10M462 472v8M466 470v10M468 471v9M469 471v9M473 471v9M483 471v9M486 471v9M488 471v9M492 471v9M493 472v8M494 471v9M495 471v9M496 472v9M500 471v10M505 472v8M510 470v10M515 472v9M516 471v9M517 471v10M522 471v9M523 470v10M524 470v10M536 471v9M537 470v10M538 471v10M539 471v9M545 471v9M546 470v10M554 471v10M556 471v10M560 470v10M561 471v9M562 471v9M565 471v9M566 472v8M580 471v9M586 472v8M591 471v9M593 471v10M594 471v10M600 472v8M601 471v9M605 471v10M606 471v9M608 471v10M610 471v9M611 471v10M613 472v8M614 470v10M615 471v10M621 471v10M622 471v10M623 471v10M624 471v10M626 471v10M627 470v11M628 470v10M629 471v9M630 471v10M634 472v8M639 471v10M645 472v9M647 471v10M648 471v10M652 472v9M654 471v9M655 471v10M660 471v10M661 471v10M663 470v11M665 471v9M666 471v9M667 471v10M670 471v9M674 471v9M676 470v10M687 471v10M688 471v9M689 470v10M691 472v9M692 471v10M699 472v9M703 471v10M705 472v9M713 471v9M718 470v10M721 471v9M723 471v9M726 471v9M728 471v9M729 472v9M733 471v10M735 470v11M739 471v9M741 470v10M747 471v10M752 472v8M753 471v9M757 471v10M759 471v9M764 470v11M768 470v11M769 472v9M773 470v11M781 470v10M782 470v11M784 471v9M785 471v9M786 471v10M787 471v9M790 472v8M791 472v8M794 471v9M797 472v8M798 472v9M802 472v9M811 471v10M812 471v9M817 471v9M818 471v10M822 471v9M823 471v10M824 472v8M826 471v9M832 471v9M834 471v10M837 471v9M838 471v10M845 471v10M848 470v11M849 471v10M851 470v11M853 472v9M858 471v10M859 470v10M864 471v10M865 471v9M866 471v9M867 471v9M870 471v10M871 471v9M872 471v9M875 471v10M876 471v10M879 471v10M890 472v8M892 471v9M895 472v9M901 471v10M904 470v11M905 471v9M908 470v11M917 471v9M918 471v9M919 471v9M923 471v10M925 471v9M928 470v10M931 470v10M933 471v10M935 470v11M936 471v10M941 472v9M944 472v8M961 472v9M963 471v9M965 471v10M968 471v10M975 471v10M976 471v9M979 471v10M983 472v8M988 472v9M990 470v11M992 471v9M993 471v10M999 470v11M1000 471v9M1001 471v9M1002 472v8M1004 471v9M1009 472v8M1011 471v9M1016 472v9M1020 471v9"/><path stroke="#8c008c" d="M279 471v10M282 471v10M288 471v9M293 472v8M302 471v9M303 470v10M305 471v10M307 471v10M308 472v8M309 471v10M312 471v10M315 471v10M316 471v10M317 471v10M322 472v8M324 471v10M325 471v9M329 470v10M332 472v9M339 471v9M342 470v10M346 471v9M349 472v9M350 471v10M353 471v10M357 471v9M360 471v10M361 471v10M363 471v9M365 471v9M368 471v9M370 471v9M375 472v8M376 471v9M383 471v9M390 471v10M398 471v9M407 471v10M411 471v10M414 471v9M416 470v10M418 471v9M426 470v10M428 471v9M433 470v11M434 471v9M436 471v9M438 472v9M439 471v9M440 471v10M441 471v10M443 470v11M446 471v9M457 472v8M460 471v10M461 471v10M463 471v9M464 471v10M467 471v9M471 471v9M472 471v9M474 471v9M478 471v10M481 471v10M482 471v9M484 471v9M485 471v10M491 471v10M498 471v10M499 472v8M506 471v9M507 471v10M508 471v9M509 471v9M511 471v9M512 470v10M518 471v9M525 470v10M527 471v9M529 471v10M530 471v9M533 471v10M534 471v9M535 470v11M542 471v10M543 471v10M548 470v10M550 472v9M553 471v10M555 472v9M557 470v10M563 471v9M575 471v10M578 471v10M581 471v9M582 472v8M583 472v9M588 472v9M590 471v10M592 472v9M595 471v10M596 471v9M597 472v9M598 471v9M604 470v10M616 471v10M617 472v8M619 471v9M631 472v8M633 470v10M638 472v8M641 471v10M642 471v10M649 472v9M651 470v11M653 470v11M656 471v9M657 471v9M679 471v9M680 471v9M685 471v10M686 471v10M693 470v11M694 471v10M696 472v9M697 472v9M698 471v9M700 471v10M701 471v10M702 471v9M708 470v10M709 471v10M712 471v10M716 471v10M719 471v10M724 472v9M725 471v9M727 471v10M730 471v10M731 471v9M738 472v9M745 471v10M748 471v9M749 471v9M751 472v9M760 471v9M763 470v11M767 471v9M770 472v8M771 471v10M772 470v10M774 471v10M776 471v10M777 471v10M783 470v10M793 472v9M795 472v8M800 471v10M806 471v10M810 470v10M813 471v9M819 470v10M820 471v9M821 470v10M825 472v9M831 470v10M835 472v8M839 470v11M841 471v10M843 471v9M854 471v9M857 471v10M863 472v8M868 471v9M869 471v9M874 470v10M885 471v9M886 471v10M891 470v10M897 471v10M898 472v9M900 470v10M906 471v10M907 470v10M910 471v9M913 471v9M914 471v10M920 470v10M921 472v9M922 471v10M924 470v10M926 471v9M929 471v9M930 471v9M932 471v10M934 470v11M942 471v9M943 471v10M945 471v9M946 471v9M947 472v9M949 471v10M950 471v9M951 472v9M956 471v10M957 471v9M958 471v10M959 470v11M964 471v10M966 472v8M970 471v9M971 471v9M974 471v9M978 471v10M980 471v9M981 471v9M982 471v10M984 471v9M986 471v10M989 471v10M991 471v9M994 470v11M995 471v10M997 471v10M998 471v9M1003 472v9M1005 471v9M1006 471v10M1012 471v9M1013 471v9M1019 470v11"/><path stroke="#790079" d="M277 471v9M278 471v9M280 470v11M281 471v10M284 471v10M286 472v8M289 471v10M290 472v9M291 471v10M292 471v9M296 471v9M298 470v10M300 472v8M301 472v9M304 472v9M306 471v10M311 472v8M313 471v10M318 471v10M319 472v8M327 471v9M328 471v10M333 472v8M334 471v9M343 471v9M344 471v10M347 470v10M351 471v10M352 472v8M354 470v10M355 471v10M356 472v8M358 471v10M362 471v9M366 471v9M371 471v10M380 471v10M385 471v9M386 471v10M387 471v9M388 472v9M389 471v10M392 472v8M397 472v9M399 470v10M401 471v9M402 472v8M405 471v10M406 471v10M408 471v9M409 470v10M412 470v11M420 471v9M427 470v11M435 472v9M437 472v9M442 471v10M448 471v9M449 471v9M450 471v9M452 471v10M458 471v10M465 472v9M470 470v10M475 471v10M476 470v11M477 471v9M479 471v10M480 471v9M487 472v8M489 471v9M490 471v9M497 471v9M501 472v9M502 471v10M503 472v9M504 471v10M513 472v8M514 471v9M519 472v8M520 471v10M521 471v10M526 471v9M528 471v10M531 471v9M532 472v8M540 472v8M541 470v11M544 472v8M547 471v10M549 471v10M551 470v10M552 471v9M558 471v10M559 471v10M564 471v10M567 472v8M568 471v10M569 471v9M570 470v10M571 471v10M572 471v9M573 471v10M574 471v10M576 471v9M577 471v10M579 470v11M584 471v9M585 470v11M587 472v9M589 471v9M599 470v10M602 470v11M603 471v9M607 472v8M609 470v10M612 472v9M618 470v11M620 471v10M625 471v10M632 471v10M635 470v11M636 471v9M637 472v9M640 471v10M643 472v9M644 471v9M646 471v9M650 472v8M658 471v10M659 471v9M662 471v9M664 470v11M668 470v11M669 470v10M671 471v9M672 471v10M673 471v10M675 471v9M677 471v10M678 471v10M681 470v11M682 470v11M683 472v9M684 471v10M690 471v9M695 471v9M704 472v9M706 471v10M707 471v10M710 471v9M711 470v11M714 471v10M715 471v10M717 471v9M720 471v10M722 470v10M732 471v9M734 471v9M736 471v10M737 471v10M740 471v10M742 472v9M743 471v10M744 471v9M746 471v9M750 471v9M754 471v9M755 471v10M756 471v10M758 471v9M761 471v10M762 471v10M765 471v10M766 471v9M775 471v10M778 470v10M779 472v8M780 471v9M788 471v9M789 471v9M792 472v9M796 471v10M799 471v10M801 471v10M803 470v11M804 470v11M805 472v8M807 471v9M808 471v10M809 471v10M814 471v10M815 470v10M816 471v9M827 471v9M828 471v10M829 472v8M830 471v10M833 470v11M836 471v9M840 472v9M842 472v9M844 470v10M846 471v9M847 470v11M850 472v9M852 471v9M855 471v9M856 471v9M860 471v10M861 471v9M862 471v10M873 472v9M877 471v9M878 471v10M880 471v9M881 470v11M882 471v10M883 471v9M884 471v10M887 471v10M888 471v9M889 471v9M893 472v8M894 472v8M896 472v9M899 471v9M902 471v10M903 471v10M909 471v10M911 472v9M912 472v8M915 470v11M916 471v9M927 471v9M937 470v11M938 471v10M939 470v11M940 470v11M948 471v10M952 471v9M953 471v9M954 472v9M955 471v9M960 472v9M962 471v9M967 472v8M969 471v9M972 471v9M973 472v9M977 471v10M985 471v9M987 471v9M996 471v9M1007 471v10M1008 471v9M1010 472v8M1014 471v9M1015 471v9M1017 471v10M1018 472v8"/><path stroke="#ec00ec" d="M284 472v4M285 472v4M287 472v4M292 472v4M293 472v4M294 472v4M299 472v4M303 472v4M304 472v4M306 472v4M309 472v4M310 472v4M312 472v4M314 472v4M317 472v4M320 472v4M322 472v4M324 472v4M327 472v4M328 472v4M329 472v4M331 472v4M332 472v4M337 472v4M338 472v4M339 472v4M344 472v4M351 472v4M352 472v4M353 472v4M358 472v4M360 472v4M365 472v4M368 472v4M370 472v4M374 472v4M377 472v4M379 472v4M380 472v4M383 472v4M387 472v4M391 472v4M393 472v4M396 472v4M398 472v4M399 472v4M406 472v4M407 472v4M410 472v4M416 472v4M421 472v4M425 472v4M426 472v4M427 472v4M428 472v4M429 472v4M434 472v4M436 472v4M440 472v4M444 472v4M445 472v4M447 472v4M448 472v4M450 472v4M451 472v4M453 472v4M455 472v4M456 472v4M458 472v4M459 472v4M464 472v4M467 472v4M474 472v4M475 472v4M476 472v4M478 472v4M479 472v4M481 472v4M489 472v4M493 472v4M495 472v4M497 472v4M501 472v4M502 472v4M506 472v4M512 472v4M514 472v4M518 472v4M519 472v4M522 472v4M523 472v4M534 472v4M545 472v4M546 472v4M547 472v4M549 472v4M551 472v4M559 472v4M563 472v4M572 472v4M575 472v4M576 472v4M578 472v4M579 472v4M583 472v4M585 472v4M586 472v4M587 472v4M590 472v4M593 472v4M596 472v4M599 472v4M603 472v4M604 472v4M608 472v4M614 472v4M615 472v4M621 472v4M624 472v4M629 472v4M630 472v4M631 472v4M632 472v4M634 472v4M636 472v4M640 472v4M641 472v4M646 472v4M647 472v4M648 472v4M652 472v4M655 472v4M658 472v4M661 472v4M664 472v4M665 472v4M668 472v4M671 472v4M672 472v4M677 472v4M679 472v4M682 472v4M684 472v4M686 472v4M690 472v4M692 472v4M695 472v4M696 472v4M702 472v4M705 472v4M706 472v4M708 472v4M710 472v4M711 472v4M716 472v4M718 472v4M723 472v4M726 472v4M731 472v4M733 472v4M735 472v4M737 472v4M741 472v4M743 472v4M744 472v4M750 472v4M754 472v4M756 472v4M757 472v4M762 472v4M763 472v4M764 472v4M767 472v4M768 472v4M770 472v4M774 472v4M775 472v4M779 472v4M783 472v4M784 472v4M785 472v4M789 472v4M792 472v4M793 472v4M794 472v4M796 472v4M802 472v4M803 472v4M807 472v4M808 472v4M809 472v4M812 472v4M816 472v4M817 472v4M818 472v4M822 472v4M830 472v4M831 472v4M834 472v4M835 472v4M848 472v4M850 472v4M851 472v4M855 472v4M859 472v4M866 472v4M867 472v4M877 472v4M881 472v4M883 472v4M886 472v4M890 472v4M891 472v4M893 472v4M898 472v4M899 472v4M902 472v4M907 472v4M908 472v4M909 472v4M916 472v4M917 472v4M919 472v4M926 472v4M930 472v4M931 472v4M932 472v4M935 472v4M937 472v4M938 472v4M940 472v4M941 472v4M945 472v4M948 472v4M949 472v4M951 472v4M954 472v4M957 472v4M960 472v4M964 472v4M969 472v4M972 472v4M973 472v4M974 472v4M975 472v4M977 472v4M978 472v4M988 472v4M1000 472v4M1002 472v4M1003 472v4M1004 472v4M1005 472v4M1006 472v4M1014 472v4M1015 472v4M1018 472v4M1019 472v4M1020 472v4"/><path stroke="#dd00dd" d="M277 472v4M280 472v4M281 472v4M283 472v4M286 472v4M288 472v4M295 472v4M296 472v4M300 472v4M301 472v4M305 472v4M307 472v4M308 472v4M311 472v4M313 472v4M316 472v4M321 472v4M323 472v4M325 472v4M330 472v4M336 472v4M343 472v4M345 472v4M346 472v4M347 472v4M357 472v4M361 472v4M362 472v4M363 472v4M366 472v4M372 472v4M375 472v4M376 472v4M381 472v4M382 472v4M385 472v4M386 472v4M388 472v4M390 472v4M395 472v4M397 472v4M400 472v4M402 472v4M404 472v4M408 472v4M411 472v4M412 472v4M413 472v4M414 472v4M417 472v4M418 472v4M419 472v4M422 472v4M424 472v4M430 472v4M432 472v4M433 472v4M442 472v4M443 472v4M446 472v4M449 472v4M452 472v4M463 472v4M465 472v4M466 472v4M469 472v4M470 472v4M471 472v4M473 472v4M482 472v4M483 472v4M486 472v4M487 472v4M491 472v4M494 472v4M496 472v4M498 472v4M500 472v4M504 472v4M507 472v4M516 472v4M517 472v4M520 472v4M521 472v4M524 472v4M526 472v4M527 472v4M529 472v4M530 472v4M532 472v4M536 472v4M537 472v4M538 472v4M539 472v4M540 472v4M541 472v4M542 472v4M548 472v4M550 472v4M552 472v4M553 472v4M554 472v4M555 472v4M560 472v4M561 472v4M562 472v4M564 472v4M569 472v4M570 472v4M571 472v4M581 472v4M584 472v4M588 472v4M592 472v4M594 472v4M597 472v4M598 472v4M600 472v4M601 472v4M602 472v4M607 472v4M609 472v4M611 472v4M612 472v4M613 472v4M617 472v4M618 472v4M620 472v4M622 472v4M628 472v4M633 472v4M637 472v4M638 472v4M643 472v4M653 472v4M654 472v4M656 472v4M660 472v4M667 472v4M669 472v4M673 472v4M675 472v4M676 472v4M685 472v4M691 472v4M693 472v4M699 472v4M704 472v4M709 472v4M712 472v4M714 472v4M715 472v4M717 472v4M719 472v4M722 472v4M728 472v4M729 472v4M730 472v4M738 472v4M739 472v4M740 472v4M745 472v4M747 472v4M749 472v4M752 472v4M753 472v4M755 472v4M759 472v4M760 472v4M773 472v4M776 472v4M777 472v4M781 472v4M787 472v4M804 472v4M811 472v4M823 472v4M825 472v4M827 472v4M833 472v4M838 472v4M839 472v4M840 472v4M842 472v4M843 472v4M844 472v4M845 472v4M846 472v4M847 472v4M852 472v4M853 472v4M857 472v4M860 472v4M861 472v4M862 472v4M865 472v4M869 472v4M870 472v4M872 472v4M873 472v4M875 472v4M876 472v4M879 472v4M884 472v4M885 472v4M888 472v4M889 472v4M895 472v4M897 472v4M904 472v4M905 472v4M910 472v4M911 472v4M913 472v4M914 472v4M920 472v4M923 472v4M924 472v4M928 472v4M929 472v4M934 472v4M939 472v4M944 472v4M947 472v4M952 472v4M953 472v4M955 472v4M956 472v4M958 472v4M962 472v4M963 472v4M965 472v4M966 472v4M967 472v4M976 472v4M981 472v4M984 472v4M985 472v4M989 472v4M990 472v4M993 472v4M994 472v4M997 472v4M999 472v4M1007 472v4M1013 472v4M1017 472v4"/><path stroke="#cf00cf" d="M278 472v4M279 472v4M282 472v4M289 472v4M290 472v4M291 472v4M297 472v4M298 472v4M302 472v4M315 472v4M318 472v4M319 472v4M326 472v4M333 472v4M334 472v4M335 472v4M340 472v4M341 472v4M342 472v4M348 472v4M349 472v4M350 472v4M354 472v4M355 472v4M356 472v4M359 472v4M364 472v4M367 472v4M369 472v4M371 472v4M373 472v4M378 472v4M384 472v4M389 472v4M392 472v4M394 472v4M401 472v4M403 472v4M405 472v4M409 472v4M415 472v4M420 472v4M423 472v4M431 472v4M435 472v4M437 472v4M438 472v4M439 472v4M441 472v4M454 472v4M457 472v4M460 472v4M461 472v4M462 472v4M468 472v4M472 472v4M477 472v4M480 472v4M484 472v4M485 472v4M488 472v4M490 472v4M492 472v4M499 472v4M503 472v4M505 472v4M508 472v4M509 472v4M510 472v4M511 472v4M513 472v4M515 472v4M525 472v4M528 472v4M531 472v4M533 472v4M535 472v4M543 472v4M544 472v4M556 472v4M557 472v4M558 472v4M565 472v4M566 472v4M567 472v4M568 472v4M573 472v4M574 472v4M577 472v4M580 472v4M582 472v4M589 472v4M591 472v4M595 472v4M605 472v4M606 472v4M610 472v4M616 472v4M619 472v4M623 472v4M625 472v4M626 472v4M627 472v4M635 472v4M639 472v4M642 472v4M644 472v4M645 472v4M649 472v4M650 472v4M651 472v4M657 472v4M659 472v4M662 472v4M663 472v4M666 472v4M670 472v4M674 472v4M678 472v4M680 472v4M681 472v4M683 472v4M687 472v4M688 472v4M689 472v4M694 472v4M697 472v4M698 472v4M700 472v4M701 472v4M703 472v4M707 472v4M713 472v4M720 472v4M721 472v4M724 472v4M725 472v4M727 472v4M732 472v4M734 472v4M736 472v4M742 472v4M746 472v4M748 472v4M751 472v4M758 472v4M761 472v4M765 472v4M766 472v4M769 472v4M771 472v4M772 472v4M778 472v4M780 472v4M782 472v4M786 472v4M788 472v4M790 472v4M791 472v4M795 472v4M797 472v4M798 472v4M799 472v4M800 472v4M801 472v4M805 472v4M806 472v4M810 472v4M813 472v4M814 472v4M815 472v4M819 472v4M820 472v4M821 472v4M824 472v4M826 472v4M828 472v4M829 472v4M832 472v4M836 472v4M837 472v4M841 472v4M849 472v4M854 472v4M856 472v4M858 472v4M863 472v4M864 472v4M868 472v4M871 472v4M874 472v4M878 472v4M880 472v4M882 472v4M887 472v4M892 472v4M894 472v4M896 472v4M900 472v4M901 472v4M903 472v4M906 472v4M912 472v4M915 472v4M918 472v4M921 472v4M922 472v4M925 472v4M927 472v4M933 472v4M936 472v4M942 472v4M943 472v4M946 472v4M950 472v4M959 472v4M961 472v4M968 472v4M970 472v4M971 472v4M979 472v4M980 472v4M982 472v4M983 472v4M986 472v4M987 472v4M991 472v4M992 472v4M995 472v4M996 472v4M998 472v4M1001 472v4M1008 472v4M1009 472v4M1010 472v4M1011 472v4M1012 472v4M1016 472v4"/>
<path stroke="#383800" d="M23 424v15M24 424v14M25 423v15M30 425v13M31 425v13M38 425v15M42 425v13M44 423v15M50 424v15M52 425v13M58 425v15M60 422v16M61 425v15M66 425v15M68 425v14M76 425v14M94 425v15M96 425v15M100 422v19M101 425v13M102 425v13M103 422v16M105 424v14M109 425v17M110 423v18M115 425v15M116 425v15M118 425v13M122 425v16M128 425v15M129 424v14M134 425v15M138 425v14M143 425v16M144 424v16M145 424v15M146 426v13M151 426v13M152 426v14M158 423v16M160 426v13M162 426v13M163 426v13M168 423v16M172 426v13M175 424v15M176 426v13M177 426v13M182 430v13M184 429v16M185 432v16M186 431v16M190 436v14M192 437v14M194 439v14M196 440v15M201 443v17M203 445v13M205 444v18M207 445v16M210 449v13M211 449v14M215 451v14M219 454v13M220 454v15M224 456v13M230 458v16M233 458v16M235 462v13M238 464v14M239 464v14M241 465v14M242 462v18M245 465v15M250 469v13M255 468v19M260 473v14M261 473v13M264 474v14M267 475v15M271 477v13M272 474v16M273 476v18M276 478v14"/><path stroke="#2b2b00" d="M21 424v17M29 425v16M32 425v13M33 425v13M34 423v15M40 425v13M41 423v15M43 424v14M48 425v13M49 425v16M51 424v14M53 425v13M56 425v15M64 425v13M69 425v13M75 425v15M77 423v15M78 425v13M80 425v13M82 425v15M86 425v13M92 425v16M97 423v16M98 425v16M104 425v15M106 425v13M107 425v13M112 425v17M117 423v15M121 425v13M125 422v16M126 425v13M130 423v19M131 425v16M132 425v13M133 422v16M136 425v13M137 425v15M141 425v13M148 424v16M149 426v14M150 424v15M153 426v14M154 426v14M155 426v14M156 424v16M159 426v14M164 423v16M166 426v13M167 426v15M179 424v17M180 428v17M181 429v14M183 430v14M189 435v14M191 437v13M198 438v17M199 442v14M204 445v17M206 445v17M208 448v13M209 445v17M213 447v17M221 455v13M222 455v17M223 456v16M227 454v17M236 462v14M237 460v17M248 468v13M249 468v14M251 469v13M252 470v14M253 467v16M256 471v15M259 472v14M262 473v15M266 475v13M269 476v13M274 478v13"/><path stroke="#1f1f00" d="M22 425v13M26 422v16M27 425v13M28 425v13M35 425v13M36 422v17M37 425v13M39 425v13M45 425v13M46 422v17M47 425v16M54 425v14M55 425v13M57 423v15M59 425v13M62 422v16M63 425v13M65 425v14M67 424v14M70 425v13M71 425v13M72 422v16M73 423v18M74 423v15M79 425v13M81 425v14M83 424v14M84 425v13M85 425v14M87 425v13M88 425v13M89 425v13M90 425v15M91 425v15M93 425v13M95 424v14M99 422v18M108 422v16M111 425v13M113 423v18M114 424v18M119 425v13M120 425v14M123 425v16M124 425v13M127 424v14M135 425v16M139 425v13M140 423v19M142 425v13M147 422v17M157 426v13M161 426v13M165 423v16M169 426v14M170 425v14M171 426v13M173 426v16M174 426v13M178 426v16M187 434v13M188 433v15M193 438v16M195 440v13M197 439v17M200 443v13M202 441v17M212 450v13M214 451v13M216 449v17M217 453v14M218 453v16M225 456v16M226 456v18M228 458v17M229 457v15M231 460v15M232 457v18M234 460v15M240 465v13M243 466v13M244 466v15M246 467v14M247 464v17M254 470v14M257 472v13M258 471v14M263 473v16M265 475v13M268 476v13M270 476v14M275 478v13"/><path stroke="#5c5c00" d="M22 425v12M25 425v12M34 426v11M37 426v12M39 426v12M40 425v12M41 426v12M44 426v12M47 425v13M48 426v12M49 425v13M51 426v12M57 426v11M58 426v11M66 425v12M72 425v12M78 426v11M79 426v11M80 426v11M82 426v12M84 426v11M88 425v13M92 426v12M98 426v12M99 426v12M100 427v10M111 426v11M113 426v11M120 425v13M122 426v11M123 425v12M126 426v11M127 425v14M130 426v12M148 426v13M158 426v12M160 427v12M161 427v11M164 425v13M168 425v14M169 426v13M174 426v13M175 427v12M186 434v12M187 434v12M189 436v12M191 438v12M198 442v13M201 445v12M202 444v13M203 444v14M207 447v13M209 448v14M213 450v14M214 451v12M220 454v14M221 455v13M224 456v14M229 460v12M237 465v10M240 465v13M242 466v12M245 468v11M246 467v12M254 471v13M255 472v12M257 472v11M263 475v12M266 475v12M274 479v11"/><path stroke="#474700" d="M24 425v13M26 425v12M28 426v12M29 425v13M33 426v12M35 425v13M36 425v13M38 426v11M42 425v12M50 425v13M59 426v12M60 426v12M61 425v13M65 426v11M67 426v13M69 425v12M73 426v11M74 426v11M86 426v12M89 426v12M93 425v14M101 425v13M104 425v12M105 425v14M106 425v13M112 425v12M119 425v12M121 425v13M124 426v11M125 425v13M131 425v12M132 425v13M133 426v12M139 425v13M140 426v11M141 426v12M142 426v12M144 426v12M146 426v12M151 425v13M152 426v12M162 426v13M163 426v13M166 426v13M171 427v12M173 427v11M177 427v12M178 426v14M181 429v13M183 430v14M184 433v12M188 436v12M190 437v12M194 439v13M197 441v13M199 442v13M204 446v12M208 448v12M210 449v12M211 450v12M212 451v12M217 453v13M219 453v14M223 457v12M225 457v13M226 458v12M228 459v11M231 461v11M232 461v13M233 461v13M234 462v13M235 463v12M236 463v12M238 465v11M241 465v13M247 468v12M248 469v13M249 469v12M250 470v11M251 470v11M253 471v11M258 473v12M261 473v14M265 474v14M267 476v12M268 476v12M270 477v13M276 478v13"/><path stroke="#333300" d="M21 426v11M23 425v13M27 426v12M30 426v11M31 426v12M32 426v12M43 426v11M45 425v13M46 426v11M52 426v11M53 426v11M54 426v11M55 426v12M56 425v12M62 425v12M63 426v12M64 426v11M68 425v13M70 425v13M71 426v11M75 425v13M76 425v12M77 426v11M81 425v13M83 426v12M85 427v10M87 425v12M90 426v11M91 426v12M94 425v12M95 426v12M96 425v13M97 425v12M102 425v13M103 427v10M107 426v12M108 425v13M109 426v12M110 426v12M114 425v13M115 427v10M116 427v11M117 426v12M118 425v12M128 425v12M129 426v12M134 426v13M135 426v12M136 426v12M137 425v13M138 426v11M143 426v12M145 426v13M147 426v11M149 425v13M150 426v11M153 426v13M154 426v12M155 426v12M156 425v12M157 426v13M159 426v13M165 427v12M167 427v11M170 426v13M172 427v11M176 427v11M179 427v13M180 428v13M182 430v14M185 432v14M192 437v13M193 439v13M195 441v12M196 441v13M200 444v12M205 446v13M206 448v11M215 453v12M216 452v13M218 454v11M222 456v12M227 457v13M230 459v12M239 464v14M243 467v12M244 466v13M252 470v12M256 472v12M259 473v12M260 474v11M262 474v13M264 474v13M269 476v12M271 477v13M272 478v11M273 478v13M275 479v12"/><path stroke="#b8b800" d="M22 427v8M25 428v7M26 428v7M27 428v8M28 428v8M30 427v8M41 427v9M43 428v7M45 428v8M49 427v9M61 427v8M66 427v8M68 428v7M76 428v7M77 428v8M78 427v9M80 428v7M81 427v8M82 428v8M85 428v7M87 428v7M89 427v9M90 428v7M91 428v7M95 427v8M96 428v7M101 428v8M105 428v7M107 428v8M111 428v8M112 428v7M115 427v9M118 428v7M121 428v8M123 428v8M124 428v8M128 428v8M130 428v8M131 428v8M138 428v8M141 428v9M142 429v7M145 428v9M148 428v8M155 428v8M159 428v9M160 428v8M161 429v7M164 427v10M165 429v8M167 428v9M169 428v8M170 428v8M172 428v8M174 428v9M175 429v8M178 429v9M179 430v9M180 430v9M181 431v10M185 435v8M187 436v9M188 437v9M189 438v9M190 439v9M191 440v8M193 441v9M198 444v9M201 446v9M202 447v9M210 452v8M212 452v8M219 456v8M221 457v8M222 458v7M232 463v8M236 466v8M240 468v7M249 471v9M252 472v9M253 473v7M255 473v8M257 474v8M264 476v9M270 479v8M271 479v8M276 481v8"/><path stroke="#a1a100" d="M21 427v8M24 427v8M31 428v7M32 428v7M35 428v8M36 427v8M37 427v8M44 428v8M48 428v8M51 427v9M54 427v9M55 427v8M56 428v7M57 428v7M58 428v8M63 427v8M65 427v8M67 427v9M69 428v8M72 428v7M73 427v9M75 427v9M79 428v8M84 428v8M86 427v9M93 428v8M97 427v9M99 428v7M102 427v8M103 428v8M106 428v8M116 428v8M119 427v9M120 428v9M122 428v7M129 428v7M133 428v8M140 428v8M151 428v8M152 428v8M153 429v7M154 428v8M158 428v9M162 428v8M163 429v7M168 429v8M171 428v9M176 428v8M182 433v8M183 432v9M195 442v8M197 443v9M203 447v9M204 447v10M209 450v9M213 453v8M215 455v8M216 455v9M217 456v7M220 456v9M223 458v9M224 459v8M225 459v8M226 459v9M227 460v9M228 460v10M234 464v9M237 466v9M243 468v9M244 469v8M246 469v9M247 470v8M250 471v8M251 471v10M254 472v9M256 474v8M260 476v7M262 476v8M263 476v9M266 478v7M267 477v9M269 479v7M275 481v8"/><path stroke="#8b8b00" d="M23 428v7M29 428v8M33 428v8M34 428v7M38 427v8M39 427v8M40 428v8M42 427v9M46 427v9M47 427v8M50 427v8M52 428v8M53 428v8M59 427v9M60 428v7M62 427v9M64 428v7M70 427v9M71 427v9M74 428v8M83 428v7M88 427v8M92 428v8M94 428v7M98 427v9M100 427v8M104 427v8M108 428v8M109 427v9M110 428v8M113 428v7M114 428v8M117 428v8M125 428v7M126 427v8M127 428v7M132 427v9M134 429v7M135 427v9M136 427v9M137 429v7M139 428v8M143 428v8M144 428v8M146 428v7M147 428v8M149 429v7M150 429v7M156 428v9M157 428v8M166 428v8M173 429v8M177 428v9M184 434v9M186 435v8M192 439v10M194 442v7M196 443v9M199 445v9M200 445v8M205 449v8M206 449v8M207 449v9M208 450v9M211 452v8M214 454v7M218 456v8M229 460v9M230 462v8M231 462v9M233 463v8M235 464v9M238 466v9M239 467v8M241 468v8M242 468v9M245 470v8M248 470v9M258 474v9M259 475v7M261 476v7M265 478v7M268 478v9M272 479v8M273 479v10M274 480v8"/><path stroke="#f4f400" d="M23 430v3M25 429v5M31 429v4M39 430v3M40 429v4M41 430v3M43 430v3M49 430v3M50 430v3M52 429v5M53 430v3M55 430v3M57 430v4M62 430v3M64 429v5M66 429v5M67 429v4M70 430v4M72 430v3M74 430v4M76 430v3M77 430v3M82 430v4M83 429v5M85 430v3M87 430v4M88 430v4M91 430v4M92 430v4M94 430v4M96 430v3M97 430v4M102 429v5M103 430v3M107 429v4M108 430v4M109 430v4M110 430v4M112 430v4M117 430v4M118 430v4M120 430v4M121 430v4M123 430v4M124 430v4M134 430v4M135 430v4M143 430v4M144 430v4M145 430v4M147 430v4M154 430v4M155 430v4M160 430v4M161 430v4M163 430v4M165 430v5M167 430v4M171 430v4M179 431v6M180 432v5M191 441v5M193 442v6M194 443v5M195 444v5M196 445v5M199 446v5M201 448v5M208 452v4M210 453v5M211 454v4M215 456v4M217 457v5M220 458v5M221 459v4M222 459v5M226 462v4M241 470v4M243 471v4M244 471v4M248 472v5M254 475v4M255 475v5M257 476v4M260 477v5M263 479v4M265 479v5M268 480v4M270 481v4M272 482v4"/><path stroke="#e5e500" d="M22 430v3M27 430v3M28 429v4M29 429v4M30 430v3M32 429v4M33 429v4M34 429v4M36 430v4M38 430v4M45 430v4M47 430v3M51 430v3M60 429v4M63 430v4M65 430v4M68 430v4M69 430v4M73 430v4M75 430v3M79 429v5M81 429v5M89 430v4M93 429v5M100 430v3M101 430v4M104 430v4M105 430v4M106 430v4M111 430v4M116 430v4M122 430v4M125 430v4M127 430v4M131 430v4M136 430v4M138 430v4M141 430v4M142 430v4M146 430v4M150 430v4M159 430v4M164 430v4M172 431v3M173 430v5M175 431v4M183 435v5M186 437v5M187 438v5M188 439v5M189 440v4M200 447v5M202 448v5M203 449v5M204 450v4M207 451v5M209 453v4M212 455v4M213 455v5M216 457v4M219 458v4M223 460v5M224 461v4M225 461v4M227 462v4M228 463v4M230 464v4M234 466v4M235 466v5M236 467v5M237 467v5M238 468v5M239 469v4M245 471v5M250 473v4M252 474v5M259 477v4M261 477v5M266 479v5M269 480v5M273 482v4M274 482v4M275 483v4"/><path stroke="#d6d600" d="M21 430v3M24 429v4M26 430v3M35 429v4M37 429v5M42 429v5M44 429v4M46 430v4M48 429v5M54 430v3M56 430v3M58 430v4M59 430v3M61 429v5M71 429v4M78 429v4M80 429v4M84 430v4M86 430v4M90 429v5M95 430v4M98 430v4M99 430v4M113 429v5M114 430v4M115 430v4M119 430v4M126 430v4M128 430v4M129 430v4M130 430v4M132 430v4M133 430v4M137 430v4M139 430v4M140 430v4M148 430v4M149 430v4M151 430v4M152 430v4M153 430v4M156 430v4M157 430v4M158 430v4M162 430v4M166 430v4M168 430v4M169 430v5M170 431v3M174 431v3M176 430v5M177 431v4M178 431v5M181 434v4M182 434v5M184 436v5M185 436v5M190 440v5M192 442v5M197 445v5M198 446v5M205 450v5M206 451v4M214 456v4M218 457v5M229 463v5M231 464v5M232 465v4M233 465v5M240 469v5M242 470v4M246 472v4M247 472v4M249 473v4M251 474v4M253 475v4M256 476v4M258 476v5M262 478v4M264 479v4M267 480v4M271 481v4M276 483v4"/><path stroke="#383800" d="M277 545v13M279 545v12M283 542v17M291 545v12M292 544v13M294 545v12M296 545v12M303 545v14M314 545v12M319 544v13M321 545v12M323 542v17M324 544v13M328 545v13M329 543v14M337 541v16M338 545v12M342 545v12M345 542v16M346 545v12M348 545v12M356 545v12M364 543v14M367 545v13M369 544v14M370 545v13M372 545v12M373 543v16M382 545v15M386 545v12M387 544v16M395 542v15M397 544v13M404 545v12M410 544v14M412 545v15M413 545v12M415 542v19M417 545v12M432 544v13M434 545v12M437 545v12M439 544v16M442 542v15M443 541v16M447 545v12M450 543v14M454 544v13M457 544v16M459 542v15M467 545v12M469 542v18M470 545v12M471 545v14M473 545v13M474 545v16M485 541v16M487 545v16M488 545v12M492 541v19M497 545v12M511 542v19M514 543v14M518 545v12M520 545v12M521 545v14M522 543v15M524 541v16M533 545v12M543 545v15M549 545v12M551 543v16M552 545v12M555 541v16M559 545v12M561 545v14M563 545v13M564 545v12M569 544v15M570 543v14M574 545v12M576 545v12M577 545v12M578 545v12M582 543v14M583 545v12M585 545v14M587 541v16M588 545v12M593 545v12M598 543v17M600 545v14M606 545v14M607 545v13M612 545v12M614 545v12M615 545v13M616 545v12M620 545v12M621 542v18M622 541v16M624 545v12M625 545v12M632 545v12M642 542v15M645 545v12M651 543v14M657 545v12M659 545v12M660 545v16M666 541v16M671 545v12M673 545v15M674 543v14M677 545v13M686 545v12M689 542v18M690 545v12M695 545v14M697 545v14M698 545v12M699 545v12M707 543v14M709 545v12M710 545v12M711 545v12M712 545v12M713 545v12M714 545v12M715 545v13M722 545v13M724 543v14M725 541v16M727 545v15M728 545v16M730 545v12M732 541v17M733 542v16M734 542v15M737 544v13M738 542v15M743 545v12M745 545v15M749 542v15M757 542v16M762 545v12M763 543v17M764 545v12M765 542v15M766 545v15M770 545v15M771 545v12M774 545v12M776 545v12M777 544v13M778 545v12M781 545v12M782 543v15M783 545v12M787 542v17M788 541v17M791 545v12M794 545v12M796 545v12M797 545v12M800 543v17M806 545v13M810 545v15M813 545v12M817 545v12M820 545v12M829 544v13M831 545v16M836 545v12M837 541v16M838 545v12M840 542v15M841 545v12M847 545v12M850 545v15M851 543v14M852 545v12M854 541v16M855 542v15M857 545v12M866 545v12M875 545v13M880 545v13M881 544v17M883 545v14M886 545v12M893 545v15M897 544v17M900 545v13M903 544v13M909 545v12M910 545v12M911 545v14M916 543v17M918 545v12M920 541v16M927 545v14M928 545v15M931 545v12M932 545v16M935 545v15M938 545v15M940 542v15M946 545v12M951 545v12M952 543v14M957 543v14M959 542v19M961 545v12M969 541v16M974 541v16M977 545v12M978 545v12M979 545v12M1002 542v15M1005 545v12M1011 542v15M1012 545v12M1016 545v12M1020 545v12"/><path stroke="#2b2b00" d="M278 543v14M280 545v15M281 543v14M285 541v16M286 545v16M287 543v14M289 545v12M290 544v14M293 542v15M295 543v15M299 545v12M300 542v17M301 545v15M304 545v12M305 542v18M306 545v12M309 545v12M312 544v13M313 543v14M316 542v16M318 545v12M320 543v14M322 545v12M325 541v16M326 543v14M330 543v14M333 545v12M334 542v17M335 545v12M336 545v14M341 543v15M344 543v16M347 543v14M349 542v19M350 542v15M351 545v12M352 542v16M353 545v12M355 541v16M360 543v14M363 545v12M365 543v15M366 545v12M368 545v12M374 545v12M376 545v12M377 544v16M380 545v15M381 545v16M383 545v12M385 545v12M389 545v12M391 545v14M392 545v12M393 545v12M396 545v12M398 543v14M399 543v14M402 544v13M405 545v12M407 544v13M409 544v16M416 545v12M420 545v12M421 545v12M422 545v12M423 544v14M424 545v12M425 545v15M428 545v13M429 545v12M430 545v12M431 542v19M433 545v12M435 544v16M436 542v16M438 545v13M444 545v12M445 544v14M446 545v12M456 545v13M458 545v13M462 543v14M464 545v12M465 545v12M475 542v15M476 542v15M478 545v12M479 545v12M480 545v12M481 544v13M491 542v15M493 545v12M494 543v17M500 541v16M502 545v12M503 544v13M504 543v14M507 545v12M508 544v17M509 545v16M512 545v12M513 545v15M515 545v12M516 544v13M517 544v13M519 541v16M523 545v13M526 543v14M528 545v12M530 545v12M531 545v14M535 545v13M537 544v13M539 543v14M546 545v12M554 542v15M558 545v12M560 545v12M562 545v13M567 545v12M573 543v15M581 545v13M586 545v12M591 544v13M592 542v16M594 544v13M599 545v12M602 545v16M603 545v12M604 545v12M608 545v12M610 545v12M611 545v14M613 545v12M617 545v15M626 545v12M628 545v13M631 545v14M635 545v14M638 545v13M643 543v18M644 545v12M646 542v15M647 545v12M648 545v12M650 542v15M654 545v12M667 543v14M672 545v12M675 543v15M678 544v13M681 545v16M682 545v12M683 545v12M684 545v12M685 545v12M691 543v15M692 545v12M693 545v12M696 545v12M701 545v12M704 543v14M706 545v12M716 542v16M719 545v12M720 543v14M721 545v12M723 543v14M726 545v12M735 545v12M736 543v14M740 545v12M741 545v12M742 545v12M747 545v12M751 545v13M752 542v19M755 542v15M756 545v16M758 544v13M759 545v12M768 543v14M769 541v16M772 543v14M773 545v12M775 541v19M785 543v16M786 544v17M789 542v15M790 545v12M793 545v12M799 545v12M802 543v15M803 541v16M805 545v12M807 545v12M808 543v15M809 545v12M811 543v14M812 545v12M815 545v13M819 545v12M822 545v12M824 545v15M825 545v12M826 544v14M827 544v17M828 545v12M830 545v12M833 545v12M835 542v15M839 545v12M844 545v12M845 545v14M853 545v14M856 545v12M863 543v15M865 545v12M870 545v13M871 545v13M872 545v12M873 545v12M874 545v12M878 545v12M879 544v14M882 543v14M884 545v14M891 545v12M894 545v12M898 545v12M902 541v16M905 545v15M907 545v12M913 542v15M914 545v16M915 545v12M917 545v15M923 542v15M925 545v12M930 542v15M933 545v12M939 545v12M941 545v12M949 541v16M956 545v12M962 545v12M963 545v12M964 542v17M967 544v13M971 545v12M972 545v15M973 542v15M976 544v14M980 541v18M982 545v12M983 545v12M984 543v18M990 545v12M991 545v12M992 541v19M993 545v12M994 544v13M998 545v15M1003 542v15M1004 545v15M1007 542v15M1008 543v14M1009 544v15M1014 545v12M1015 544v13M1017 545v12M1018 545v12M1019 541v16"/><path stroke="#1f1f00" d="M282 541v16M284 542v15M288 545v16M297 544v14M298 545v12M302 544v13M307 545v15M308 542v15M310 545v12M311 545v12M315 545v15M317 545v12M327 544v15M331 545v16M332 545v13M339 543v16M340 545v12M343 545v14M354 545v12M357 545v12M358 541v16M359 545v13M361 542v17M362 545v12M371 545v12M375 545v12M378 545v12M379 545v14M384 544v13M388 544v13M390 545v13M394 545v13M400 543v15M401 545v12M403 545v12M406 545v12M408 542v15M411 544v13M414 545v12M418 545v12M419 544v16M426 545v14M427 545v12M440 542v15M441 545v16M448 545v12M449 545v15M451 545v12M452 545v15M453 545v12M455 543v15M460 545v12M461 544v15M463 545v12M466 545v12M468 544v13M472 544v16M477 545v14M482 545v12M483 542v17M484 545v12M486 545v14M489 545v13M490 545v16M495 545v14M496 545v12M498 545v12M499 545v12M501 545v13M505 545v12M506 542v15M510 542v15M525 545v12M527 544v13M529 541v16M532 544v13M534 545v12M536 544v16M538 541v17M540 543v17M541 545v15M542 543v18M544 545v12M545 543v15M547 543v14M548 545v13M550 541v16M553 545v12M556 545v12M557 543v14M565 541v17M566 545v12M568 545v12M571 541v19M572 545v12M575 545v15M579 543v14M580 545v12M584 545v15M589 545v13M590 545v12M595 542v15M596 542v15M597 542v18M601 542v16M605 545v12M609 545v12M618 545v12M619 545v12M623 542v15M627 545v12M629 545v12M630 545v12M633 542v19M634 542v15M636 545v12M637 545v12M639 545v12M640 545v12M641 545v12M649 545v14M652 545v12M653 545v12M655 545v12M656 545v15M658 544v13M661 543v16M662 543v14M663 542v16M664 545v12M665 545v14M668 545v12M669 545v12M670 545v12M676 545v12M679 542v15M680 545v12M687 545v12M688 545v12M694 545v15M700 543v16M702 545v13M703 545v12M705 545v13M708 545v12M717 544v15M718 542v15M729 545v15M731 541v16M739 543v14M744 545v13M746 542v15M748 542v18M750 542v18M753 545v14M754 545v12M760 545v12M761 542v15M767 545v12M779 545v12M780 545v12M784 545v15M792 545v12M795 543v17M798 545v12M801 544v13M804 543v15M814 545v12M816 543v14M818 544v14M821 545v12M823 544v13M832 545v12M834 545v13M842 545v13M843 545v12M846 542v15M848 545v12M849 545v12M858 541v16M859 545v12M860 545v12M861 545v14M862 544v13M864 545v16M867 545v13M868 545v13M869 545v12M876 545v12M877 545v14M885 542v17M887 545v12M888 545v16M889 545v12M890 545v12M892 545v12M895 543v15M896 545v14M899 544v13M901 543v14M904 545v12M906 545v12M908 543v14M912 545v13M919 545v12M921 545v13M922 545v12M924 545v12M926 545v15M929 542v15M934 545v12M936 543v14M937 545v12M942 545v12M943 545v12M944 545v12M945 545v12M947 545v12M948 543v18M950 545v12M953 545v12M954 544v13M955 545v12M958 541v16M960 542v15M965 545v12M966 545v15M968 545v15M970 545v12M975 545v13M981 543v14M985 545v12M986 545v14M987 544v13M988 544v13M989 545v12M995 545v15M996 545v12M997 545v12M999 544v13M1000 542v15M1001 545v12M1006 545v14M1010 545v12M1013 545v12"/><path stroke="#5c5c00" d="M281 545v11M283 546v10M286 545v12M289 545v12M294 546v11M295 546v10M296 546v11M298 545v12M300 546v11M308 545v11M310 545v12M313 546v10M318 545v11M321 545v12M329 546v11M330 546v11M333 546v11M341 546v11M342 546v11M343 546v10M344 546v10M345 546v11M347 546v10M352 545v11M359 546v10M360 546v11M363 545v11M371 545v11M374 545v12M377 546v10M378 546v10M379 545v12M380 546v11M383 545v12M384 545v11M388 546v11M392 545v12M399 545v12M402 545v11M405 546v11M406 545v11M407 545v11M411 546v11M412 546v11M424 546v10M432 545v11M433 545v11M437 545v11M438 546v10M440 546v10M442 546v11M446 545v12M448 546v11M452 545v12M455 546v11M458 545v12M463 546v11M465 545v12M469 545v12M470 546v11M472 545v11M473 545v12M474 546v11M475 546v10M478 546v10M481 545v12M482 545v11M489 546v10M492 546v11M504 545v12M505 546v11M506 546v11M507 546v10M509 545v12M511 545v11M512 545v11M517 546v10M519 545v12M525 546v11M526 545v11M528 546v10M530 546v10M531 545v12M533 546v11M535 545v11M536 545v11M545 546v11M547 546v11M548 545v11M551 545v11M552 545v12M554 546v10M555 545v11M557 545v12M558 545v11M564 546v11M565 546v10M566 546v10M576 545v11M579 545v12M580 546v10M583 546v10M584 545v11M585 546v10M586 545v11M588 546v10M589 546v11M591 546v10M594 546v11M595 545v11M596 545v11M599 546v11M604 546v11M605 546v10M610 546v11M612 546v11M616 545v12M624 546v11M626 545v12M632 545v12M636 546v11M637 546v11M640 545v11M641 546v11M645 545v12M653 546v10M655 546v11M657 546v11M658 546v10M660 545v11M665 546v11M666 546v10M667 545v11M674 546v11M675 545v12M676 545v11M678 546v10M684 545v12M685 545v12M686 545v11M687 546v11M693 546v11M700 545v12M705 546v11M712 546v10M718 545v12M721 546v10M723 546v11M729 546v10M731 546v11M739 545v11M740 546v11M742 546v10M745 545v11M749 545v12M750 546v10M753 546v10M756 545v11M758 546v10M764 546v10M768 546v11M769 546v10M772 546v11M775 545v11M779 546v11M780 545v12M781 546v11M786 545v11M797 545v12M803 546v11M806 546v11M809 545v12M814 545v12M815 545v11M817 545v11M819 545v12M821 546v10M822 545v11M824 545v11M827 545v12M828 545v12M838 546v10M840 546v10M841 546v10M842 545v11M844 546v11M847 546v10M848 546v10M852 545v11M855 546v10M856 545v11M858 546v11M862 545v12M863 545v12M867 546v10M870 546v10M874 546v10M875 546v10M888 545v12M889 545v12M890 546v10M891 545v11M893 545v11M900 545v12M902 546v11M903 546v10M909 546v10M910 545v12M911 546v11M914 545v12M917 546v11M919 545v11M923 546v11M925 546v10M928 545v12M932 545v12M934 546v10M935 546v11M940 546v10M946 546v11M957 545v11M969 546v10M972 545v11M973 545v12M974 545v11M975 546v11M976 546v11M977 546v10M983 546v11M986 545v11M989 546v11M996 546v11M999 546v10M1000 545v12M1001 545v12M1005 546v11M1011 545v11M1012 545v12M1016 545v12M1018 546v10M1020 546v11"/><path stroke="#474700" d="M278 545v12M279 546v10M284 545v12M288 545v11M290 546v11M291 545v11M302 545v12M303 546v10M305 545v12M307 546v11M309 545v12M311 546v10M312 545v12M314 546v11M316 546v10M317 545v11M320 546v11M322 546v11M324 545v12M325 546v11M328 546v10M331 546v11M334 545v12M336 546v11M337 546v11M339 545v11M340 546v11M353 545v11M354 546v10M357 546v11M362 545v12M364 545v12M366 545v12M370 545v11M376 546v10M381 545v12M385 545v12M386 545v11M387 546v10M393 545v12M395 545v12M400 545v11M401 546v10M403 545v12M404 546v10M408 546v10M409 546v11M413 546v10M414 545v12M415 545v12M419 545v11M421 545v12M423 546v10M425 546v11M426 546v11M430 545v11M435 545v12M439 546v11M443 546v11M445 545v12M447 546v11M451 545v12M453 545v11M454 545v11M457 545v12M460 545v11M461 545v12M464 546v11M471 545v12M480 545v11M487 546v11M488 546v11M493 546v10M495 545v12M498 545v12M499 545v12M500 545v12M502 546v11M503 545v12M513 545v12M514 546v10M518 545v11M521 545v12M522 546v10M523 545v12M529 546v10M532 545v11M534 546v11M540 545v11M542 546v11M544 545v11M546 546v10M549 545v11M561 546v10M567 545v12M569 546v11M570 546v10M571 545v12M573 545v11M574 546v11M577 545v11M581 546v10M582 545v12M587 545v12M590 545v12M600 545v12M601 545v11M607 545v11M608 546v11M615 545v12M617 545v11M620 545v12M622 545v12M623 546v10M628 546v10M629 545v12M630 545v11M634 546v10M635 546v11M642 546v10M643 545v11M647 545v11M648 546v11M656 545v12M661 546v11M671 546v11M672 545v11M677 545v11M680 546v11M681 546v10M682 545v12M683 546v11M688 545v11M694 545v12M696 546v10M698 546v10M701 545v11M706 545v12M713 546v11M714 545v11M716 545v12M719 545v11M720 545v11M722 545v11M725 545v12M726 545v11M727 546v11M728 546v11M730 546v10M732 545v11M735 545v11M736 545v11M738 545v12M746 546v11M754 546v11M762 546v11M763 545v11M766 545v12M778 545v12M782 546v10M783 546v11M785 545v11M789 546v10M791 545v12M792 545v11M793 546v10M795 545v12M799 545v11M802 545v12M804 545v12M812 545v11M813 546v10M816 545v12M818 546v11M823 546v11M826 545v11M833 546v10M834 546v11M849 546v11M850 546v10M853 546v10M854 546v10M857 545v11M859 546v11M860 546v11M861 545v11M864 546v10M866 546v11M868 546v11M869 545v12M872 546v11M876 545v11M877 546v11M878 546v11M879 546v10M881 545v12M884 545v12M885 546v10M892 545v12M894 545v11M897 546v10M898 545v12M901 545v11M904 546v11M907 546v11M912 545v12M915 545v12M918 546v11M921 546v10M922 546v10M924 545v11M926 546v11M929 546v11M933 545v12M938 546v10M939 545v11M941 546v10M942 546v11M945 546v11M949 546v10M950 546v11M951 545v12M952 546v11M953 545v11M954 546v11M955 545v11M956 546v11M959 546v10M960 546v10M961 546v10M962 546v10M964 546v11M965 546v10M967 545v11M970 545v11M971 545v12M978 546v10M980 545v11M981 545v11M982 545v12M985 545v12M988 545v12M993 545v12M995 545v12M997 546v11M1003 545v11M1006 546v10M1007 545v12M1008 546v11M1009 545v12M1019 545v11"/><path stroke="#333300" d="M277 546v10M280 546v11M282 545v12M285 545v12M287 545v12M292 545v12M293 546v11M297 546v11M299 545v12M301 546v11M304 545v11M306 545v11M315 545v11M319 546v11M323 546v10M326 545v12M327 545v12M332 546v11M335 545v12M338 546v11M346 546v11M348 545v11M349 545v12M350 545v12M351 546v11M355 545v12M356 545v11M358 546v10M361 545v12M365 546v11M367 546v10M368 545v12M369 545v11M372 545v12M373 546v11M375 545v11M382 546v11M389 546v11M390 545v11M391 546v11M394 546v10M396 546v10M397 546v11M398 545v12M410 545v12M416 545v11M417 545v11M418 545v12M420 545v12M422 545v11M427 545v12M428 545v12M429 546v11M431 545v12M434 545v11M436 546v11M441 545v12M444 545v12M449 545v12M450 545v12M456 545v12M459 546v11M462 546v11M466 545v12M467 545v12M468 545v12M476 545v11M477 546v11M479 546v11M483 546v10M484 546v11M485 546v11M486 545v12M490 545v11M491 546v11M494 545v12M496 545v12M497 545v12M501 546v11M508 545v12M510 545v12M515 545v12M516 546v10M520 545v11M524 546v10M527 545v12M537 546v10M538 545v11M539 545v12M541 545v12M543 546v11M550 545v11M553 545v12M556 545v12M559 545v12M560 546v10M562 546v11M563 545v11M568 545v12M572 545v11M575 546v10M578 546v10M592 545v11M593 546v10M597 545v11M598 545v11M602 546v11M603 545v12M606 546v10M609 546v10M611 545v11M613 546v10M614 545v12M618 545v11M619 545v11M621 545v12M625 545v11M627 545v11M631 545v12M633 545v11M638 545v11M639 545v12M644 545v12M646 546v11M649 545v11M650 545v12M651 546v10M652 545v11M654 546v11M659 545v11M662 546v10M663 545v12M664 545v12M668 546v11M669 546v11M670 546v10M673 545v11M679 546v10M689 546v10M690 545v11M691 545v12M692 545v12M695 545v12M697 546v10M699 545v11M702 545v11M703 545v11M704 545v11M707 545v11M708 546v10M709 546v11M710 545v12M711 545v12M715 546v10M717 546v10M724 545v12M733 545v11M734 546v10M737 545v12M741 545v12M743 546v10M744 546v10M747 545v11M748 546v11M751 545v12M752 545v11M755 545v12M757 545v11M759 545v12M760 545v12M761 546v10M765 545v11M767 546v11M770 545v11M771 546v10M773 545v12M774 546v11M776 546v11M777 545v12M784 545v12M787 545v11M788 545v11M790 545v11M794 546v11M796 546v11M798 545v11M800 546v10M801 545v11M805 545v12M807 545v11M808 546v10M810 546v10M811 546v10M820 545v11M825 546v11M829 545v11M830 546v10M831 545v12M832 545v12M835 545v11M836 546v11M837 546v11M839 545v12M843 546v10M845 545v11M846 545v12M851 545v12M865 546v11M871 545v11M873 545v12M880 545v11M882 545v11M883 545v12M886 545v11M887 546v10M895 546v10M896 545v12M899 545v12M905 545v11M906 546v10M908 545v11M913 545v11M916 546v11M920 545v11M927 545v11M930 545v12M931 546v10M936 546v11M937 545v11M943 545v12M944 546v10M947 546v10M948 546v11M958 545v11M963 546v11M966 545v11M968 546v10M979 546v10M984 546v10M987 545v11M990 546v10M991 546v11M992 545v12M994 546v11M998 546v10M1002 545v12M1004 545v11M1010 545v12M1013 546v11M1014 546v11M1015 545v11M1017 546v10"/><path stroke="#b8b800" d="M281 547v7M284 548v7M287 546v9M290 547v7M291 548v6M294 547v6M297 547v7M298 547v6M302 547v6M303 547v7M304 547v8M306 548v5M307 547v6M314 546v9M315 547v7M318 547v6M319 547v7M320 546v7M322 547v6M323 547v7M324 546v7M325 546v8M329 547v7M331 546v8M335 547v8M336 547v8M338 547v7M346 547v7M361 548v6M364 548v6M368 546v8M373 547v7M374 546v8M375 547v7M377 547v7M378 546v8M384 546v7M386 546v7M388 547v6M390 547v7M395 546v9M396 547v7M399 547v7M401 548v7M403 547v8M405 547v7M408 546v7M409 547v7M417 547v7M418 548v7M419 546v8M422 548v6M423 548v6M427 547v8M431 547v7M434 546v9M439 548v6M440 547v8M443 548v6M445 547v7M446 547v6M450 547v6M458 546v9M459 546v8M462 548v7M467 548v6M472 548v6M473 547v7M475 547v6M480 548v6M482 547v7M486 548v6M487 546v8M491 547v7M492 548v6M495 547v6M497 547v8M500 547v7M505 546v8M506 547v7M512 547v7M515 547v6M525 546v8M530 547v6M531 547v7M532 546v7M535 548v5M546 548v6M548 547v7M554 547v6M558 547v7M562 546v7M563 547v7M564 547v8M565 547v7M579 547v7M580 547v6M583 547v7M587 547v7M595 547v7M599 547v7M602 547v7M609 547v6M610 547v7M613 546v8M622 547v8M624 547v7M629 547v7M632 547v8M633 547v7M637 547v7M641 547v6M645 547v7M647 547v7M652 547v7M654 548v6M655 547v8M657 547v7M659 547v8M664 546v8M667 548v5M668 548v6M669 547v7M670 546v8M673 548v6M680 547v7M686 547v7M688 548v6M692 546v9M695 547v7M696 546v8M703 547v8M706 547v8M711 547v8M713 546v8M715 546v8M716 547v7M720 548v6M724 548v6M725 548v6M727 547v8M729 548v6M733 548v7M740 547v6M741 548v6M743 547v7M746 547v7M747 547v7M749 546v8M751 547v7M754 547v6M756 547v6M757 546v8M764 547v8M766 548v7M768 546v8M770 547v7M773 547v7M776 547v7M779 548v6M781 548v6M782 547v7M786 548v6M789 547v7M790 547v6M791 547v7M793 548v7M795 547v7M796 548v7M797 547v7M802 547v7M803 547v6M814 546v8M815 546v8M817 547v8M819 547v8M828 546v8M839 546v9M840 547v6M843 547v7M845 547v6M848 547v7M850 547v8M851 547v7M852 547v7M854 548v7M857 547v7M860 548v6M866 547v6M868 547v7M877 546v7M879 548v6M880 547v7M883 547v7M884 547v8M886 548v6M888 547v6M889 547v7M892 548v6M893 547v8M895 547v7M896 547v7M897 546v8M898 547v8M902 547v8M905 547v6M908 546v8M909 547v6M911 547v7M915 547v6M917 547v7M919 547v7M922 547v7M923 546v8M926 548v6M929 547v7M930 547v8M933 547v7M934 547v7M935 547v7M942 547v6M945 547v7M953 547v8M954 547v8M960 547v6M961 548v6M962 547v7M965 547v8M977 547v8M981 546v7M983 546v8M984 546v8M985 546v9M986 547v8M992 548v6M994 547v7M995 547v7M999 547v8M1000 547v7M1002 547v8M1003 546v8M1009 547v7M1014 547v7M1016 547v7"/><path stroke="#a1a100" d="M277 547v7M278 547v8M279 546v8M280 547v6M286 547v6M288 547v8M289 547v7M292 547v7M293 546v8M295 547v7M296 547v7M299 547v6M300 547v6M309 547v7M310 548v7M312 547v7M316 547v7M327 546v8M328 547v8M330 548v5M332 547v7M334 547v7M341 546v9M344 548v7M345 547v7M350 547v8M353 547v6M358 547v7M359 547v8M362 547v7M367 546v7M369 547v7M371 547v7M376 547v7M379 546v7M380 548v5M392 546v8M393 548v6M394 546v8M398 547v7M410 547v7M414 546v8M415 547v8M416 548v5M424 547v8M426 547v7M430 547v7M433 548v6M436 548v6M438 547v8M441 547v8M442 546v7M447 547v7M452 547v7M455 546v8M456 547v6M464 548v6M465 547v8M468 548v7M476 546v7M478 548v6M479 547v8M481 548v7M483 546v9M485 547v7M488 546v8M493 547v8M494 547v6M502 547v7M503 547v8M509 547v8M511 546v8M513 548v6M514 546v7M516 547v6M517 546v8M519 547v7M521 548v6M523 547v6M524 548v6M536 547v6M537 547v8M540 547v7M542 547v7M543 547v6M545 547v7M547 547v8M549 546v8M550 547v7M552 547v7M555 547v7M556 547v7M566 548v5M567 546v8M568 546v9M570 546v8M571 547v8M572 547v8M573 548v6M574 546v8M575 548v6M576 547v7M577 547v8M581 548v6M582 548v6M586 548v7M589 547v7M590 547v6M594 548v6M596 547v7M598 546v8M600 548v6M603 547v7M605 547v7M607 548v6M611 546v8M614 547v7M615 546v8M616 547v8M617 547v7M618 547v7M619 547v8M621 547v7M623 548v7M625 547v7M626 547v7M630 547v7M634 547v7M638 547v7M642 547v8M644 547v7M648 547v7M649 547v7M650 548v5M651 547v7M653 547v8M656 547v8M658 548v6M661 547v7M662 547v6M666 547v7M674 547v7M677 547v7M678 547v7M681 548v6M683 547v7M684 546v9M685 546v7M687 547v8M689 546v8M690 547v6M693 547v7M694 548v5M697 547v7M701 547v6M702 546v8M705 547v6M709 547v8M714 547v6M718 547v7M722 547v6M726 548v7M731 547v8M734 547v8M738 547v7M739 547v8M742 547v6M748 548v6M750 547v6M752 547v6M753 547v6M755 547v7M758 546v8M760 547v6M762 548v6M763 548v6M765 546v8M767 546v7M771 546v8M774 548v5M775 546v7M778 548v6M785 547v7M787 547v8M794 547v7M798 547v7M800 547v7M805 548v6M807 547v8M809 548v6M810 546v8M812 547v6M813 546v9M816 547v7M822 547v8M829 546v9M832 546v8M833 547v7M834 546v8M836 547v7M846 546v9M847 547v6M849 547v7M856 547v7M858 547v7M861 546v8M862 546v9M864 547v6M865 547v7M867 547v7M872 548v7M873 548v6M874 547v6M875 547v7M876 547v8M890 546v7M891 547v8M894 548v6M900 548v5M901 547v6M903 547v7M904 546v7M907 548v6M910 547v8M913 547v7M916 547v7M918 547v6M925 547v7M927 546v8M928 547v6M932 547v7M936 548v6M938 546v8M940 547v8M941 547v7M943 547v6M944 547v6M947 546v8M955 548v6M956 547v7M959 546v9M963 547v7M964 547v7M968 546v8M971 546v9M973 547v7M975 547v7M976 546v8M979 547v7M982 547v7M987 547v7M989 548v5M990 547v7M997 547v7M1004 546v8M1007 547v7M1010 547v7M1011 547v7M1013 546v8M1015 547v7M1018 548v6M1019 547v7M1020 548v6"/><path stroke="#8b8b00" d="M282 546v8M283 547v7M285 547v7M301 546v8M305 547v8M308 547v6M311 546v9M313 547v7M317 547v8M321 546v8M326 547v7M333 547v6M337 547v7M339 547v6M340 546v8M342 547v7M343 548v6M347 547v6M348 547v8M349 547v7M351 546v8M352 548v6M354 546v8M355 547v7M356 546v8M357 546v8M360 547v6M363 548v6M365 547v7M366 547v8M370 546v8M372 547v8M381 546v8M382 547v7M383 548v7M385 548v5M387 546v7M389 548v6M391 546v8M397 547v6M400 547v7M402 548v6M404 547v7M406 547v7M407 546v9M411 546v8M412 548v6M413 547v7M420 546v8M421 547v7M425 548v5M428 548v5M429 546v7M432 546v8M435 547v8M437 547v7M444 547v7M448 548v5M449 546v8M451 547v7M453 548v6M454 547v7M457 547v7M460 548v6M461 547v8M463 547v7M466 547v8M469 547v6M470 547v7M471 548v7M474 548v6M477 547v7M484 547v7M489 546v9M490 548v6M496 548v6M498 548v7M499 548v5M501 547v7M504 547v7M507 546v7M508 548v5M510 547v7M518 547v6M520 547v7M522 548v7M526 547v7M527 548v5M528 548v6M529 546v7M533 547v8M534 547v7M538 547v8M539 547v6M541 547v7M544 547v6M551 546v9M553 546v8M557 546v8M559 547v6M560 546v8M561 547v7M569 547v7M578 547v7M584 547v6M585 546v7M588 548v6M591 547v7M592 547v7M593 547v7M597 548v6M601 548v6M604 547v6M606 547v8M608 547v7M612 546v8M620 547v6M627 547v7M628 547v7M631 547v7M635 547v8M636 548v6M639 546v8M640 548v5M643 546v8M646 547v6M660 546v7M663 546v7M665 547v7M671 547v7M672 547v7M675 547v8M676 547v7M679 547v7M682 548v6M691 547v7M698 546v9M699 547v7M700 548v7M704 547v7M707 546v8M708 547v6M710 547v7M712 548v6M717 547v6M719 547v7M721 547v7M723 546v8M728 547v7M730 547v6M732 547v7M735 547v6M736 548v6M737 548v6M744 548v5M745 546v9M759 547v7M761 547v7M769 546v7M772 547v6M777 547v7M780 547v7M783 547v7M784 547v7M788 547v6M792 547v7M799 548v7M801 547v6M804 547v7M806 547v7M808 547v6M811 547v7M818 547v8M820 547v7M821 547v6M823 547v7M824 547v7M825 547v7M826 547v7M827 547v6M830 547v7M831 546v7M835 547v7M837 548v6M838 547v7M841 548v7M842 547v6M844 548v6M853 547v8M855 548v5M859 546v8M863 547v6M869 547v7M870 547v7M871 547v7M878 546v8M881 547v7M882 547v7M885 546v8M887 547v7M899 547v6M906 547v7M912 547v7M914 547v7M920 546v9M921 548v6M924 548v6M931 547v7M937 547v7M939 546v8M946 547v7M948 548v6M949 547v7M950 547v7M951 547v7M952 547v6M957 548v6M958 546v8M966 547v7M967 548v6M969 547v8M970 546v8M972 547v7M974 547v6M978 547v7M980 548v6M988 547v7M991 547v7M993 547v7M996 547v7M998 547v7M1001 547v7M1005 547v7M1006 547v7M1008 547v7M1012 547v7M1017 548v6"/><path stroke="#f4f400" d="M278 550v2M279 550v2M280 550v2M289 550v2M297 550v2M298 550v2M299 550v2M301 550v2M302 550v2M307 550v2M309 550v2M310 550v2M311 550v2M313 550v2M314 550v2M318 550v2M321 550v2M322 550v2M326 550v2M328 550v2M329 550v2M332 550v2M334 550v2M335 550v2M337 550v2M340 550v2M343 550v2M348 550v2M353 550v2M355 550v2M356 550v2M357 550v2M358 550v2M359 550v2M361 550v2M364 550v2M365 550v2M368 550v2M372 550v2M375 550v2M376 550v2M387 550v2M389 550v2M392 550v2M397 550v2M398 550v2M401 550v2M402 550v2M405 550v2M407 550v2M408 550v2M414 550v2M415 550v2M419 550v2M422 550v2M424 550v2M427 550v2M428 550v2M430 550v2M433 550v2M437 550v2M449 550v2M452 550v2M453 550v2M460 550v2M462 550v2M463 550v2M464 550v2M465 550v2M468 550v2M472 550v2M478 550v2M481 550v2M488 550v2M491 550v2M497 550v2M501 550v2M508 550v2M509 550v2M520 550v2M524 550v2M531 550v2M533 550v2M535 550v2M538 550v2M539 550v2M544 550v2M548 550v2M555 550v2M558 550v2M559 550v2M560 550v2M561 550v2M562 550v2M566 550v2M568 550v2M577 550v2M582 550v2M584 550v2M586 550v2M587 550v2M592 550v2M600 550v2M601 550v2M603 550v2M605 550v2M608 550v2M612 550v2M613 550v2M615 550v2M623 550v2M624 550v2M626 550v2M627 550v2M628 550v2M633 550v2M634 550v2M638 550v2M640 550v2M658 550v2M663 550v2M667 550v2M671 550v2M674 550v2M682 550v2M683 550v2M695 550v2M696 550v2M697 550v2M698 550v2M700 550v2M701 550v2M703 550v2M704 550v2M707 550v2M709 550v2M712 550v2M714 550v2M717 550v2M722 550v2M723 550v2M728 550v2M730 550v2M732 550v2M734 550v2M735 550v2M739 550v2M744 550v2M747 550v2M749 550v2M750 550v2M751 550v2M752 550v2M755 550v2M760 550v2M761 550v2M763 550v2M764 550v2M766 550v2M769 550v2M770 550v2M772 550v2M774 550v2M776 550v2M781 550v2M784 550v2M789 550v2M796 550v2M800 550v2M802 550v2M814 550v2M824 550v2M829 550v2M830 550v2M834 550v2M839 550v2M840 550v2M842 550v2M847 550v2M850 550v2M852 550v2M853 550v2M854 550v2M855 550v2M856 550v2M857 550v2M860 550v2M862 550v2M865 550v2M867 550v2M869 550v2M885 550v2M886 550v2M887 550v2M889 550v2M890 550v2M893 550v2M895 550v2M897 550v2M898 550v2M901 550v2M902 550v2M907 550v2M910 550v2M913 550v2M916 550v2M919 550v2M920 550v2M921 550v2M923 550v2M925 550v2M928 550v2M929 550v2M931 550v2M935 550v2M936 550v2M938 550v2M939 550v2M942 550v2M944 550v2M950 550v2M953 550v2M955 550v2M957 550v2M962 550v2M963 550v2M972 550v2M974 550v2M977 550v2M978 550v2M982 550v2M983 550v2M985 550v2M986 550v2M988 550v2M989 550v2M990 550v2M991 550v2M995 550v2M998 550v2M1000 550v2M1004 550v2M1010 550v2M1012 550v2M1015 550v2M1017 550v2M1019 550v2"/><path stroke="#e5e500" d="M282 550v2M285 550v2M286 550v2M290 550v2M291 550v2M292 550v2M293 550v2M294 550v2M295 550v2M296 550v2M304 550v2M306 550v2M316 550v2M317 550v2M324 550v2M327 550v2M336 550v2M338 550v2M339 550v2M341 550v2M342 550v2M344 550v2M349 550v2M351 550v2M352 550v2M354 550v2M360 550v2M363 550v2M366 550v2M367 550v2M369 550v2M370 550v2M373 550v2M374 550v2M377 550v2M379 550v2M382 550v2M383 550v2M384 550v2M386 550v2M390 550v2M391 550v2M396 550v2M409 550v2M411 550v2M412 550v2M413 550v2M416 550v2M418 550v2M420 550v2M423 550v2M426 550v2M429 550v2M431 550v2M434 550v2M435 550v2M439 550v2M440 550v2M441 550v2M445 550v2M446 550v2M447 550v2M448 550v2M450 550v2M451 550v2M457 550v2M466 550v2M469 550v2M471 550v2M477 550v2M482 550v2M487 550v2M489 550v2M493 550v2M496 550v2M503 550v2M507 550v2M512 550v2M514 550v2M516 550v2M518 550v2M521 550v2M523 550v2M525 550v2M527 550v2M529 550v2M530 550v2M534 550v2M536 550v2M537 550v2M540 550v2M545 550v2M546 550v2M549 550v2M552 550v2M565 550v2M567 550v2M569 550v2M570 550v2M574 550v2M579 550v2M580 550v2M581 550v2M583 550v2M585 550v2M588 550v2M589 550v2M590 550v2M595 550v2M602 550v2M606 550v2M610 550v2M616 550v2M617 550v2M620 550v2M630 550v2M631 550v2M632 550v2M635 550v2M637 550v2M639 550v2M642 550v2M643 550v2M649 550v2M651 550v2M652 550v2M654 550v2M656 550v2M659 550v2M660 550v2M661 550v2M666 550v2M669 550v2M670 550v2M673 550v2M675 550v2M676 550v2M678 550v2M679 550v2M684 550v2M686 550v2M691 550v2M694 550v2M699 550v2M702 550v2M706 550v2M710 550v2M711 550v2M715 550v2M716 550v2M718 550v2M719 550v2M726 550v2M731 550v2M733 550v2M736 550v2M737 550v2M738 550v2M741 550v2M743 550v2M745 550v2M746 550v2M748 550v2M754 550v2M756 550v2M768 550v2M771 550v2M777 550v2M778 550v2M783 550v2M786 550v2M795 550v2M797 550v2M798 550v2M799 550v2M801 550v2M804 550v2M805 550v2M809 550v2M810 550v2M811 550v2M813 550v2M817 550v2M819 550v2M820 550v2M821 550v2M822 550v2M823 550v2M831 550v2M832 550v2M837 550v2M838 550v2M841 550v2M843 550v2M844 550v2M859 550v2M866 550v2M868 550v2M873 550v2M874 550v2M875 550v2M876 550v2M877 550v2M878 550v2M879 550v2M883 550v2M884 550v2M888 550v2M900 550v2M903 550v2M906 550v2M912 550v2M915 550v2M917 550v2M918 550v2M924 550v2M934 550v2M937 550v2M940 550v2M943 550v2M945 550v2M947 550v2M948 550v2M949 550v2M951 550v2M952 550v2M954 550v2M956 550v2M958 550v2M960 550v2M961 550v2M964 550v2M967 550v2M968 550v2M970 550v2M971 550v2M973 550v2M975 550v2M979 550v2M980 550v2M996 550v2M997 550v2M999 550v2M1006 550v2M1007 550v2M1009 550v2M1013 550v2M1014 550v2M1016 550v2M1020 550v2"/><path stroke="#d6d600" d="M277 550v2M281 550v2M283 550v2M284 550v2M287 550v2M288 550v2M300 550v2M303 550v2M305 550v2M308 550v2M312 550v2M315 550v2M319 550v2M320 550v2M323 550v2M325 550v2M330 550v2M331 550v2M333 550v2M345 550v2M346 550v2M347 550v2M350 550v2M362 550v2M371 550v2M378 550v2M380 550v2M381 550v2M385 550v2M388 550v2M393 550v2M394 550v2M395 550v2M399 550v2M400 550v2M403 550v2M404 550v2M406 550v2M410 550v2M417 550v2M421 550v2M425 550v2M432 550v2M436 550v2M438 550v2M442 550v2M443 550v2M444 550v2M454 550v2M455 550v2M456 550v2M458 550v2M459 550v2M461 550v2M467 550v2M470 550v2M473 550v2M474 550v2M475 550v2M476 550v2M479 550v2M480 550v2M483 550v2M484 550v2M485 550v2M486 550v2M490 550v2M492 550v2M494 550v2M495 550v2M498 550v2M499 550v2M500 550v2M502 550v2M504 550v2M505 550v2M506 550v2M510 550v2M511 550v2M513 550v2M515 550v2M517 550v2M519 550v2M522 550v2M526 550v2M528 550v2M532 550v2M541 550v2M542 550v2M543 550v2M547 550v2M550 550v2M551 550v2M553 550v2M554 550v2M556 550v2M557 550v2M563 550v2M564 550v2M571 550v2M572 550v2M573 550v2M575 550v2M576 550v2M578 550v2M591 550v2M593 550v2M594 550v2M596 550v2M597 550v2M598 550v2M599 550v2M604 550v2M607 550v2M609 550v2M611 550v2M614 550v2M618 550v2M619 550v2M621 550v2M622 550v2M625 550v2M629 550v2M636 550v2M641 550v2M644 550v2M645 550v2M646 550v2M647 550v2M648 550v2M650 550v2M653 550v2M655 550v2M657 550v2M662 550v2M664 550v2M665 550v2M668 550v2M672 550v2M677 550v2M680 550v2M681 550v2M685 550v2M687 550v2M688 550v2M689 550v2M690 550v2M692 550v2M693 550v2M705 550v2M708 550v2M713 550v2M720 550v2M721 550v2M724 550v2M725 550v2M727 550v2M729 550v2M740 550v2M742 550v2M753 550v2M757 550v2M758 550v2M759 550v2M762 550v2M765 550v2M767 550v2M773 550v2M775 550v2M779 550v2M780 550v2M782 550v2M785 550v2M787 550v2M788 550v2M790 550v2M791 550v2M792 550v2M793 550v2M794 550v2M803 550v2M806 550v2M807 550v2M808 550v2M812 550v2M815 550v2M816 550v2M818 550v2M825 550v2M826 550v2M827 550v2M828 550v2M833 550v2M835 550v2M836 550v2M845 550v2M846 550v2M848 550v2M849 550v2M851 550v2M858 550v2M861 550v2M863 550v2M864 550v2M870 550v2M871 550v2M872 550v2M880 550v2M881 550v2M882 550v2M891 550v2M892 550v2M894 550v2M896 550v2M899 550v2M904 550v2M905 550v2M908 550v2M909 550v2M911 550v2M914 550v2M922 550v2M926 550v2M927 550v2M930 550v2M932 550v2M933 550v2M941 550v2M946 550v2M959 550v2M965 550v2M966 550v2M969 550v2M976 550v2M981 550v2M984 550v2M987 550v2M992 550v2M993 550v2M994 550v2M1001 550v2M1002 550v2M1003 550v2M1005 550v2M1008 550v2M1011 550v2M1018 550v2"/>
</g>
<path stroke="#b0a47c" stroke-width="1" d="M21 30h1M21 43h1M21 56h1M21 69h1M21 95h1M21 108h1M21 121h1M21 134h1M21 160h1M21 173h1M21 186h1M21 199h1M21 225h1M21 238h1M21 251h1M21 264h1M21 290h1M21 303h1M21 316h1M21 329h1M21 336h1M21 338h1M21 339h1M21 340h1M21 341h1M21 343h1M21 344h1M21 345h1M21 346h1M21 348h1M21 355h1M21 368h1M21 381h1M21 394h1M21 420h1M21 433h1M21 446h1M21 459h1M21 485h1M21 498h1M21 511h1M21 524h1M21 550h1M21 563h1M21 576h1M21 589h1M21 615h1M21 628h1M21 641h1M21 654h1M22 82h1M22 147h1M22 212h1M22 277h1M22 342h1M22 407h1M22 472h1M22 537h1M22 602h1M23 30h1M23 43h1M23 56h1M23 69h1M23 95h1M23 108h1M23 121h1M23 134h1M23 160h1M23 173h1M23 186h1M23 199h1M23 225h1M23 238h1M23 251h1M23 264h1M23 290h1M23 303h1M23 316h1M23 329h1M23 355h1M23 368h1M23 381h1M23 394h1M23 420h1M23 433h1M23 446h1M23 459h1M23 485h1M23 498h1M23 511h1M23 524h1M23 550h1M23 563h1M23 576h1M23 589h1M23 615h1M23 628h1M23 641h1M23 654h1M24 82h1M24 147h1M24 212h1M24 277h1M24 342h1M24 407h1M24 472h1M24 537h1M24 602h1M25 342h1M26 82h1M26 147h1M26 212h1M26 277h1M26 342h1M26 407h1M26 472h1M26 537h1M26 602h1M27 342h1M29 342h1M31 342h1M33 342h1M35 342h1M37 342h1M39 342h1M41 17h1M41 19h1M41 82h1M41 147h1M41 212h1M41 277h1M41 339h1M41 341h1M41 342h1M41 343h1M41 345h1M41 407h1M41 472h1M41 537h1M41 602h1M41 665h1M41 667h1M43 342h1M45 342h1M47 342h1M49 342h1M51 342h1M53 342h1M55 342h1M57 342h1M59 342h1M61 17h1M61 19h1M61 82h1M61 147h1M61 212h1M61 277h1M61 339h1M61 341h1M61 342h1M61 343h1M61 345h1M61 407h1M61 472h1M61 537h1M61 602h1M61 665h1M61 667h1M63 342h1M65 342h1M67 342h1M69 342h1M71 342h1M73 342h1M75 342h1M77 342h1M79 342h1M81 17h1M81 19h1M81 82h1M81 147h1M81 212h1M81 277h1M81 339h1M81 341h1M81 342h1M81 343h1M81 345h1M81 407h1M81 472h1M81 537h1M81 602h1M81 665h1M81 667h1M83 342h1M85 342h1M87 342h1M89 342h1M91 342h1M93 342h1M95 342h1M97 342h1M99 342h1M101 17h1M101 19h1M101 82h1M101 147h1M101 212h1M101 277h1M101 339h1M101 341h1M101 342h1M101 343h1M101 345h1M101 407h1M101 472h1M101 537h1M101 602h1M101 665h1M101 667h1M103 342h1M105 342h1M107 342h1M109 342h1M111 342h1M113 342h1M115 342h1M117 342h1M119 342h1M121 18h1M121 20h1M121 22h1M121 30h1M121 43h1M121 56h1M121 69h1M121 82h1M121 95h1M121 108h1M121 121h1M121 134h1M121 147h1M121 160h1M121 173h1M121 186h1M121 199h1M121 212h1M121 225h1M121 238h1M121 251h1M121 264h1M121 277h1M121 290h1M121 303h1M121 316h1M121 329h1M121 336h1M121 338h1M121 339h1M121 340h1M121 341h1M121 342h1M121 343h1M121 344h1M121 345h1M121 346h1M121 348h1M121 355h1M121 368h1M121 381h1M121 394h1M121 407h1M121 420h1M121 433h1M121 446h1M121 459h1M121 472h1M121 485h1M121 498h1M121 511h1M121 524h1M121 537h1M121 550h1M121 563h1M121 576h1M121 589h1M121 602h1M121 615h1M121 628h1M121 641h1M121 654h1M121 662h1M121 664h1M121 666h1M123 342h1M125 342h1M127 342h1M129 342h1M131 342h1M133 342h1M135 342h1M137 342h1M139 342h1M141 17h1M141 19h1M141 82h1M141 147h1M141 212h1M141 277h1M141 339h1M141 341h1M141 342h1M141 343h1M141 345h1M141 407h1M141 472h1M141 537h1M141 602h1M141 665h1M141 667h1M143 342h1M145 342h1M147 342h1M149 342h1M151 342h1M153 342h1M155 342h1M157 342h1M159 342h1M161 17h1M161 19h1M161 82h1M161 147h1M161 212h1M161 277h1M161 339h1M161 341h1M161 342h1M161 343h1M161 345h1M161 407h1M161 472h1M161 537h1M161 602h1M161 665h1M161 667h1M163 342h1M165 342h1M167 342h1M169 342h1M171 342h1M173 342h1M175 342h1M177 342h1M179 342h1M181 17h1M181 19h1M181 82h1M181 147h1M181 212h1M181 277h1M181 339h1M181 341h1M181 342h1M181 343h1M181 345h1M181 407h1M181 472h1M181 537h1M181 602h1M181 665h1M181 667h1M183 342h1M185 342h1M187 342h1M189 342h1M191 342h1M193 342h1M195 342h1M197 342h1M199 342h1M201 17h1M201 19h1M201 82h1M201 147h1M201 212h1M201 277h1M201 339h1M201 341h1M201 342h1M201 343h1M201 345h1M201 407h1M201 472h1M201 537h1M201 602h1M201 665h1M201 667h1M203 342h1M205 342h1M207 342h1M209 342h1M211 342h1M213 342h1M215 342h1M217 342h1M219 342h1M221 18h1M221 20h1M221 22h1M221 30h1M221 43h1M221 56h1M221 69h1M221 82h1M221 95h1M221 108h1M221 121h1M221 134h1M221 147h1M221 160h1M221 173h1M221 186h1M221 199h1M221 212h1M221 225h1M221 238h1M221 251h1M221 264h1M221 277h1M221 290h1M221 303h1M221 316h1M221 329h1M221 336h1M221 338h1M221 339h1M221 340h1M221 341h1M221 342h1M221 343h1M221 344h1M221 345h1M221 346h1M221 348h1M221 355h1M221 368h1M221 381h1M221 394h1M221 407h1M221 420h1M221 433h1M221 446h1M221 459h1M221 472h1M221 485h1M221 498h1M221 511h1M221 524h1M221 537h1M221 550h1M221 563h1M221 576h1M221 589h1M221 602h1M221 615h1M221 628h1M221 641h1M221 654h1M221 662h1M221 664h1M221 666h1M223 342h1M225 342h1M227 342h1M229 342h1M231 342h1M233 342h1M235 342h1M237 342h1M239 342h1M241 17h1M241 19h1M241 82h1M241 147h1M241 212h1M241 277h1M241 339h1M241 341h1M241 342h1M241 343h1M241 345h1M241 407h1M241 472h1M241 537h1M241 602h1M241 665h1M241 667h1M243 342h1M245 342h1M247 342h1M249 342h1M251 342h1M253 342h1M255 342h1M257 342h1M259 342h1M261 17h1M261 19h1M261 82h1M261 147h1M261 212h1M261 277h1M261 339h1M261 341h1M261 342h1M261 343h1M261 345h1M261 407h1M261 472h1M261 537h1M261 602h1M261 665h1M261 667h1M263 342h1M265 342h1M267 342h1M269 342h1M271 342h1M273 342h1M275 342h1M277 342h1M279 342h1M281 17h1M281 19h1M281 82h1M281 147h1M281 212h1M281 277h1M281 339h1M281 341h1M281 342h1M281 343h1M281 345h1M281 407h1M281 472h1M281 537h1M281 602h1M281 665h1M281 667h1M283 342h1M285 342h1M287 342h1M289 342h1M291 342h1M293 342h1M295 342h1M297 342h1M299 342h1M301 17h1M301 19h1M301 82h1M301 147h1M301 212h1M301 277h1M301 339h1M301 341h1M301 342h1M301 343h1M301 345h1M301 407h1M301 472h1M301 537h1M301 602h1M301 665h1M301 667h1M303 342h1M305 342h1M307 342h1M309 342h1M311 342h1M313 342h1M315 342h1M317 342h1M319 342h1M321 18h1M321 20h1M321 22h1M321 30h1M321 43h1M321 56h1M321 69h1M321 82h1M321 95h1M321 108h1M321 121h1M321 134h1M321 147h1M321 160h1M321 173h1M321 186h1M321 199h1M321 212h1M321 225h1M321 238h1M321 251h1M321 264h1M321 277h1M321 290h1M321 303h1M321 316h1M321 329h1M321 336h1M321 338h1M321 339h1M321 340h1M321 341h1M321 342h1M321 343h1M321 344h1M321 345h1M321 346h1M321 348h1M321 355h1M321 368h1M321 381h1M321 394h1M321 407h1M321 420h1M321 433h1M321 446h1M321 459h1M321 472h1M321 485h1M321 498h1M321 511h1M321 524h1M321 537h1M321 550h1M321 563h1M321 576h1M321 589h1M321 602h1M321 615h1M321 628h1M321 641h1M321 654h1M321 662h1M321 664h1M321 666h1M323 342h1M325 342h1M327 342h1M329 342h1M331 342h1M333 342h1M335 342h1M337 342h1M339 342h1M341 17h1M341 19h1M341 82h1M341 147h1M341 212h1M341 277h1M341 339h1M341 341h1M341 342h1M341 343h1M341 345h1M341 407h1M341 472h1M341 537h1M341 602h1M341 665h1M341 667h1M343 342h1M345 342h1M347 342h1M349 342h1M351 342h1M353 342h1M355 342h1M357 342h1M359 342h1M361 17h1M361 19h1M361 82h1M361 147h1M361 212h1M361 277h1M361 339h1M361 341h1M361 342h1M361 343h1M361 345h1M361 407h1M361 472h1M361 537h1M361 602h1M361 665h1M361 667h1M363 342h1M365 342h1M367 342h1M369 342h1M371 342h1M373 342h1M375 342h1M377 342h1M379 342h1M381 17h1M381 19h1M381 82h1M381 147h1M381 212h1M381 277h1M381 339h1M381 341h1M381 342h1M381 343h1M381 345h1M381 407h1M381 472h1M381 537h1M381 602h1M381 665h1M381 667h1M383 342h1M385 342h1M387 342h1M389 342h1M391 342h1M393 342h1M395 342h1M397 342h1M399 342h1M401 17h1M401 19h1M401 82h1M401 147h1M401 212h1M401 277h1M401 339h1M401 341h1M401 342h1M401 343h1M401 345h1M401 407h1M401 472h1M401 537h1M401 602h1M401 665h1M401 667h1M403 342h1M405 342h1M407 342h1M409 342h1M411 342h1M413 342h1M415 342h1M417 342h1M419 342h1M421 18h1M421 20h1M421 22h1M421 30h1M421 43h1M421 56h1M421 69h1M421 82h1M421 95h1M421 108h1M421 121h1M421 134h1M421 147h1M421 160h1M421 173h1M421 186h1M421 199h1M421 212h1M421 225h1M421 238h1M421 251h1M421 264h1M421 277h1M421 290h1M421 303h1M421 316h1M421 329h1M421 336h1M421 338h1M421 339h1M421 340h1M421 341h1M421 342h1M421 343h1M421 344h1M421 345h1M421 346h1M421 348h1M421 355h1M421 368h1M421 381h1M421 394h1M421 407h1M421 420h1M421 433h1M421 446h1M421 459h1M421 472h1M421 485h1M421 498h1M421 511h1M421 524h1M421 537h1M421 550h1M421 563h1M421 576h1M421 589h1M421 602h1M421 615h1M421 628h1M421 641h1M421 654h1M421 662h1M421 664h1M421 666h1M423 342h1M425 342h1M427 342h1M429 342h1M431 342h1M433 342h1M435 342h1M437 342h1M439 342h1M441 17h1M441 19h1M441 82h1M441 147h1M441 212h1M441 277h1M441 339h1M441 341h1M441 342h1M441 343h1M441 345h1M441 407h1M441 472h1M441 537h1M441 602h1M441 665h1M441 667h1M443 342h1M445 342h1M447 342h1M449 342h1M451 342h1M453 342h1M455 342h1M457 342h1M459 342h1M461 17h1M461 19h1M461 82h1M461 147h1M461 212h1M461 277h1M461 339h1M461 341h1M461 342h1M461 343h1M461 345h1M461 407h1M461 472h1M461 537h1M461 602h1M461 665h1M461 667h1M463 342h1M465 342h1M467 342h1M469 342h1M471 342h1M473 342h1M475 342h1M477 342h1M479 342h1M481 17h1M481 19h1M481 82h1M481 147h1M481 212h1M481 277h1M481 339h1M481 341h1M481 342h1M481 343h1M481 345h1M481 407h1M481 472h1M481 537h1M481 602h1M481 665h1M481 667h1M483 342h1M485 342h1M487 342h1M489 342h1M491 342h1M493 342h1M495 342h1M497 342h1M499 342h1M501 17h1M501 19h1M501 82h1M501 147h1M501 212h1M501 277h1M501 339h1M501 341h1M501 342h1M501 343h1M501 345h1M501 407h1M501 472h1M501 537h1M501 602h1M501 665h1M501 667h1M503 342h1M505 342h1M507 342h1M509 342h1M511 342h1M513 342h1M515 17h1M515 82h1M515 147h1M515 212h1M515 277h1M515 342h1M515 407h1M515 472h1M515 537h1M515 602h1M515 667h1M517 17h1M517 82h1M517 147h1M517 212h1M517 277h1M517 342h1M517 407h1M517 472h1M517 537h1M517 602h1M517 667h1M518 17h1M518 30h1M518 43h1M518 56h1M518 69h1M518 82h1M518 95h1M518 108h1M518 121h1M518 134h1M518 147h1M518 160h1M518 173h1M518 186h1M518 199h1M518 212h1M518 225h1M518 238h1M518 251h1M518 264h1M518 277h1M518 290h1M518 303h1M518 316h1M518 329h1M518 355h1M518 368h1M518 381h1M518 394h1M518 407h1M518 420h1M518 433h1M518 446h1M518 459h1M518 472h1M518 485h1M518 498h1M518 511h1M518 524h1M518 537h1M518 550h1M518 563h1M518 576h1M518 589h1M518 602h1M518 615h1M518 628h1M518 641h1M518 654h1M518 667h1M519 17h1M519 82h1M519 147h1M519 212h1M519 277h1M519 342h1M519 407h1M519 472h1M519 537h1M519 602h1M519 667h1M520 17h1M520 30h1M520 43h1M520 56h1M520 69h1M520 82h1M520 95h1M520 108h1M520 121h1M520 134h1M520 147h1M520 160h1M520 173h1M520 186h1M520 199h1M520 212h1M520 225h1M520 238h1M520 251h1M520 264h1M520 277h1M520 290h1M520 303h1M520 316h1M520 329h1M520 355h1M520 368h1M520 381h1M520 394h1M520 407h1M520 420h1M520 433h1M520 446h1M520 459h1M520 472h1M520 485h1M520 498h1M520 511h1M520 524h1M520 537h1M520 550h1M520 563h1M520 576h1M520 589h1M520 602h1M520 615h1M520 628h1M520 641h1M520 654h1M520 667h1M521 18h1M521 20h1M521 22h1M521 24h1M521 26h1M521 28h1M521 30h1M521 32h1M521 34h1M521 36h1M521 38h1M521 40h1M521 42h1M521 43h1M521 44h1M521 46h1M521 48h1M521 50h1M521 52h1M521 54h1M521 56h1M521 58h1M521 60h1M521 62h1M521 64h1M521 66h1M521 68h1M521 69h1M521 70h1M521 72h1M521 74h1M521 76h1M521 78h1M521 80h1M521 82h1M521 84h1M521 86h1M521 88h1M521 90h1M521 92h1M521 94h1M521 95h1M521 96h1M521 98h1M521 100h1M521 102h1M521 104h1M521 106h1M521 108h1M521 110h1M521 112h1M521 114h1M521 116h1M521 118h1M521 120h1M521 121h1M521 122h1M521 124h1M521 126h1M521 128h1M521 130h1M521 132h1M521 134h1M521 136h1M521 138h1M521 140h1M521 142h1M521 144h1M521 146h1M521 147h1M521 148h1M521 150h1M521 152h1M521 154h1M521 156h1M521 158h1M521 160h1M521 162h1M521 164h1M521 166h1M521 168h1M521 170h1M521 172h1M521 173h1M521 174h1M521 176h1M521 178h1M521 180h1M521 182h1M521 184h1M521 186h1M521 188h1M521 190h1M521 192h1M521 194h1M521 196h1M521 198h1M521 199h1M521 200h1M521 202h1M521 204h1M521 206h1M521 208h1M521 210h1M521 212h1M521 214h1M521 216h1M521 218h1M521 220h1M521 222h1M521 224h1M521 225h1M521 226h1M521 228h1M521 230h1M521 232h1M521 234h1M521 236h1M521 238h1M521 240h1M521 242h1M521 244h1M521 246h1M521 248h1M521 250h1M521 251h1M521 252h1M521 254h1M521 256h1M521 258h1M521 260h1M521 262h1M521 264h1M521 266h1M521 268h1M521 270h1M521 272h1M521 274h1M521 276h1M521 277h1M521 278h1M521 280h1M521 282h1M521 284h1M521 286h1M521 288h1M521 290h1M521 292h1M521 294h1M521 296h1M521 298h1M521 300h1M521 302h1M521 303h1M521 304h1M521 306h1M521 308h1M521 310h1M521 312h1M521 314h1M521 316h1M521 318h1M521 320h1M521 322h1M521 324h1M521 326h1M521 328h1M521 329h1M521 330h1M521 332h1M521 334h1M521 336h1M521 338h1M521 340h1M521 342h1M521 344h1M521 346h1M521 348h1M521 350h1M521 352h1M521 354h1M521 355h1M521 356h1M521 358h1M521 360h1M521 362h1M521 364h1M521 366h1M521 368h1M521 370h1M521 372h1M521 374h1M521 376h1M521 378h1M521 380h1M521 381h1M521 382h1M521 384h1M521 386h1M521 388h1M521 390h1M521 392h1M521 394h1M521 396h1M521 398h1M521 400h1M521 402h1M521 404h1M521 406h1M521 407h1M521 408h1M521 410h1M521 412h1M521 414h1M521 416h1M521 418h1M521 420h1M521 422h1M521 424h1M521 426h1M521 428h1M521 430h1M521 432h1M521 433h1M521 434h1M521 436h1M521 438h1M521 440h1M521 442h1M521 444h1M521 446h1M521 448h1M521 450h1M521 452h1M521 454h1M521 456h1M521 458h1M521 459h1M521 460h1M521 462h1M521 464h1M521 466h1M521 468h1M521 470h1M521 472h1M521 474h1M521 476h1M521 478h1M521 480h1M521 482h1M521 484h1M521 485h1M521 486h1M521 488h1M521 490h1M521 492h1M521 494h1M521 496h1M521 498h1M521 500h1M521 502h1M521 504h1M521 506h1M521 508h1M521 510h1M521 511h1M521 512h1M521 514h1M521 516h1M521 518h1M521 520h1M521 522h1M521 524h1M521 526h1M521 528h1M521 530h1M521 532h1M521 534h1M521 536h1M521 537h1M521 538h1M521 540h1M521 542h1M521 544h1M521 546h1M521 548h1M521 550h1M521 552h1M521 554h1M521 556h1M521 558h1M521 560h1M521 562h1M521 563h1M521 564h1M521 566h1M521 568h1M521 570h1M521 572h1M521 574h1M521 576h1M521 578h1M521 580h1M521 582h1M521 584h1M521 586h1M521 588h1M521 589h1M521 590h1M521 592h1M521 594h1M521 596h1M521 598h1M521 600h1M521 602h1M521 604h1M521 606h1M521 608h1M521 610h1M521 612h1M521 614h1M521 615h1M521 616h1M521 618h1M521 620h1M521 622h1M521 624h1M521 626h1M521 628h1M521 630h1M521 632h1M521 634h1M521 636h1M521 638h1M521 640h1M521 641h1M521 642h1M521 644h1M521 646h1M521 648h1M521 650h1M521 652h1M521 654h1M521 656h1M521 658h1M521 660h1M521 662h1M521 664h1M521 666h1M522 17h1M522 30h1M522 43h1M522 56h1M522 69h1M522 82h1M522 95h1M522 108h1M522 121h1M522 134h1M522 147h1M522 160h1M522 173h1M522 186h1M522 199h1M522 212h1M522 225h1M522 238h1M522 251h1M522 264h1M522 277h1M522 290h1M522 303h1M522 316h1M522 329h1M522 355h1M522 368h1M522 381h1M522 394h1M522 407h1M522 420h1M522 433h1M522 446h1M522 459h1M522 472h1M522 485h1M522 498h1M522 511h1M522 524h1M522 537h1M522 550h1M522 563h1M522 576h1M522 589h1M522 602h1M522 615h1M522 628h1M522 641h1M522 654h1M522 667h1M523 17h1M523 82h1M523 147h1M523 212h1M523 277h1M523 342h1M523 407h1M523 472h1M523 537h1M523 602h1M523 667h1M524 17h1M524 30h1M524 43h1M524 56h1M524 69h1M524 82h1M524 95h1M524 108h1M524 121h1M524 134h1M524 147h1M524 160h1M524 173h1M524 186h1M524 199h1M524 212h1M524 225h1M524 238h1M524 251h1M524 264h1M524 277h1M524 290h1M524 303h1M524 316h1M524 329h1M524 355h1M524 368h1M524 381h1M524 394h1M524 407h1M524 420h1M524 433h1M524 446h1M524 459h1M524 472h1M524 485h1M524 498h1M524 511h1M524 524h1M524 537h1M524 550h1M524 563h1M524 576h1M524 589h1M524 602h1M524 615h1M524 628h1M524 641h1M524 654h1M524 667h1M525 17h1M525 82h1M525 147h1M525 212h1M525 277h1M525 342h1M525 407h1M525 472h1M525 537h1M525 602h1M525 667h1M527 17h1M527 82h1M527 147h1M527 212h1M527 277h1M527 342h1M527 407h1M527 472h1M527 537h1M527 602h1M527 667h1M529 342h1M531 342h1M533 342h1M535 342h1M537 342h1M539 342h1M541 17h1M541 19h1M541 82h1M541 147h1M541 212h1M541 277h1M541 339h1M541 341h1M541 342h1M541 343h1M541 345h1M541 407h1M541 472h1M541 537h1M541 602h1M541 665h1M541 667h1M543 342h1M545 342h1M547 342h1M549 342h1M551 342h1M553 342h1M555 342h1M557 342h1M559 342h1M561 17h1M561 19h1M561 82h1M561 147h1M561 212h1M561 277h1M561 339h1M561 341h1M561 342h1M561 343h1M561 345h1M561 407h1M561 472h1M561 537h1M561 602h1M561 665h1M561 667h1M563 342h1M565 342h1M567 342h1M569 342h1M571 342h1M573 342h1M575 342h1M577 342h1M579 342h1M581 17h1M581 19h1M581 82h1M581 147h1M581 212h1M581 277h1M581 339h1M581 341h1M581 342h1M581 343h1M581 345h1M581 407h1M581 472h1M581 537h1M581 602h1M581 665h1M581 667h1M583 342h1M585 342h1M587 342h1M589 342h1M591 342h1M593 342h1M595 342h1M597 342h1M599 342h1M601 17h1M601 19h1M601 82h1M601 147h1M601 212h1M601 277h1M601 339h1M601 341h1M601 342h1M601 343h1M601 345h1M601 407h1M601 472h1M601 537h1M601 602h1M601 665h1M601 667h1M603 342h1M605 342h1M607 342h1M609 342h1M611 342h1M613 342h1M615 342h1M617 342h1M619 342h1M621 18h1M621 20h1M621 22h1M621 30h1M621 43h1M621 56h1M621 69h1M621 82h1M621 95h1M621 108h1M621 121h1M621 134h1M621 147h1M621 160h1M621 173h1M621 186h1M621 199h1M621 212h1M621 225h1M621 238h1M621 251h1M621 264h1M621 277h1M621 290h1M621 303h1M621 316h1M621 329h1M621 336h1M621 338h1M621 339h1M621 340h1M621 341h1M621 342h1M621 343h1M621 344h1M621 345h1M621 346h1M621 348h1M621 355h1M621 368h1M621 381h1M621 394h1M621 407h1M621 420h1M621 433h1M621 446h1M621 459h1M621 472h1M621 485h1M621 498h1M621 511h1M621 524h1M621 537h1M621 550h1M621 563h1M621 576h1M621 589h1M621 602h1M621 615h1M621 628h1M621 641h1M621 654h1M621 662h1M621 664h1M621 666h1M623 342h1M625 342h1M627 342h1M629 342h1M631 342h1M633 342h1M635 342h1M637 342h1M639 342h1M641 17h1M641 19h1M641 82h1M641 147h1M641 212h1M641 277h1M641 339h1M641 341h1M641 342h1M641 343h1M641 345h1M641 407h1M641 472h1M641 537h1M641 602h1M641 665h1M641 667h1M643 342h1M645 342h1M647 342h1M649 342h1M651 342h1M653 342h1M655 342h1M657 342h1M659 342h1M661 17h1M661 19h1M661 82h1M661 147h1M661 212h1M661 277h1M661 339h1M661 341h1M661 342h1M661 343h1M661 345h1M661 407h1M661 472h1M661 537h1M661 602h1M661 665h1M661 667h1M663 342h1M665 342h1M667 342h1M669 342h1M671 342h1M673 342h1M675 342h1M677 342h1M679 342h1M681 17h1M681 19h1M681 82h1M681 147h1M681 212h1M681 277h1M681 339h1M681 341h1M681 342h1M681 343h1M681 345h1M681 407h1M681 472h1M681 537h1M681 602h1M681 665h1M681 667h1M683 342h1M685 342h1M687 342h1M689 342h1M691 342h1M693 342h1M695 342h1M697 342h1M699 342h1M701 17h1M701 19h1M701 82h1M701 147h1M701 212h1M701 277h1M701 339h1M701 341h1M701 342h1M701 343h1M701 345h1M701 407h1M701 472h1M701 537h1M701 602h1M701 665h1M701 667h1M703 342h1M705 342h1M707 342h1M709 342h1M711 342h1M713 342h1M715 342h1M717 342h1M719 342h1M721 18h1M721 20h1M721 22h1M721 30h1M721 43h1M721 56h1M721 69h1M721 82h1M721 95h1M721 108h1M721 121h1M721 134h1M721 147h1M721 160h1M721 173h1M721 186h1M721 199h1M721 212h1M721 225h1M721 238h1M721 251h1M721 264h1M721 277h1M721 290h1M721 303h1M721 316h1M721 329h1M721 336h1M721 338h1M721 339h1M721 340h1M721 341h1M721 342h1M721 343h1M721 344h1M721 345h1M721 346h1M721 348h1M721 355h1M721 368h1M721 381h1M721 394h1M721 407h1M721 420h1M721 433h1M721 446h1M721 459h1M721 472h1M721 485h1M721 498h1M721 511h1M721 524h1M721 537h1M721 550h1M721 563h1M721 576h1M721 589h1M721 602h1M721 615h1M721 628h1M721 641h1M721 654h1M721 662h1M721 664h1M721 666h1M723 342h1M725 342h1M727 342h1M729 342h1M731 342h1M733 342h1M735 342h1M737 342h1M739 342h1M741 17h1M741 19h1M741 82h1M741 147h1M741 212h1M741 277h1M741 339h1M741 341h1M741 342h1M741 343h1M741 345h1M741 407h1M741 472h1M741 537h1M741 602h1M741 665h1M741 667h1M743 342h1M745 342h1M747 342h1M749 342h1M751 342h1M753 342h1M755 342h1M757 342h1M759 342h1M761 17h1M761 19h1M761 82h1M761 147h1M761 212h1M761 277h1M761 339h1M761 341h1M761 342h1M761 343h1M761 345h1M761 407h1M761 472h1M761 537h1M761 602h1M761 665h1M761 667h1M763 342h1M765 342h1M767 342h1M769 342h1M771 342h1M773 342h1M775 342h1M777 342h1M779 342h1M781 17h1M781 19h1M781 82h1M781 147h1M781 212h1M781 277h1M781 339h1M781 341h1M781 342h1M781 343h1M781 345h1M781 407h1M781 472h1M781 537h1M781 602h1M781 665h1M781 667h1M783 342h1M785 342h1M787 342h1M789 342h1M791 342h1M793 342h1M795 342h1M797 342h1M799 342h1M801 17h1M801 19h1M801 82h1M801 147h1M801 212h1M801 277h1M801 339h1M801 341h1M801 342h1M801 343h1M801 345h1M801 407h1M801 472h1M801 537h1M801 602h1M801 665h1M801 667h1M803 342h1M805 342h1M807 342h1M809 342h1M811 342h1M813 342h1M815 342h1M817 342h1M819 342h1M821 18h1M821 20h1M821 22h1M821 30h1M821 43h1M821 56h1M821 69h1M821 82h1M821 95h1M821 108h1M821 121h1M821 134h1M821 147h1M821 160h1M821 173h1M821 186h1M821 199h1M821 212h1M821 225h1M821 238h1M821 251h1M821 264h1M821 277h1M821 290h1M821 303h1M821 316h1M821 329h1M821 336h1M821 338h1M821 339h1M821 340h1M821 341h1M821 342h1M821 343h1M821 344h1M821 345h1M821 346h1M821 348h1M821 355h1M821 368h1M821 381h1M821 394h1M821 407h1M821 420h1M821 433h1M821 446h1M821 459h1M821 472h1M821 485h1M821 498h1M821 511h1M821 524h1M821 537h1M821 550h1M821 563h1M821 576h1M821 589h1M821 602h1M821 615h1M821 628h1M821 641h1M821 654h1M821 662h1M821 664h1M821 666h1M823 342h1M825 342h1M827 342h1M829 342h1M831 342h1M833 342h1M835 342h1M837 342h1M839 342h1M841 17h1M841 19h1M841 82h1M841 147h1M841 212h1M841 277h1M841 339h1M841 341h1M841 342h1M841 343h1M841 345h1M841 407h1M841 472h1M841 537h1M841 602h1M841 665h1M841 667h1M843 342h1M845 342h1M847 342h1M849 342h1M851 342h1M853 342h1M855 342h1M857 342h1M859 342h1M861 17h1M861 19h1M861 82h1M861 147h1M861 212h1M861 277h1M861 339h1M861 341h1M861 342h1M861 343h1M861 345h1M861 407h1M861 472h1M861 537h1M861 602h1M861 665h1M861 667h1M863 342h1M865 342h1M867 342h1M869 342h1M871 342h1M873 342h1M875 342h1M877 342h1M879 342h1M881 17h1M881 19h1M881 82h1M881 147h1M881 212h1M881 277h1M881 339h1M881 341h1M881 342h1M881 343h1M881 345h1M881 407h1M881 472h1M881 537h1M881 602h1M881 665h1M881 667h1M883 342h1M885 342h1M887 342h1M889 342h1M891 342h1M893 342h1M895 342h1M897 342h1M899 342h1M901 17h1M901 19h1M901 82h1M901 147h1M901 212h1M901 277h1M901 339h1M901 341h1M901 342h1M901 343h1M901 345h1M901 407h1M901 472h1M901 537h1M901 602h1M901 665h1M901 667h1M903 342h1M905 342h1M907 342h1M909 342h1M911 342h1M913 342h1M915 342h1M917 342h1M919 342h1M921 18h1M921 20h1M921 22h1M921 30h1M921 43h1M921 56h1M921 69h1M921 82h1M921 95h1M921 108h1M921 121h1M921 134h1M921 147h1M921 160h1M921 173h1M921 186h1M921 199h1M921 212h1M921 225h1M921 238h1M921 251h1M921 264h1M921 277h1M921 290h1M921 303h1M921 316h1M921 329h1M921 336h1M921 338h1M921 339h1M921 340h1M921 341h1M921 342h1M921 343h1M921 344h1M921 345h1M921 346h1M921 348h1M921 355h1M921 368h1M921 381h1M921 394h1M921 407h1M921 420h1M921 433h1M921 446h1M921 459h1M921 472h1M921 485h1M921 498h1M921 511h1M921 524h1M921 537h1M921 550h1M921 563h1M921 576h1M921 589h1M921 602h1M921 615h1M921 628h1M921 641h1M921 654h1M921 662h1M921 664h1M921 666h1M923 342h1M925 342h1M927 342h1M929 342h1M931 342h1M933 342h1M935 342h1M937 342h1M939 342h1M941 17h1M941 19h1M941 82h1M941 147h1M941 212h1M941 277h1M941 339h1M941 341h1M941 342h1M941 343h1M941 345h1M941 407h1M941 472h1M941 537h1M941 602h1M941 665h1M941 667h1M943 342h1M945 342h1M947 342h1M949 342h1M951 342h1M953 342h1M955 342h1M957 342h1M959 342h1M961 17h1M961 19h1M961 82h1M961 147h1M961 212h1M961 277h1M961 339h1M961 341h1M961 342h1M961 343h1M961 345h1M961 407h1M961 472h1M961 537h1M961 602h1M961 665h1M961 667h1M963 342h1M965 342h1M967 342h1M969 342h1M971 342h1M973 342h1M975 342h1M977 342h1M979 342h1M981 17h1M981 19h1M981 82h1M981 147h1M981 212h1M981 277h1M981 339h1M981 341h1M981 342h1M981 343h1M981 345h1M981 407h1M981 472h1M981 537h1M981 602h1M981 665h1M981 667h1M983 342h1M985 342h1M987 342h1M989 342h1M991 342h1M993 342h1M995 342h1M997 342h1M999 342h1M1001 17h1M1001 19h1M1001 82h1M1001 147h1M1001 212h1M1001 277h1M1001 339h1M1001 341h1M1001 342h1M1001 343h1M1001 345h1M1001 407h1M1001 472h1M1001 537h1M1001 602h1M1001 665h1M1001 667h1M1003 342h1M1005 342h1M1007 342h1M1009 342h1M1011 342h1M1013 342h1M1015 82h1M1015 147h1M1015 212h1M1015 277h1M1015 342h1M1015 407h1M1015 472h1M1015 537h1M1015 602h1M1017 82h1M1017 147h1M1017 212h1M1017 277h1M1017 342h1M1017 407h1M1017 472h1M1017 537h1M1017 602h1M1018 30h1M1018 43h1M1018 56h1M1018 69h1M1018 95h1M1018 108h1M1018 121h1M1018 134h1M1018 160h1M1018 173h1M1018 186h1M1018 199h1M1018 225h1M1018 238h1M1018 251h1M1018 264h1M1018 290h1M1018 303h1M1018 316h1M1018 329h1M1018 355h1M1018 368h1M1018 381h1M1018 394h1M1018 420h1M1018 433h1M1018 446h1M1018 459h1M1018 485h1M1018 498h1M1018 511h1M1018 524h1M1018 550h1M1018 563h1M1018 576h1M1018 589h1M1018 615h1M1018 628h1M1018 641h1M1018 654h1M1019 82h1M1019 147h1M1019 212h1M1019 277h1M1019 342h1M1019 407h1M1019 472h1M1019 537h1M1019 602h1M1020 30h1M1020 43h1M1020 56h1M1020 69h1M1020 95h1M1020 108h1M1020 121h1M1020 134h1M1020 160h1M1020 173h1M1020 186h1M1020 199h1M1020 225h1M1020 238h1M1020 251h1M1020 264h1M1020 290h1M1020 303h1M1020 316h1M1020 329h1M1020 355h1M1020 368h1M1020 381h1M1020 394h1M1020 420h1M1020 433h1M1020 446h1M1020 459h1M1020 485h1M1020 498h1M1020 511h1M1020 524h1M1020 550h1M1020 563h1M1020 576h1M1020 589h1M1020 615h1M1020 628h1M1020 641h1M1020 654h1" transform="translate(0,0.5)"/>
<path d="M1010 189.5l6-5.5v11z" fill="#00b000" shape-rendering="geometricPrecision"/><rect x="1016" y="189" width="5" height="1" fill="#00b000"/>
<rect x="177" y="17" width="1" height="651" fill="#a000b0"/>
<rect x="277" y="17" width="1" height="651" fill="#a000b0"/>
<path stroke="#a000b0" d="M23 17.5h4M31 17.5h4M39 17.5h4M47 17.5h4M55 17.5h4M63 17.5h4M71 17.5h4M79 17.5h4M87 17.5h4M95 17.5h4M103 17.5h4M111 17.5h4M119 17.5h4M127 17.5h4M135 17.5h4M143 17.5h4M151 17.5h4M159 17.5h4M167 17.5h4M175 17.5h4M183 17.5h4M191 17.5h4M199 17.5h4M207 17.5h4M215 17.5h4M223 17.5h4M231 17.5h4M239 17.5h4M247 17.5h4M255 17.5h4M263 17.5h4M271 17.5h4M279 17.5h4M287 17.5h4M295 17.5h4M303 17.5h4M311 17.5h4M319 17.5h4M327 17.5h4M335 17.5h4M343 17.5h4M351 17.5h4M359 17.5h4M367 17.5h4M375 17.5h4M383 17.5h4M391 17.5h4M399 17.5h4M407 17.5h4M415 17.5h4M423 17.5h4M431 17.5h4M439 17.5h4M447 17.5h4M455 17.5h4M463 17.5h4M471 17.5h4M479 17.5h4M487 17.5h4M495 17.5h4M503 17.5h4M511 17.5h4M519 17.5h4M527 17.5h4M535 17.5h4M543 17.5h4M551 17.5h4M559 17.5h4M567 17.5h4M575 17.5h4M583 17.5h4M591 17.5h4M599 17.5h4M607 17.5h4M615 17.5h4M623 17.5h4M631 17.5h4M639 17.5h4M647 17.5h4M655 17.5h4M663 17.5h4M671 17.5h4M679 17.5h4M687 17.5h4M695 17.5h4M703 17.5h4M711 17.5h4"/>
<path stroke="#a000b0" d="M23 524.5h4M31 524.5h4M39 524.5h4M47 524.5h4M55 524.5h4M63 524.5h4M71 524.5h4M79 524.5h4M87 524.5h4M95 524.5h4M103 524.5h4M111 524.5h4M119 524.5h4M127 524.5h4M135 524.5h4M143 524.5h4M151 524.5h4M159 524.5h4M167 524.5h4M175 524.5h4M183 524.5h4M191 524.5h4M199 524.5h4M207 524.5h4M215 524.5h4M223 524.5h4M231 524.5h4M239 524.5h4M247 524.5h4M255 524.5h4M263 524.5h4M271 524.5h4M279 524.5h4M287 524.5h4M295 524.5h4M303 524.5h4M311 524.5h4M319 524.5h4M327 524.5h4M335 524.5h4M343 524.5h4M351 524.5h4M359 524.5h4M367 524.5h4M375 524.5h4M383 524.5h4M391 524.5h4M399 524.5h4M407 524.5h4M415 524.5h4M423 524.5h4M431 524.5h4M439 524.5h4M447 524.5h4M455 524.5h4M463 524.5h4M471 524.5h4M479 524.5h4M487 524.5h4M495 524.5h4M503 524.5h4M511 524.5h4M519 524.5h4M527 524.5h4M535 524.5h4M543 524.5h4M551 524.5h4M559 524.5h4M567 524.5h4M575 524.5h4M583 524.5h4M591 524.5h4M599 524.5h4M607 524.5h4M615 524.5h4M623 524.5h4M631 524.5h4M639 524.5h4M647 524.5h4M655 524.5h4M663 524.5h4M671 524.5h4M679 524.5h4M687 524.5h4M695 524.5h4M703 524.5h4M711 524.5h4M719 524.5h4M727 524.5h4M735 524.5h4M743 524.5h4M751 524.5h4M759 524.5h4M767 524.5h4M775 524.5h4M783 524.5h4M791 524.5h4M799 524.5h4M807 524.5h4M815 524.5h4M823 524.5h4M831 524.5h4M839 524.5h4M847 524.5h4M855 524.5h4M863 524.5h4M871 524.5h4M879 524.5h4M887 524.5h4M895 524.5h4M903 524.5h4M911 524.5h4M919 524.5h4M927 524.5h4M935 524.5h4M943 524.5h4M951 524.5h4M959 524.5h4M967 524.5h4M975 524.5h4M983 524.5h4M991 524.5h4M999 524.5h4M1007 524.5h4M1015 524.5h4"/>
<circle cx="277.5" cy="524.5" r="7" fill="#000" stroke="#a000b0" stroke-width="1.2" shape-rendering="geometricPrecision"/>
<rect x="270" y="524" width="15" height="1" fill="#a000b0"/>
<rect x="277" y="517" width="1" height="15" fill="#a000b0"/>
<path stroke="#a000b0" fill="none" d="M167 17.5h20M170.5 17v7.5h11M184.5 17v7M177.5 17v5"/>
<path d="M171 25h10v10l-5 4l-5-4z" fill="#ff9900"/>
<path d="M173 27h6v1.5h-2.2v8h-1.6v-8h-2.2z" fill="#000"/>
<circle cx="187" cy="30" r="8" fill="#ff4e00" shape-rendering="geometricPrecision"/>
<text x="182.5" y="35" font-size="14" font-weight="bold" fill="#000">a</text>
<circle cx="267" cy="30" r="8" fill="#ff4e00" shape-rendering="geometricPrecision"/>
<text x="262.5" y="35.5" font-size="14" font-weight="bold" fill="#000">b</text>
<path d="M516 17h11l-5.5 6z" fill="#ff9900" shape-rendering="geometricPrecision"/>
<rect x="22" y="291" width="36" height="16" fill="#000"/>
<rect x="21" y="467" width="23" height="16" fill="#000"/>
<rect x="21" y="507" width="25" height="16" fill="#000"/>
<rect x="21" y="542" width="46" height="16" fill="#000"/>
<text x="23.27" y="304" font-size="15.5" fill="#ffffff" letter-spacing="0.714">ODL</text>
<text x="22.77" y="481" font-size="15.5" fill="#ffffff" letter-spacing="0.218">S4</text>
<text x="23.27" y="521" font-size="15.5" fill="#ffffff" letter-spacing="-0.053">EN</text>
<text x="22.75" y="556" font-size="15.5" fill="#ffffff" letter-spacing="0.371">THER</text>
<path d="M0.8 293.5L2.8 291.5H12.8L19.5 299.5L12.8 307.5H2.8L0.8 305.5z" fill="#000" stroke="#00c000" stroke-width="1.6" shape-rendering="geometricPrecision"/>
<text x="7.5" y="305.0" font-size="15.7" fill="#00c000" stroke="#00c000" stroke-width="0.5" text-anchor="middle">4</text>
<path d="M0 468.5H12.8L19.5 476.5L12.8 484.5H0z" fill="#b000b0" shape-rendering="geometricPrecision"/>
<path d="M0 469.0H12.8" stroke="#c8d8f0" stroke-width="1" shape-rendering="geometricPrecision"/>
<path d="M19.5 477.1L12.8 484.5H1" fill="none" stroke="#000" stroke-width="1.2" shape-rendering="geometricPrecision"/>
<text x="7.5" y="482.0" font-size="15.7" fill="#000" stroke="#000" stroke-width="0.5" text-anchor="middle">3</text>
<path d="M0.8 510.5L2.8 508.5H12.8L19.5 516.5L12.8 524.5H2.8L0.8 522.5z" fill="#000" stroke="#00e0f0" stroke-width="1.6" shape-rendering="geometricPrecision"/>
<text x="7.5" y="522.0" font-size="15.7" fill="#00e0f0" stroke="#00e0f0" stroke-width="0.5" text-anchor="middle">2</text>
<path d="M0.8 545.5L2.8 543.5H12.8L19.5 551.5L12.8 559.5H2.8L0.8 557.5z" fill="#000" stroke="#f0f000" stroke-width="1.6" shape-rendering="geometricPrecision"/>
<text x="7.5" y="557.0" font-size="15.7" fill="#f0f000" stroke="#f0f000" stroke-width="0.5" text-anchor="middle">1</text>
<rect x="719.5" y="40.5" width="301" height="78" rx="6" fill="#030503" stroke="#e8e8e8" stroke-width="1" shape-rendering="geometricPrecision"/>
<rect x="738.5" y="44.5" width="14" height="14" fill="none" stroke="#b000c0" stroke-width="1.2"/>
<circle cx="745.5" cy="71.5" r="7.2" fill="none" stroke="#b000c0" stroke-width="1.2" shape-rendering="geometricPrecision"/>
<circle cx="766" cy="52" r="8" fill="#ff4e00" shape-rendering="geometricPrecision"/>
<text x="761.5" y="57" font-size="14" font-weight="bold" fill="#000">a</text>
<circle cx="766" cy="90" r="8" fill="#ff4e00" shape-rendering="geometricPrecision"/>
<text x="761.5" y="95.5" font-size="14" font-weight="bold" fill="#000">b</text>
<text x="798.71" y="57" font-size="15.7" fill="#b000c0" letter-spacing="1.728" stroke="#b000c0" stroke-width="0.2">−4.00µs</text>
<text x="804.08" y="76" font-size="15.7" fill="#b000c0" letter-spacing="1.265" stroke="#b000c0" stroke-width="0.2">2.00ms</text>
<text x="811.18" y="95" font-size="15.7" fill="#b000c0" letter-spacing="1.200" stroke="#b000c0" stroke-width="0.2">2.00ms</text>
<text x="820.80" y="114" font-size="15.7" fill="#b000c0" letter-spacing="1.051" stroke="#b000c0" stroke-width="0.2">Cursors Linked</text>
<text x="937.89" y="57" font-size="15.7" fill="#b000c0" letter-spacing="1.023" stroke="#b000c0" stroke-width="0.2">7.06 V</text>
<text x="929.81" y="76" font-size="15.7" fill="#b000c0" letter-spacing="1.540" stroke="#b000c0" stroke-width="0.2">−740mV</text>
<text x="945.19" y="95" font-size="15.7" fill="#b000c0" letter-spacing="1.146" stroke="#b000c0" stroke-width="0.2">7.80 V</text>
<path d="M802.5 85.5L796.8 94.2H808.2z" fill="none" stroke="#b000c0" stroke-width="1.5" shape-rendering="geometricPrecision"/>
<path d="M937.6 85.5L931.8 94.2H943.4z" fill="none" stroke="#b000c0" stroke-width="1.5" shape-rendering="geometricPrecision"/>
<rect x="21.5" y="634.5" width="553" height="20" rx="6" fill="#030503" stroke="#d8d8d8" shape-rendering="geometricPrecision"/>
<rect x="26" y="637" width="25" height="16" rx="6.5" ry="8" fill="#f4f400" shape-rendering="geometricPrecision"/>
<path d="M38 639h2v11h-2v-8.6h-2.2v-1.4h1.2z" fill="#000"/>
<rect x="165" y="637" width="25" height="16" rx="6.5" ry="8" fill="#10e0f0" shape-rendering="geometricPrecision"/>
<text x="177.8" y="650" font-size="15" fill="#000" stroke="#000" stroke-width="0.5" text-anchor="middle">2</text>
<rect x="304" y="637" width="25" height="16" rx="6.5" ry="8" fill="#b000b0" shape-rendering="geometricPrecision"/>
<text x="316.8" y="650" font-size="15" fill="#000" stroke="#000" stroke-width="0.5" text-anchor="middle">3</text>
<rect x="443" y="637" width="25" height="16" rx="6.5" ry="8" fill="#00b000" shape-rendering="geometricPrecision"/>
<text x="455.8" y="650" font-size="15" fill="#000" stroke="#000" stroke-width="0.5" text-anchor="middle">4</text>
<text x="68.83" y="650" font-size="15.7" fill="#f4f400" letter-spacing="0.727" stroke="#f4f400" stroke-width="0.3">1.00 V</text>
<text x="206.84" y="650" font-size="15.7" fill="#10e0f0" letter-spacing="0.941" stroke="#10e0f0" stroke-width="0.2">1.00 V</text>
<text x="346.84" y="650" font-size="15.7" fill="#b000b0" letter-spacing="0.850" stroke="#b000b0" stroke-width="0.2">1.00 V</text>
<text x="485.84" y="650" font-size="15.7" fill="#00b000" letter-spacing="0.910" stroke="#00b000" stroke-width="0.2">1.00 V</text>
<rect x="21.5" y="656.5" width="553" height="110" rx="6" fill="#030503" stroke="#d8d8d8" shape-rendering="geometricPrecision"/>
<rect x="26" y="677" width="25" height="16" rx="6.5" ry="8" fill="#f4f400" shape-rendering="geometricPrecision"/>
<path d="M38 679h2v11h-2v-8.6h-2.2v-1.4h1.2z" fill="#000"/>
<rect x="26" y="695" width="25" height="16" rx="6.5" ry="8" fill="#f4f400" shape-rendering="geometricPrecision"/>
<path d="M38 697h2v11h-2v-8.6h-2.2v-1.4h1.2z" fill="#000"/>
<rect x="26" y="713" width="25" height="16" rx="6.5" ry="8" fill="#f4f400" shape-rendering="geometricPrecision"/>
<path d="M38 715h2v11h-2v-8.6h-2.2v-1.4h1.2z" fill="#000"/>
<rect x="26" y="731" width="25" height="16" rx="6.5" ry="8" fill="#f4f400" shape-rendering="geometricPrecision"/>
<path d="M38 733h2v11h-2v-8.6h-2.2v-1.4h1.2z" fill="#000"/>
<rect x="26" y="749" width="25" height="16" rx="6.5" ry="8" fill="#f4f400" shape-rendering="geometricPrecision"/>
<path d="M38 751h2v11h-2v-8.6h-2.2v-1.4h1.2z" fill="#000"/>
<text x="157.64" y="672" font-size="15.7" fill="#ffffff" letter-spacing="1.143" stroke="#ffffff" stroke-width="0.2">Value</text>
<text x="245.36" y="672" font-size="15.7" fill="#ffffff" letter-spacing="1.109" stroke="#ffffff" stroke-width="0.2">Mean</text>
<text x="327.76" y="672" font-size="15.7" fill="#ffffff" letter-spacing="3.164" stroke="#ffffff" stroke-width="0.2">Min</text>
<text x="410.16" y="672" font-size="15.7" fill="#ffffff" letter-spacing="0.739" stroke="#ffffff" stroke-width="0.2">Max</text>
<text x="491.66" y="672" font-size="15.7" fill="#ffffff" letter-spacing="0.965" stroke="#ffffff" stroke-width="0.2">Std Dev</text>
<text x="55.48" y="690" font-size="15.7" fill="#f4f400" letter-spacing="2.737" stroke="#f4f400" stroke-width="0.3">Min</text>
<text x="157.51" y="690" font-size="15.7" fill="#f4f400" letter-spacing="1.344" stroke="#f4f400" stroke-width="0.3">−140mV</text>
<text x="245.53" y="690" font-size="15.7" fill="#f4f400" letter-spacing="1.586" stroke="#f4f400" stroke-width="0.3">1.56</text>
<text x="327.41" y="690" font-size="15.7" fill="#f4f400" letter-spacing="1.843" stroke="#f4f400" stroke-width="0.3">−180m</text>
<text x="410.33" y="690" font-size="15.7" fill="#f4f400" letter-spacing="1.196" stroke="#f4f400" stroke-width="0.3">1.70</text>
<text x="492.55" y="690" font-size="15.7" fill="#f4f400" letter-spacing="1.397" stroke="#f4f400" stroke-width="0.3">405m</text>
<text x="55.18" y="708" font-size="15.7" fill="#f4f400" letter-spacing="1.360" stroke="#f4f400" stroke-width="0.3">Max</text>
<text x="157.85" y="708" font-size="15.7" fill="#f4f400" letter-spacing="0.866" stroke="#f4f400" stroke-width="0.3">2.02 V</text>
<text x="245.53" y="708" font-size="15.7" fill="#f4f400" letter-spacing="1.360" stroke="#f4f400" stroke-width="0.3">1.98</text>
<text x="328.55" y="708" font-size="15.7" fill="#f4f400" letter-spacing="1.384" stroke="#f4f400" stroke-width="0.3">220m</text>
<text x="411.02" y="708" font-size="15.7" fill="#f4f400" letter-spacing="1.360" stroke="#f4f400" stroke-width="0.3">3.46</text>
<text x="492.35" y="708" font-size="15.7" fill="#f4f400" letter-spacing="1.360" stroke="#f4f400" stroke-width="0.3">263m</text>
<text x="55.18" y="726" font-size="15.7" fill="#f4f400" letter-spacing="1.360" stroke="#f4f400" stroke-width="0.3">RMS</text>
<text x="157.85" y="726" font-size="15.7" fill="#f4f400" letter-spacing="1.149" stroke="#f4f400" stroke-width="0.3">850mV</text>
<text x="245.53" y="726" font-size="15.7" fill="#f4f400" letter-spacing="1.360" stroke="#f4f400" stroke-width="0.3">1.77</text>
<text x="328.75" y="726" font-size="15.7" fill="#f4f400" letter-spacing="1.360" stroke="#f4f400" stroke-width="0.3">45.5m</text>
<text x="410.33" y="726" font-size="15.7" fill="#f4f400" letter-spacing="1.360" stroke="#f4f400" stroke-width="0.3">1.85</text>
<text x="492.42" y="726" font-size="15.7" fill="#f4f400" letter-spacing="1.360" stroke="#f4f400" stroke-width="0.3">311m</text>
<text x="55.18" y="744" font-size="15.7" fill="#f4f400" letter-spacing="0.450" stroke="#f4f400" stroke-width="0.3">Peak−Peak</text>
<text x="157.85" y="744" font-size="15.7" fill="#f4f400" letter-spacing="1.360" stroke="#f4f400" stroke-width="0.3">2.16 V</text>
<text x="246.35" y="744" font-size="15.7" fill="#f4f400" letter-spacing="1.471" stroke="#f4f400" stroke-width="0.3">419m</text>
<text x="328.62" y="744" font-size="15.7" fill="#f4f400" letter-spacing="1.360" stroke="#f4f400" stroke-width="0.3">320m</text>
<text x="411.02" y="744" font-size="15.7" fill="#f4f400" letter-spacing="1.360" stroke="#f4f400" stroke-width="0.3">3.60</text>
<text x="492.42" y="744" font-size="15.7" fill="#f4f400" letter-spacing="1.360" stroke="#f4f400" stroke-width="0.3">315m</text>
<text x="55.18" y="762" font-size="15.7" fill="#f4f400" letter-spacing="1.035" stroke="#f4f400" stroke-width="0.3">Frequency</text>
<text x="157.81" y="762" font-size="15.7" fill="#f4f400" letter-spacing="1.648" stroke="#f4f400" stroke-width="0.3">−−−−.Hz</text>
<text x="245.36" y="762" font-size="15.7" fill="#ffffff" letter-spacing="1.502" stroke="#ffffff" stroke-width="0.2">No period found</text>
<rect x="584.5" y="670.5" width="147" height="37" rx="6" fill="#030503" stroke="#d8d8d8" shape-rendering="geometricPrecision"/>
<text x="589.88" y="686" font-size="15.7" fill="#ffffff" letter-spacing="1.109" stroke="#ffffff" stroke-width="0.2">2.00ms</text>
<text x="623.70" y="703" font-size="15.7" fill="#ff9900" letter-spacing="1.287" stroke="#ff9900" stroke-width="0.2">6.87600ms</text>
<rect x="590" y="691" width="11" height="13" rx="2" fill="#ff9900"/>
<path d="M592 693h7v1.6h-2.7v8h-1.6v-8h-2.7z" fill="#000"/>
<path d="M602 697.5h8" stroke="#ff9900" stroke-width="1.5"/><path d="M608 694.5l4 3l-4 3z" fill="#ff9900" shape-rendering="geometricPrecision"/>
<path d="M612 693h11l-5.5 6z" fill="#ff9900" shape-rendering="geometricPrecision"/>
<rect x="741.5" y="670.5" width="106" height="37" rx="6" fill="#030503" stroke="#d8d8d8" shape-rendering="geometricPrecision"/>
<text x="746.50" y="686" font-size="15.7" fill="#ffffff" letter-spacing="1.427" stroke="#ffffff" stroke-width="0.2">5.00MS/s</text>
<text x="746.34" y="703" font-size="15.7" fill="#ffffff" letter-spacing="1.608" stroke="#ffffff" stroke-width="0.2">100k points</text>
<rect x="857.5" y="670.5" width="163" height="37" rx="6" fill="#030503" stroke="#d8d8d8" shape-rendering="geometricPrecision"/>
<rect x="889" y="673" width="25" height="16" rx="6.5" ry="8" fill="#00b000" shape-rendering="geometricPrecision"/>
<text x="901.8" y="686" font-size="15" fill="#000" stroke="#000" stroke-width="0.5" text-anchor="middle">4</text>
<path d="M928 676.5h4.5l4 9h4" fill="none" stroke="#fff" stroke-width="1.8" shape-rendering="geometricPrecision"/>
<text x="962.64" y="686" font-size="15.7" fill="#ffffff" letter-spacing="0.941" stroke="#ffffff" stroke-width="0.2">1.70 V</text>
</svg></body></html>
